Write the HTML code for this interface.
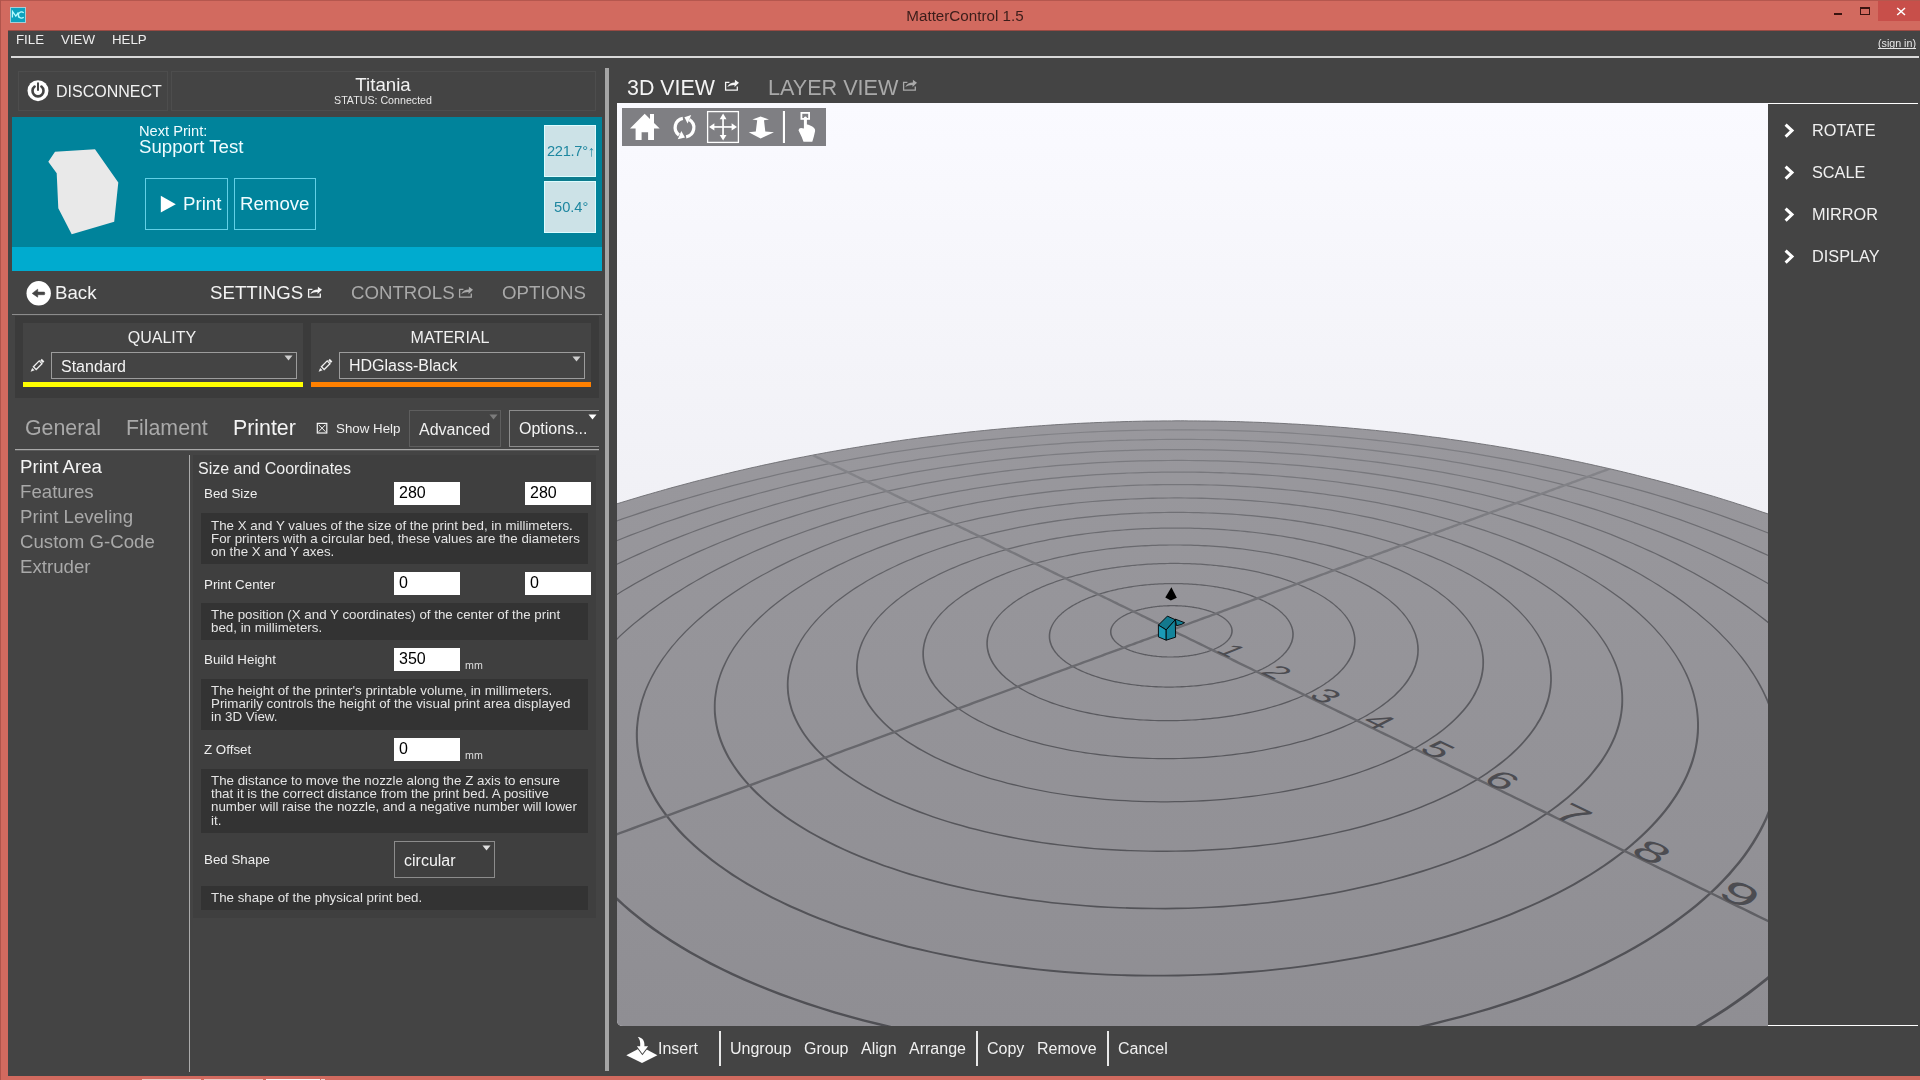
<!DOCTYPE html><html><head><meta charset="utf-8"><style>
html,body{margin:0;padding:0;width:1920px;height:1080px;overflow:hidden;background:#d26a5f;}
.t{position:absolute;white-space:pre;font-family:"Liberation Sans",sans-serif;will-change:transform;}
.r{position:absolute;}
svg{position:absolute;}
</style></head><body>
<div class="r" style="left:0px;top:0px;width:1920px;height:1px;background:#b5574e;"></div>
<div class="r" style="left:0px;top:0px;width:1px;height:1080px;background:#b0544b;"></div>
<div class="r" style="left:8px;top:31px;width:1912px;height:1045px;background:#444444;"></div>
<div class="r" style="left:8px;top:30px;width:1912px;height:1px;background:#9a4a43;"></div>
<svg style="left:10px;top:7px" width="16" height="16"><rect x="0.5" y="0.5" width="15" height="15" fill="#0ca2bf" stroke="#a9ccd6" stroke-width="1"/><path d="M2.4,10.6 L2.5,4.4 L5.8,9.1 L8.4,5.5 M8.6,10.5 L8.3,5.5" fill="none" stroke="#b4fbff" stroke-width="1.3"/><path d="M13.7,5.9 A3.1,3.1 0 1 0 13.7,10.2" fill="none" stroke="#b4fbff" stroke-width="1.3"/></svg>
<div class="t" style="left:664.8px;width:600px;text-align:center;top:7.9px;font-size:15.2px;line-height:15.2px;color:#3b1d1a;">MatterControl 1.5</div>
<div class="r" style="left:1878px;top:1px;width:42px;height:20px;background:#c84f4a;"></div>
<div class="r" style="left:1834px;top:13px;width:8px;height:2px;background:#3a1410;"></div>
<div class="r" style="left:1860px;top:7px;width:10px;height:8px;box-sizing:border-box;border:1px solid #3a1410;background:transparent;border-top-width:2px;"></div>
<svg style="left:1890px;top:4px" width="20" height="14"><path d="M7.2,4 L15,11 M15,4 L7.2,11" stroke="#fff" stroke-width="1.5"/></svg>
<div class="t" style="left:16.3px;top:33.0px;font-size:13.3px;line-height:13.3px;color:#eeeeee;">FILE</div>
<div class="t" style="left:61.0px;top:33.0px;font-size:13.3px;line-height:13.3px;color:#eeeeee;">VIEW</div>
<div class="t" style="left:112.2px;top:33.0px;font-size:13.3px;line-height:13.3px;color:#eeeeee;">HELP</div>
<div class="t" style="left:1316.0px;width:600px;text-align:right;top:37.8px;font-size:10.7px;line-height:10.7px;color:#e6e6e6;text-decoration:underline;text-decoration-skip-ink:none;">(sign in)</div>
<div class="r" style="left:11px;top:56px;width:1908px;height:2px;background:#d9d9d9;"></div>
<div class="r" style="left:18px;top:71px;width:150px;height:40px;box-sizing:border-box;border:1px solid #4d4d4d;background:transparent;"></div>
<div class="r" style="left:171px;top:71px;width:425px;height:40px;box-sizing:border-box;border:1px solid #4d4d4d;background:transparent;"></div>
<svg style="left:26px;top:79px" width="24" height="24"><circle cx="12" cy="11.7" r="10.5" fill="#fff"/><path d="M8.6,7.6 A5.5,5.5 0 1 0 15.4,7.6" fill="none" stroke="#444" stroke-width="2.6" stroke-linecap="round"/><path d="M12,4.2 L12,11" stroke="#444" stroke-width="2" stroke-linecap="round"/></svg>
<div class="t" style="left:56.0px;top:84.1px;font-size:16px;line-height:16px;color:#f2f2f2;">DISCONNECT</div>
<div class="t" style="left:83.0px;width:600px;text-align:center;top:76.0px;font-size:18.67px;line-height:18.67px;color:#f2f2f2;">Titania</div>
<div class="t" style="left:83.0px;width:600px;text-align:center;top:95.2px;font-size:10.67px;line-height:10.67px;color:#e8e8e8;">STATUS: Connected</div>
<div class="r" style="left:12px;top:117px;width:590px;height:130px;background:#00839b;"></div>
<div class="r" style="left:12px;top:247px;width:590px;height:24px;background:#00abcf;"></div>
<svg style="left:40px;top:140px" width="90" height="100"><polygon points="8.3,21.7 15,11.7 55,9.2 78.3,42.5 74.2,81.7 31.7,94.2 18.3,68.3 16.7,33.3" fill="#e9e9e9"/></svg>
<div class="t" style="left:139.0px;top:123.6px;font-size:14.67px;line-height:14.67px;color:#effcff;">Next Print:</div>
<div class="t" style="left:139.0px;top:137.7px;font-size:18.67px;line-height:18.67px;color:#effcff;">Support Test</div>
<div class="r" style="left:145px;top:178px;width:83px;height:52px;box-sizing:border-box;border:1px solid #62d0e6;background:transparent;"></div>
<div class="r" style="left:234px;top:178px;width:82px;height:52px;box-sizing:border-box;border:1px solid #62d0e6;background:transparent;"></div>
<svg style="left:155px;top:190px" width="30" height="30"><polygon points="5.8,5.8 20.8,14.2 5.8,22.5" fill="#fff"/></svg>
<div class="t" style="left:183.0px;top:195.2px;font-size:18.67px;line-height:18.67px;color:#effcff;">Print</div>
<div class="t" style="left:240.0px;top:195.2px;font-size:18.67px;line-height:18.67px;color:#effcff;">Remove</div>
<div class="r" style="left:544px;top:177px;width:52px;height:4px;background:#0c7c8e;"></div>
<div class="r" style="left:544px;top:125px;width:52px;height:52px;box-sizing:border-box;border:1px solid #dcfdff;background:#cce2e7;"></div>
<div class="r" style="left:544px;top:181px;width:52px;height:52px;box-sizing:border-box;border:1px solid #dcfdff;background:#cce2e7;"></div>
<div class="t" style="left:547.3px;top:144.1px;font-size:14.67px;line-height:14.67px;color:#1e87a0;letter-spacing:-0.3px;">221.7°↑</div>
<div class="t" style="left:553.6px;top:199.8px;font-size:14.67px;line-height:14.67px;color:#1e87a0;">50.4°</div>
<svg style="left:26px;top:281px" width="26" height="26"><circle cx="12.7" cy="12.3" r="12.2" fill="#fff"/><path d="M6.2,12.4 L11.7,8.2 L11.7,11.1 L18.4,11.1 Q19.2,12.4 18.4,13.7 L11.7,13.7 L11.7,16.2 Z" fill="#444" stroke="#444" stroke-width="0.6" stroke-linejoin="round"/></svg>
<div class="t" style="left:55.3px;top:283.9px;font-size:18.67px;line-height:18.67px;color:#f4f4f4;">Back</div>
<div class="t" style="left:210.0px;top:283.9px;font-size:18.67px;line-height:18.67px;color:#f4f4f4;">SETTINGS</div>
<div class="t" style="left:351.0px;top:283.9px;font-size:18.67px;line-height:18.67px;color:#a9a9a9;">CONTROLS</div>
<div class="t" style="left:502.2px;top:283.9px;font-size:18.67px;line-height:18.67px;color:#a9a9a9;">OPTIONS</div>
<svg style="left:307px;top:285px" width="17" height="14"><path d="M5.4,4.3 L1.6,4.3 L1.6,12.2 L13.3,12.2 L13.3,8.6" fill="none" stroke="#f4f4f4" stroke-width="1.3"/><path d="M3.2,9 C4.8,5.6 7.6,4.4 10.9,4.4 L10.9,1.7 L15,4.8 L10.5,9.1 L10.5,7 C7.6,7 5.4,7.7 3.2,9 Z" fill="#f4f4f4"/></svg>
<svg style="left:458px;top:285px" width="17" height="14"><path d="M5.4,4.3 L1.6,4.3 L1.6,12.2 L13.3,12.2 L13.3,8.6" fill="none" stroke="#a9a9a9" stroke-width="1.3"/><path d="M3.2,9 C4.8,5.6 7.6,4.4 10.9,4.4 L10.9,1.7 L15,4.8 L10.5,9.1 L10.5,7 C7.6,7 5.4,7.7 3.2,9 Z" fill="#a9a9a9"/></svg>
<div class="r" style="left:12px;top:314px;width:590px;height:1px;background:#8c8c8c;"></div>
<div class="r" style="left:15px;top:316px;width:584px;height:82px;background:#3b3b3b;"></div>
<div class="r" style="left:23px;top:323px;width:280px;height:64px;background:#444444;"></div>
<div class="r" style="left:311px;top:323px;width:280px;height:64px;background:#444444;"></div>
<div class="r" style="left:23px;top:382px;width:280px;height:5px;background:#ffff00;"></div>
<div class="r" style="left:311px;top:382px;width:280px;height:5px;background:#ff8000;"></div>
<div class="t" style="left:-138.3px;width:600px;text-align:center;top:329.5px;font-size:16px;line-height:16px;color:#f0f0f0;">QUALITY</div>
<div class="t" style="left:150.0px;width:600px;text-align:center;top:329.5px;font-size:16px;line-height:16px;color:#f0f0f0;">MATERIAL</div>
<div class="r" style="left:51px;top:352px;width:246px;height:27px;box-sizing:border-box;border:1px solid #9c9c9c;background:transparent;"></div>
<div class="r" style="left:339px;top:352px;width:246px;height:27px;box-sizing:border-box;border:1px solid #9c9c9c;background:transparent;"></div>
<div class="t" style="left:61.0px;top:358.8px;font-size:16px;line-height:16px;color:#f4f4f4;">Standard</div>
<div class="t" style="left:349.0px;top:358.3px;font-size:16px;line-height:16px;color:#f4f4f4;">HDGlass-Black</div>
<svg style="left:283.9px;top:355.2px" width="10" height="7"><polygon points="0.5,0.5 8.5,0.5 4.5,5.5" fill="#cfcfcf"/></svg>
<svg style="left:571.9px;top:355.7px" width="10" height="7"><polygon points="0.5,0.5 8.5,0.5 4.5,5.5" fill="#cfcfcf"/></svg>
<svg style="left:29px;top:357px" width="17" height="17"><polygon points="4.4,9.7 10.2,3.9 13,6.7 7.2,12.5" fill="none" stroke="#eeeeee" stroke-width="1.3"/><path d="M12,2.6 L14.6,5.2" stroke="#eeeeee" stroke-width="2.2"/><polygon points="1.6,14.8 3.2,10.9 5.6,13.3" fill="#eeeeee"/></svg>
<svg style="left:317px;top:357px" width="17" height="17"><polygon points="4.4,9.7 10.2,3.9 13,6.7 7.2,12.5" fill="none" stroke="#eeeeee" stroke-width="1.3"/><path d="M12,2.6 L14.6,5.2" stroke="#eeeeee" stroke-width="2.2"/><polygon points="1.6,14.8 3.2,10.9 5.6,13.3" fill="#eeeeee"/></svg>
<div class="t" style="left:25.0px;top:418.0px;font-size:21.33px;line-height:21.33px;color:#a9a9a9;">General</div>
<div class="t" style="left:126.3px;top:418.0px;font-size:21.33px;line-height:21.33px;color:#a9a9a9;">Filament</div>
<div class="t" style="left:233.0px;top:418.0px;font-size:21.33px;line-height:21.33px;color:#f4f4f4;">Printer</div>
<svg style="left:316px;top:422px" width="13" height="13"><rect x="1.3" y="1.4" width="9.5" height="9.6" fill="none" stroke="#f4f4f4" stroke-width="1.2"/><path d="M2.6,2.7 L9.5,9.7 M9.5,2.7 L2.6,9.7" stroke="#f4f4f4" stroke-width="1"/></svg>
<div class="t" style="left:336.0px;top:422.1px;font-size:13.33px;line-height:13.33px;color:#eeeeee;">Show Help</div>
<div class="r" style="left:409px;top:410px;width:92px;height:37px;box-sizing:border-box;border:1px solid #5e5e5e;background:transparent;"></div>
<div class="t" style="left:419.0px;top:422.2px;font-size:16px;line-height:16px;color:#f0f0f0;">Advanced</div>
<svg style="left:488.8px;top:413.8px" width="10" height="7"><polygon points="0.5,0.5 8.5,0.5 4.5,5.5" fill="#7c7c7c"/></svg>
<div class="r" style="left:509px;top:410px;width:90px;height:37px;box-sizing:border-box;border:1px solid #8c8c8c;border-right:none"></div>
<div class="t" style="left:519.0px;top:420.6px;font-size:16px;line-height:16px;color:#f4f4f4;">Options...</div>
<svg style="left:587.5px;top:414px" width="10" height="7"><polygon points="0.5,0.5 8.5,0.5 4.5,5.5" fill="#ffffff"/></svg>
<div class="r" style="left:15px;top:449px;width:584px;height:1px;background:#a8a8a8;"></div>
<div class="r" style="left:15px;top:450px;width:584px;height:1px;background:#5c5c5c;"></div>
<div class="t" style="left:20.0px;top:458.2px;font-size:18.67px;line-height:18.67px;color:#f4f4f4;">Print Area</div>
<div class="t" style="left:20.0px;top:483.2px;font-size:18.67px;line-height:18.67px;color:#a9a9a9;">Features</div>
<div class="t" style="left:20.0px;top:508.2px;font-size:18.67px;line-height:18.67px;color:#a9a9a9;">Print Leveling</div>
<div class="t" style="left:20.0px;top:533.2px;font-size:18.67px;line-height:18.67px;color:#a9a9a9;">Custom G-Code</div>
<div class="t" style="left:20.0px;top:558.2px;font-size:18.67px;line-height:18.67px;color:#a9a9a9;">Extruder</div>
<div class="r" style="left:189px;top:455px;width:1px;height:617px;background:#ababab;"></div>
<div class="r" style="left:193px;top:455px;width:403px;height:463px;background:#3f3f3f;"></div>
<div class="t" style="left:198.0px;top:460.5px;font-size:16px;line-height:16px;color:#f0f0f0;">Size and Coordinates</div>
<div class="t" style="left:204.0px;top:486.9px;font-size:13.33px;line-height:13.33px;color:#eeeeee;">Bed Size</div>
<div class="r" style="left:394px;top:482px;width:66px;height:23px;background:#ffffff;"></div>
<div class="t" style="left:399.0px;top:484.8px;font-size:16px;line-height:16px;color:#000000;">280</div>
<div class="r" style="left:525px;top:482px;width:66px;height:23px;background:#ffffff;"></div>
<div class="t" style="left:530.0px;top:484.8px;font-size:16px;line-height:16px;color:#000000;">280</div>
<div class="r" style="left:201px;top:513px;width:387px;height:51px;background:#333333;"></div>
<div class="t" style="left:211.0px;top:518.6px;font-size:13.33px;line-height:13.33px;color:#e4e4e4;">The X and Y values of the size of the print bed, in millimeters.</div>
<div class="t" style="left:211.0px;top:531.9px;font-size:13.33px;line-height:13.33px;color:#e4e4e4;">For printers with a circular bed, these values are the diameters</div>
<div class="t" style="left:211.0px;top:544.7px;font-size:13.33px;line-height:13.33px;color:#e4e4e4;">on the X and Y axes.</div>
<div class="t" style="left:204.0px;top:577.8px;font-size:13.33px;line-height:13.33px;color:#eeeeee;">Print Center</div>
<div class="r" style="left:394px;top:572px;width:66px;height:23px;background:#ffffff;"></div>
<div class="t" style="left:399.0px;top:574.8px;font-size:16px;line-height:16px;color:#000000;">0</div>
<div class="r" style="left:525px;top:572px;width:66px;height:23px;background:#ffffff;"></div>
<div class="t" style="left:530.0px;top:574.8px;font-size:16px;line-height:16px;color:#000000;">0</div>
<div class="r" style="left:201px;top:603px;width:387px;height:37px;background:#333333;"></div>
<div class="t" style="left:211.0px;top:608.4px;font-size:13.33px;line-height:13.33px;color:#e4e4e4;">The position (X and Y coordinates) of the center of the print</div>
<div class="t" style="left:211.0px;top:621.4px;font-size:13.33px;line-height:13.33px;color:#e4e4e4;">bed, in millimeters.</div>
<div class="t" style="left:204.0px;top:653.3px;font-size:13.33px;line-height:13.33px;color:#eeeeee;">Build Height</div>
<div class="r" style="left:394px;top:648px;width:66px;height:23px;background:#ffffff;"></div>
<div class="t" style="left:399.0px;top:650.8px;font-size:16px;line-height:16px;color:#000000;">350</div>
<div class="t" style="left:465.0px;top:660.0px;font-size:10.67px;line-height:10.67px;color:#dddddd;">mm</div>
<div class="r" style="left:201px;top:679px;width:387px;height:51px;background:#333333;"></div>
<div class="t" style="left:211.0px;top:683.9px;font-size:13.33px;line-height:13.33px;color:#e4e4e4;">The height of the printer's printable volume, in millimeters.</div>
<div class="t" style="left:211.0px;top:697.1px;font-size:13.33px;line-height:13.33px;color:#e4e4e4;">Primarily controls the height of the visual print area displayed</div>
<div class="t" style="left:211.0px;top:710.3px;font-size:13.33px;line-height:13.33px;color:#e4e4e4;">in 3D View.</div>
<div class="t" style="left:204.0px;top:742.7px;font-size:13.33px;line-height:13.33px;color:#eeeeee;">Z Offset</div>
<div class="r" style="left:394px;top:738px;width:66px;height:23px;background:#ffffff;"></div>
<div class="t" style="left:399.0px;top:740.8px;font-size:16px;line-height:16px;color:#000000;">0</div>
<div class="t" style="left:465.0px;top:750.0px;font-size:10.67px;line-height:10.67px;color:#dddddd;">mm</div>
<div class="r" style="left:201px;top:769px;width:387px;height:64px;background:#333333;"></div>
<div class="t" style="left:211.0px;top:773.5px;font-size:13.33px;line-height:13.33px;color:#e4e4e4;">The distance to move the nozzle along the Z axis to ensure</div>
<div class="t" style="left:211.0px;top:786.9px;font-size:13.33px;line-height:13.33px;color:#e4e4e4;">that it is the correct distance from the print bed. A positive</div>
<div class="t" style="left:211.0px;top:800.1px;font-size:13.33px;line-height:13.33px;color:#e4e4e4;">number will raise the nozzle, and a negative number will lower</div>
<div class="t" style="left:211.0px;top:813.5px;font-size:13.33px;line-height:13.33px;color:#e4e4e4;">it.</div>
<div class="t" style="left:204.0px;top:853.3px;font-size:13.33px;line-height:13.33px;color:#eeeeee;">Bed Shape</div>
<div class="r" style="left:394px;top:841px;width:101px;height:37px;box-sizing:border-box;border:1px solid #8c8c8c;background:transparent;"></div>
<div class="t" style="left:404.0px;top:853.0px;font-size:16px;line-height:16px;color:#f4f4f4;">circular</div>
<svg style="left:482px;top:844.5px" width="10" height="7"><polygon points="0.5,0.5 8.5,0.5 4.5,5.5" fill="#e0e0e0"/></svg>
<div class="r" style="left:201px;top:886px;width:387px;height:24px;background:#333333;"></div>
<div class="t" style="left:211.0px;top:891.2px;font-size:13.33px;line-height:13.33px;color:#e4e4e4;">The shape of the physical print bed.</div>
<div class="r" style="left:142px;top:1079px;width:59px;height:1px;background:#eec8c4;"></div>
<div class="r" style="left:204px;top:1079px;width:59px;height:1px;background:#eec8c4;"></div>
<div class="r" style="left:266px;top:1079px;width:54px;height:1px;background:#fbf4f4;"></div>
<div class="r" style="left:321px;top:1079px;width:4px;height:1px;background:#f0d8d6;"></div>
<div class="r" style="left:605px;top:68px;width:4px;height:1003px;background:#a5a5a5;"></div>
<div class="t" style="left:626.6px;top:77.6px;font-size:21.4px;line-height:21.4px;color:#f4f4f4;">3D VIEW</div>
<div class="t" style="left:768.0px;top:77.4px;font-size:21.6px;line-height:21.6px;color:#a9a9a9;">LAYER VIEW</div>
<svg style="left:723.5px;top:78.2px" width="17" height="14"><path d="M5.4,4.3 L1.6,4.3 L1.6,12.2 L13.3,12.2 L13.3,8.6" fill="none" stroke="#f4f4f4" stroke-width="1.3"/><path d="M3.2,9 C4.8,5.6 7.6,4.4 10.9,4.4 L10.9,1.7 L15,4.8 L10.5,9.1 L10.5,7 C7.6,7 5.4,7.7 3.2,9 Z" fill="#f4f4f4"/></svg>
<svg style="left:902px;top:78.2px" width="17" height="14"><path d="M5.4,4.3 L1.6,4.3 L1.6,12.2 L13.3,12.2 L13.3,8.6" fill="none" stroke="#a9a9a9" stroke-width="1.3"/><path d="M3.2,9 C4.8,5.6 7.6,4.4 10.9,4.4 L10.9,1.7 L15,4.8 L10.5,9.1 L10.5,7 C7.6,7 5.4,7.7 3.2,9 Z" fill="#a9a9a9"/></svg>
<svg style="left:617px;top:103px" width="1151" height="923" viewBox="617 103 1151 923"><defs><linearGradient id="sky" x1="0" y1="0" x2="0" y2="1"><stop offset="0" stop-color="#fafaff"/><stop offset="0.45" stop-color="#f0f0f5"/><stop offset="1" stop-color="#e8e8ee"/></linearGradient><linearGradient id="bedg" gradientUnits="userSpaceOnUse" x1="0" y1="420" x2="0" y2="1026"><stop offset="0" stop-color="#99989d"/><stop offset="1" stop-color="#8f8e93"/></linearGradient><linearGradient id="ringg" gradientUnits="userSpaceOnUse" x1="0" y1="420" x2="0" y2="1026"><stop offset="0" stop-color="#838388"/><stop offset="0.3" stop-color="#5e5e63"/><stop offset="1" stop-color="#4f4f54"/></linearGradient><linearGradient id="axg" gradientUnits="userSpaceOnUse" x1="0" y1="420" x2="0" y2="1026"><stop offset="0" stop-color="#8b8b90"/><stop offset="0.35" stop-color="#6c6c71"/><stop offset="1" stop-color="#5a5a5f"/></linearGradient><clipPath id="vc"><path d="M617,103 H1768 V1026 H623 Q617,1026 617,1020 Z"/></clipPath></defs><rect x="617" y="103" width="1151" height="923" fill="#444444"/><path d="M617,103 H1768 V1026 H623 Q617,1026 617,1020 Z" fill="url(#sky)"/><g clip-path="url(#vc)"><path d="M1798.0,1056.0L1798.0,524.6L1796.6,524.1L1791.6,522.3L1786.7,520.5L1781.8,518.7L1776.9,517.0L1772.0,515.3L1767.1,513.6L1762.2,512.0L1757.3,510.3L1752.4,508.7L1747.5,507.1L1742.7,505.5L1737.8,504.0L1733.0,502.4L1728.1,500.9L1723.3,499.4L1718.5,497.9L1713.7,496.4L1708.9,495.0L1704.1,493.6L1699.3,492.2L1694.5,490.8L1689.7,489.4L1684.9,488.1L1680.2,486.7L1675.4,485.4L1670.7,484.1L1665.9,482.8L1661.2,481.6L1656.5,480.3L1651.7,479.1L1647.0,477.9L1642.3,476.7L1637.6,475.5L1632.9,474.3L1628.3,473.2L1623.6,472.0L1618.9,470.9L1614.3,469.8L1609.6,468.7L1605.0,467.7L1600.3,466.6L1595.7,465.6L1591.0,464.5L1586.4,463.5L1581.8,462.5L1577.2,461.5L1572.6,460.6L1568.0,459.6L1563.4,458.7L1558.8,457.7L1554.3,456.8L1549.7,455.9L1545.1,455.0L1540.6,454.2L1536.0,453.3L1531.5,452.5L1526.9,451.6L1522.4,450.8L1517.9,450.0L1513.3,449.2L1508.8,448.4L1504.3,447.6L1499.8,446.9L1495.3,446.1L1490.8,445.4L1486.3,444.7L1481.8,444.0L1477.3,443.3L1472.9,442.6L1468.4,441.9L1463.9,441.3L1459.5,440.6L1455.0,440.0L1450.5,439.4L1446.1,438.7L1441.7,438.1L1437.2,437.5L1432.8,437.0L1428.3,436.4L1423.9,435.8L1419.5,435.3L1415.1,434.8L1410.7,434.2L1406.3,433.7L1401.8,433.2L1397.4,432.7L1393.0,432.2L1388.6,431.8L1384.3,431.3L1379.9,430.9L1375.5,430.4L1371.1,430.0L1366.7,429.6L1362.3,429.2L1358.0,428.8L1353.6,428.4L1349.2,428.0L1344.9,427.6L1340.5,427.3L1336.1,426.9L1331.8,426.6L1327.4,426.3L1323.1,425.9L1318.7,425.6L1314.4,425.3L1310.0,425.0L1305.7,424.8L1301.4,424.5L1297.0,424.2L1292.7,424.0L1288.3,423.8L1284.0,423.5L1279.7,423.3L1275.3,423.1L1271.0,422.9L1266.7,422.7L1262.4,422.5L1258.0,422.3L1253.7,422.2L1249.4,422.0L1245.1,421.9L1240.7,421.7L1236.4,421.6L1232.1,421.5L1227.8,421.4L1223.5,421.3L1219.1,421.2L1214.8,421.1L1210.5,421.1L1206.2,421.0L1201.9,421.0L1197.6,420.9L1193.2,420.9L1188.9,420.9L1184.6,420.8L1180.3,420.8L1176.0,420.8L1171.6,420.9L1167.3,420.9L1163.0,420.9L1158.7,421.0L1154.4,421.0L1150.0,421.1L1145.7,421.1L1141.4,421.2L1137.1,421.3L1132.7,421.4L1128.4,421.5L1124.1,421.6L1119.8,421.8L1115.4,421.9L1111.1,422.0L1106.7,422.2L1102.4,422.4L1098.1,422.5L1093.7,422.7L1089.4,422.9L1085.0,423.1L1080.7,423.3L1076.3,423.5L1072.0,423.8L1067.6,424.0L1063.3,424.3L1058.9,424.5L1054.6,424.8L1050.2,425.1L1045.8,425.4L1041.5,425.7L1037.1,426.0L1032.7,426.3L1028.3,426.6L1023.9,427.0L1019.6,427.3L1015.2,427.7L1010.8,428.0L1006.4,428.4L1002.0,428.8L997.6,429.2L993.2,429.6L988.8,430.0L984.3,430.5L979.9,430.9L975.5,431.4L971.1,431.8L966.6,432.3L962.2,432.8L957.8,433.3L953.3,433.8L948.9,434.3L944.4,434.8L939.9,435.4L935.5,435.9L931.0,436.5L926.5,437.0L922.0,437.6L917.6,438.2L913.1,438.8L908.6,439.4L904.1,440.0L899.6,440.7L895.1,441.3L890.5,442.0L886.0,442.7L881.5,443.4L876.9,444.1L872.4,444.8L867.9,445.5L863.3,446.2L858.7,447.0L854.2,447.7L849.6,448.5L845.0,449.3L840.4,450.1L835.8,450.9L831.2,451.7L826.6,452.5L822.0,453.4L817.4,454.2L812.8,455.1L808.1,456.0L803.5,456.9L798.8,457.8L794.2,458.7L789.5,459.7L784.9,460.6L780.2,461.6L775.5,462.6L770.8,463.6L766.1,464.6L761.4,465.6L756.7,466.7L752.0,467.7L747.2,468.8L742.5,469.9L737.7,471.0L733.0,472.1L728.2,473.3L723.4,474.4L718.7,475.6L713.9,476.8L709.1,478.0L704.3,479.2L699.4,480.4L694.6,481.6L689.8,482.9L685.0,484.2L680.1,485.5L675.2,486.8L670.4,488.1L665.5,489.5L660.6,490.9L655.7,492.3L650.8,493.7L645.9,495.1L641.0,496.5L636.1,498.0L631.1,499.5L626.2,501.0L621.2,502.5L616.2,504.0L611.3,505.6L606.3,507.2L601.3,508.8L596.3,510.4L591.3,512.0L587.0,513.4L587.0,1056.0Z" fill="url(#bedg)" stroke="#6c6c71" stroke-width="0.9"/><path d="M1213.1,650.4L1213.9,650.0L1214.7,649.7L1215.5,649.3L1216.2,649.0L1217.0,648.6L1217.7,648.3L1218.4,647.9L1219.1,647.5L1219.8,647.2L1220.5,646.8L1221.1,646.4L1221.8,646.0L1222.4,645.6L1223.0,645.2L1223.6,644.8L1224.1,644.4L1224.7,644.0L1225.2,643.6L1225.7,643.2L1226.2,642.7L1226.7,642.3L1227.1,641.9L1227.6,641.5L1228.0,641.0L1228.4,640.6L1228.8,640.2L1229.2,639.7L1229.6,639.3L1229.9,638.9L1230.2,638.4L1230.5,638.0L1230.8,637.5L1231.1,637.1L1231.3,636.6L1231.6,636.2L1231.8,635.7L1232.0,635.3L1232.1,634.8L1232.3,634.4L1232.4,633.9L1232.5,633.5L1232.6,633.0L1232.7,632.5L1232.8,632.1L1232.8,631.6L1232.8,631.2L1232.8,630.7L1232.8,630.3L1232.8,629.8L1232.7,629.4L1232.6,628.9L1232.5,628.5L1232.4,628.0L1232.3,627.6L1232.2,627.1L1232.0,626.7L1231.8,626.2L1231.6,625.8L1231.4,625.4L1231.2,624.9L1230.9,624.5L1230.6,624.1L1230.3,623.6L1230.0,623.2L1229.7,622.8L1229.4,622.4L1229.0,622.0L1228.7,621.5L1228.3,621.1L1227.9,620.7L1227.5,620.3L1227.1,619.9L1226.6,619.5L1226.2,619.1L1225.7,618.7L1225.2,618.3L1224.7,617.9L1224.2,617.6L1223.7,617.2L1223.1,616.8L1222.5,616.4L1222.0,616.1L1221.4,615.7L1220.8,615.4L1220.1,615.0L1219.5,614.7L1218.9,614.3L1218.2,614.0L1217.5,613.7L1216.8,613.3L1216.1,613.0L1215.4,612.7L1214.7,612.4L1214.0,612.1L1213.2,611.8L1212.4,611.5L1211.7,611.2L1210.9,610.9L1210.1,610.6L1209.3,610.4L1208.5,610.1L1207.6,609.9L1206.8,609.6L1206.0,609.4L1205.1,609.1L1204.2,608.9L1203.3,608.7L1202.5,608.4L1201.6,608.2L1200.7,608.0L1199.7,607.8L1198.8,607.6L1197.9,607.4L1197.0,607.3L1196.0,607.1L1195.1,606.9L1194.1,606.8L1193.2,606.6L1192.2,606.5L1191.2,606.3L1190.2,606.2L1189.3,606.1L1188.3,605.9L1187.3,605.8L1186.3,605.7L1185.3,605.6L1184.3,605.6L1183.2,605.5L1182.2,605.4L1181.2,605.3L1180.2,605.3L1179.2,605.2L1178.2,605.2L1177.1,605.1L1176.1,605.1L1175.1,605.1L1174.0,605.1L1173.0,605.1L1172.0,605.1L1170.9,605.1L1169.9,605.1L1168.9,605.1L1167.9,605.1L1166.8,605.2L1165.8,605.2L1164.8,605.3L1163.7,605.3L1162.7,605.4L1161.7,605.5L1160.7,605.5L1159.7,605.6L1158.7,605.7L1157.6,605.8L1156.6,605.9L1155.6,606.1L1154.6,606.2L1153.7,606.3L1152.7,606.5L1151.7,606.6L1150.7,606.8L1149.7,606.9L1148.8,607.1L1147.8,607.2L1146.9,607.4L1145.9,607.6L1145.0,607.8L1144.1,608.0L1143.1,608.2L1142.2,608.4L1141.3,608.6L1140.4,608.9L1139.5,609.1L1138.7,609.3L1137.8,609.6L1136.9,609.8L1136.1,610.1L1135.2,610.4L1134.4,610.6L1133.6,610.9L1132.8,611.2L1132.0,611.5L1131.2,611.8L1130.4,612.1L1129.6,612.4L1128.9,612.7L1128.2,613.0L1127.4,613.3L1126.7,613.6L1126.0,614.0L1125.3,614.3L1124.6,614.7L1124.0,615.0L1123.3,615.3L1122.7,615.7L1122.1,616.1L1121.5,616.4L1120.9,616.8L1120.3,617.2L1119.7,617.5L1119.2,617.9L1118.6,618.3L1118.1,618.7L1117.6,619.1L1117.1,619.5L1116.6,619.9L1116.2,620.3L1115.7,620.7L1115.3,621.1L1114.9,621.5L1114.5,621.9L1114.1,622.4L1113.8,622.8L1113.4,623.2L1113.1,623.6L1112.8,624.1L1112.4,624.5L1112.2,624.9L1111.9,625.4L1111.6,625.8L1111.4,626.2L1111.2,626.7L1111.0,627.1L1110.8,627.6L1110.6,628.0L1110.5,628.5L1110.3,628.9L1110.2,629.4L1110.1,629.8L1110.1,630.3L1110.0,630.7L1110.0,631.2L1110.0,631.6L1110.0,632.1L1110.0,632.5L1110.0,633.0L1110.1,633.5L1110.1,633.9L1110.2,634.4L1110.3,634.8L1110.5,635.3L1110.6,635.7L1110.8,636.2L1111.0,636.6L1111.2,637.1L1111.4,637.5L1111.7,638.0L1111.9,638.4L1112.2,638.9L1112.5,639.3L1112.9,639.7L1113.2,640.2L1113.6,640.6L1113.9,641.0L1114.3,641.5L1114.7,641.9L1115.2,642.3L1115.6,642.7L1116.1,643.2L1116.6,643.6L1117.1,644.0L1117.6,644.4L1118.1,644.8L1118.6,645.2L1119.2,645.6L1119.8,646.0L1120.4,646.4L1121.0,646.8L1121.6,647.1L1122.3,647.5L1123.0,647.9L1123.7,648.3L1124.4,648.6L1125.1,649.0L1125.8,649.3L1126.6,649.7L1127.3,650.0L1128.1,650.3L1128.9,650.7L1129.7,651.0L1130.5,651.3L1131.4,651.6L1132.2,651.9L1133.1,652.2L1134.0,652.5L1134.9,652.8L1135.8,653.1L1136.7,653.3L1137.6,653.6L1138.6,653.8L1139.5,654.1L1140.5,654.3L1141.5,654.6L1142.5,654.8L1143.5,655.0L1144.5,655.2L1145.5,655.4L1146.6,655.6L1147.6,655.8L1148.6,655.9L1149.7,656.1L1150.8,656.3L1151.8,656.4L1152.9,656.6L1154.0,656.7L1155.1,656.8L1156.2,656.9L1157.3,657.0L1158.4,657.1L1159.5,657.2L1160.6,657.3L1161.8,657.4L1162.9,657.5L1164.0,657.5L1165.2,657.6L1166.3,657.6L1167.4,657.6L1168.6,657.6L1169.7,657.6L1170.8,657.6L1172.0,657.6L1173.1,657.6L1174.3,657.6L1175.4,657.6L1176.5,657.5L1177.7,657.5L1178.8,657.4L1179.9,657.3L1181.1,657.2L1182.2,657.2L1183.3,657.1L1184.4,656.9L1185.5,656.8L1186.6,656.7L1187.7,656.6L1188.8,656.4L1189.9,656.3L1191.0,656.1L1192.0,656.0L1193.1,655.8L1194.2,655.6L1195.2,655.4L1196.3,655.2L1197.3,655.0L1198.3,654.8L1199.3,654.6L1200.3,654.3L1201.3,654.1L1202.3,653.8L1203.3,653.6L1204.2,653.3L1205.2,653.1L1206.1,652.8L1207.0,652.5L1207.9,652.2L1208.8,651.9L1209.7,651.6L1210.6,651.3L1211.4,651.0L1212.2,650.7ZM1210.7,649.9L1209.9,650.2L1209.1,650.5L1208.2,650.8L1207.4,651.1L1206.5,651.4L1205.6,651.6L1204.7,651.9L1203.8,652.1L1202.9,652.4L1202.0,652.6L1201.0,652.9L1200.1,653.1L1199.1,653.3L1198.2,653.5L1197.2,653.7L1196.2,653.9L1195.2,654.1L1194.2,654.3L1193.2,654.5L1192.2,654.7L1191.2,654.8L1190.1,655.0L1189.1,655.1L1188.0,655.3L1187.0,655.4L1185.9,655.5L1184.9,655.6L1183.8,655.7L1182.8,655.8L1181.7,655.9L1180.6,656.0L1179.5,656.1L1178.5,656.2L1177.4,656.2L1176.3,656.3L1175.2,656.3L1174.1,656.3L1173.0,656.4L1172.0,656.4L1170.9,656.4L1169.8,656.4L1168.7,656.4L1167.6,656.4L1166.5,656.3L1165.4,656.3L1164.4,656.3L1163.3,656.2L1162.2,656.2L1161.1,656.1L1160.1,656.0L1159.0,655.9L1157.9,655.9L1156.9,655.8L1155.8,655.6L1154.8,655.5L1153.7,655.4L1152.7,655.3L1151.7,655.1L1150.6,655.0L1149.6,654.8L1148.6,654.7L1147.6,654.5L1146.6,654.3L1145.6,654.1L1144.7,654.0L1143.7,653.8L1142.7,653.5L1141.8,653.3L1140.8,653.1L1139.9,652.9L1139.0,652.6L1138.1,652.4L1137.2,652.2L1136.3,651.9L1135.4,651.6L1134.6,651.4L1133.7,651.1L1132.9,650.8L1132.0,650.5L1131.2,650.2L1130.4,649.9L1129.6,649.6L1128.9,649.3L1128.1,649.0L1127.4,648.7L1126.6,648.3L1125.9,648.0L1125.2,647.7L1124.5,647.3L1123.9,647.0L1123.2,646.6L1122.6,646.2L1122.0,645.9L1121.4,645.5L1120.8,645.1L1120.2,644.8L1119.6,644.4L1119.1,644.0L1118.6,643.6L1118.1,643.2L1117.6,642.8L1117.1,642.4L1116.7,642.0L1116.2,641.6L1115.8,641.2L1115.4,640.7L1115.1,640.3L1114.7,639.9L1114.4,639.5L1114.1,639.1L1113.8,638.6L1113.5,638.2L1113.2,637.8L1113.0,637.3L1112.8,636.9L1112.6,636.5L1112.4,636.0L1112.2,635.6L1112.1,635.1L1111.9,634.7L1111.8,634.2L1111.7,633.8L1111.7,633.4L1111.6,632.9L1111.6,632.5L1111.5,632.0L1111.5,631.6L1111.6,631.1L1111.6,630.7L1111.6,630.3L1111.7,629.8L1111.8,629.4L1111.9,628.9L1112.0,628.5L1112.2,628.1L1112.3,627.6L1112.5,627.2L1112.7,626.8L1112.9,626.3L1113.2,625.9L1113.4,625.5L1113.7,625.1L1113.9,624.6L1114.2,624.2L1114.6,623.8L1114.9,623.4L1115.3,623.0L1115.6,622.6L1116.0,622.2L1116.4,621.8L1116.9,621.4L1117.3,621.0L1117.8,620.6L1118.2,620.2L1118.7,619.8L1119.2,619.4L1119.7,619.1L1120.3,618.7L1120.8,618.3L1121.4,617.9L1121.9,617.6L1122.5,617.2L1123.1,616.9L1123.7,616.5L1124.4,616.2L1125.0,615.9L1125.7,615.5L1126.3,615.2L1127.0,614.9L1127.7,614.6L1128.4,614.3L1129.1,614.0L1129.8,613.7L1130.5,613.4L1131.3,613.1L1132.0,612.8L1132.8,612.5L1133.6,612.2L1134.4,612.0L1135.2,611.7L1136.0,611.4L1136.8,611.2L1137.6,611.0L1138.4,610.7L1139.3,610.5L1140.1,610.3L1140.9,610.0L1141.8,609.8L1142.7,609.6L1143.5,609.4L1144.4,609.2L1145.3,609.0L1146.2,608.8L1147.1,608.7L1148.0,608.5L1148.9,608.3L1149.9,608.2L1150.8,608.0L1151.7,607.9L1152.6,607.7L1153.6,607.6L1154.5,607.5L1155.5,607.3L1156.4,607.2L1157.4,607.1L1158.3,607.0L1159.3,606.9L1160.2,606.8L1161.2,606.8L1162.2,606.7L1163.2,606.6L1164.1,606.6L1165.1,606.5L1166.1,606.5L1167.1,606.4L1168.0,606.4L1169.0,606.4L1170.0,606.3L1171.0,606.3L1172.0,606.3L1172.9,606.3L1173.9,606.3L1174.9,606.3L1175.9,606.4L1176.8,606.4L1177.8,606.4L1178.8,606.5L1179.8,606.5L1180.7,606.6L1181.7,606.6L1182.7,606.7L1183.6,606.8L1184.6,606.8L1185.5,606.9L1186.5,607.0L1187.4,607.1L1188.4,607.2L1189.3,607.3L1190.3,607.5L1191.2,607.6L1192.1,607.7L1193.1,607.9L1194.0,608.0L1194.9,608.2L1195.8,608.3L1196.7,608.5L1197.6,608.6L1198.5,608.8L1199.3,609.0L1200.2,609.2L1201.1,609.4L1201.9,609.6L1202.8,609.8L1203.6,610.0L1204.5,610.2L1205.3,610.5L1206.1,610.7L1206.9,610.9L1207.7,611.2L1208.5,611.4L1209.3,611.7L1210.1,612.0L1210.8,612.2L1211.6,612.5L1212.3,612.8L1213.0,613.1L1213.8,613.4L1214.5,613.6L1215.2,613.9L1215.9,614.3L1216.5,614.6L1217.2,614.9L1217.8,615.2L1218.5,615.5L1219.1,615.9L1219.7,616.2L1220.3,616.5L1220.9,616.9L1221.5,617.2L1222.0,617.6L1222.6,617.9L1223.1,618.3L1223.6,618.7L1224.1,619.0L1224.6,619.4L1225.1,619.8L1225.5,620.2L1226.0,620.6L1226.4,621.0L1226.8,621.4L1227.2,621.8L1227.6,622.2L1227.9,622.6L1228.2,623.0L1228.6,623.4L1228.8,623.8L1229.1,624.2L1229.4,624.6L1229.6,625.1L1229.9,625.5L1230.1,625.9L1230.3,626.3L1230.4,626.8L1230.6,627.2L1230.7,627.6L1230.9,628.1L1231.0,628.5L1231.1,628.9L1231.1,629.4L1231.2,629.8L1231.2,630.3L1231.2,630.7L1231.2,631.2L1231.2,631.6L1231.2,632.0L1231.1,632.5L1231.0,632.9L1230.9,633.4L1230.8,633.8L1230.7,634.3L1230.6,634.7L1230.4,635.1L1230.2,635.6L1230.0,636.0L1229.8,636.5L1229.5,636.9L1229.3,637.3L1229.0,637.8L1228.7,638.2L1228.4,638.6L1228.0,639.1L1227.7,639.5L1227.3,639.9L1226.9,640.3L1226.5,640.8L1226.1,641.2L1225.6,641.6L1225.2,642.0L1224.7,642.4L1224.2,642.8L1223.7,643.2L1223.1,643.6L1222.6,644.0L1222.0,644.4L1221.4,644.7L1220.8,645.1L1220.2,645.5L1219.5,645.9L1218.9,646.2L1218.2,646.6L1217.5,647.0L1216.8,647.3L1216.1,647.7L1215.4,648.0L1214.7,648.3L1213.9,648.7L1213.1,649.0L1212.3,649.3L1211.6,649.6ZM1257.3,671.9L1258.9,671.2L1260.5,670.5L1262.1,669.8L1263.6,669.0L1265.1,668.3L1266.5,667.5L1267.9,666.7L1269.3,665.9L1270.7,665.1L1272.0,664.3L1273.2,663.5L1274.5,662.7L1275.7,661.9L1276.8,661.1L1277.9,660.2L1279.0,659.4L1280.1,658.5L1281.1,657.6L1282.1,656.8L1283.0,655.9L1283.9,655.0L1284.8,654.1L1285.6,653.3L1286.4,652.4L1287.1,651.5L1287.8,650.6L1288.5,649.7L1289.1,648.8L1289.7,647.9L1290.2,647.0L1290.7,646.0L1291.2,645.1L1291.6,644.2L1292.0,643.3L1292.4,642.4L1292.7,641.5L1292.9,640.5L1293.2,639.6L1293.4,638.7L1293.5,637.8L1293.7,636.9L1293.7,636.0L1293.8,635.0L1293.8,634.1L1293.8,633.2L1293.7,632.3L1293.6,631.4L1293.4,630.5L1293.3,629.6L1293.0,628.7L1292.8,627.8L1292.5,626.9L1292.2,626.0L1291.8,625.2L1291.4,624.3L1291.0,623.4L1290.5,622.5L1290.0,621.7L1289.5,620.8L1288.9,620.0L1288.3,619.1L1287.7,618.3L1287.1,617.5L1286.4,616.6L1285.7,615.8L1284.9,615.0L1284.1,614.2L1283.3,613.4L1282.5,612.6L1281.6,611.8L1280.7,611.1L1279.8,610.3L1278.9,609.5L1277.9,608.8L1276.9,608.0L1275.8,607.3L1274.8,606.6L1273.7,605.8L1272.6,605.1L1271.4,604.4L1270.2,603.7L1269.1,603.1L1267.8,602.4L1266.6,601.7L1265.3,601.1L1264.0,600.4L1262.7,599.8L1261.4,599.2L1260.0,598.6L1258.6,598.0L1257.2,597.4L1255.8,596.8L1254.3,596.2L1252.9,595.6L1251.4,595.1L1249.9,594.6L1248.3,594.0L1246.8,593.5L1245.2,593.0L1243.6,592.5L1242.0,592.0L1240.4,591.6L1238.8,591.1L1237.1,590.7L1235.5,590.2L1233.8,589.8L1232.1,589.4L1230.4,589.0L1228.6,588.6L1226.9,588.2L1225.1,587.9L1223.4,587.5L1221.6,587.2L1219.8,586.9L1218.0,586.6L1216.2,586.3L1214.4,586.0L1212.5,585.7L1210.7,585.4L1208.8,585.2L1207.0,585.0L1205.1,584.7L1203.2,584.5L1201.3,584.3L1199.4,584.2L1197.5,584.0L1195.6,583.8L1193.7,583.7L1191.8,583.6L1189.9,583.4L1188.0,583.3L1186.0,583.2L1184.1,583.2L1182.2,583.1L1180.2,583.0L1178.3,583.0L1176.3,583.0L1174.4,583.0L1172.5,583.0L1170.5,583.0L1168.6,583.0L1166.6,583.0L1164.7,583.1L1162.7,583.2L1160.8,583.2L1158.9,583.3L1156.9,583.4L1155.0,583.5L1153.1,583.7L1151.1,583.8L1149.2,584.0L1147.3,584.2L1145.4,584.3L1143.5,584.5L1141.6,584.7L1139.7,585.0L1137.8,585.2L1136.0,585.4L1134.1,585.7L1132.2,586.0L1130.4,586.3L1128.6,586.6L1126.7,586.9L1124.9,587.2L1123.1,587.5L1121.3,587.9L1119.5,588.2L1117.7,588.6L1116.0,589.0L1114.2,589.4L1112.5,589.8L1110.8,590.2L1109.1,590.7L1107.4,591.1L1105.7,591.6L1104.1,592.0L1102.4,592.5L1100.8,593.0L1099.2,593.5L1097.6,594.0L1096.0,594.5L1094.4,595.1L1092.9,595.6L1091.4,596.2L1089.9,596.8L1088.4,597.3L1087.0,597.9L1085.5,598.5L1084.1,599.2L1082.7,599.8L1081.3,600.4L1080.0,601.1L1078.7,601.7L1077.4,602.4L1076.1,603.0L1074.8,603.7L1073.6,604.4L1072.4,605.1L1071.2,605.8L1070.1,606.5L1068.9,607.3L1067.8,608.0L1066.8,608.8L1065.7,609.5L1064.7,610.3L1063.7,611.0L1062.8,611.8L1061.8,612.6L1060.9,613.4L1060.1,614.2L1059.2,615.0L1058.4,615.8L1057.6,616.6L1056.9,617.5L1056.2,618.3L1055.5,619.1L1054.8,620.0L1054.2,620.8L1053.6,621.7L1053.0,622.5L1052.5,623.4L1052.0,624.3L1051.5,625.2L1051.1,626.0L1050.7,626.9L1050.3,627.8L1050.0,628.7L1049.7,629.6L1049.4,630.5L1049.2,631.4L1049.0,632.3L1048.9,633.2L1048.8,634.1L1048.7,635.0L1048.7,635.9L1048.7,636.9L1048.7,637.8L1048.8,638.7L1048.9,639.6L1049.1,640.5L1049.3,641.4L1049.5,642.4L1049.8,643.3L1050.1,644.2L1050.4,645.1L1050.8,646.0L1051.2,646.9L1051.7,647.9L1052.2,648.8L1052.8,649.7L1053.4,650.6L1054.0,651.5L1054.7,652.4L1055.4,653.3L1056.1,654.1L1056.9,655.0L1057.7,655.9L1058.6,656.8L1059.5,657.6L1060.4,658.5L1061.4,659.3L1062.4,660.2L1063.5,661.0L1064.6,661.9L1065.7,662.7L1066.8,663.5L1068.0,664.3L1069.3,665.1L1070.6,665.9L1071.9,666.7L1073.2,667.5L1074.6,668.2L1076.0,669.0L1077.5,669.7L1079.0,670.5L1080.5,671.2L1082.1,671.9L1083.7,672.6L1085.3,673.3L1086.9,674.0L1088.6,674.6L1090.4,675.3L1092.1,675.9L1093.9,676.5L1095.7,677.1L1097.6,677.7L1099.4,678.3L1101.3,678.9L1103.3,679.4L1105.2,679.9L1107.2,680.5L1109.2,681.0L1111.3,681.4L1113.3,681.9L1115.4,682.4L1117.5,682.8L1119.7,683.2L1121.8,683.6L1124.0,684.0L1126.2,684.3L1128.4,684.7L1130.6,685.0L1132.8,685.3L1135.1,685.6L1137.4,685.9L1139.6,686.1L1141.9,686.4L1144.3,686.6L1146.6,686.8L1148.9,687.0L1151.2,687.1L1153.6,687.3L1156.0,687.4L1158.3,687.5L1160.7,687.6L1163.1,687.6L1165.4,687.7L1167.8,687.7L1170.2,687.7L1172.6,687.7L1174.9,687.6L1177.3,687.6L1179.7,687.5L1182.1,687.4L1184.4,687.3L1186.8,687.1L1189.2,687.0L1191.5,686.8L1193.8,686.6L1196.2,686.4L1198.5,686.2L1200.8,685.9L1203.1,685.6L1205.4,685.3L1207.6,685.0L1209.9,684.7L1212.1,684.4L1214.3,684.0L1216.6,683.6L1218.7,683.2L1220.9,682.8L1223.0,682.4L1225.2,681.9L1227.3,681.5L1229.3,681.0L1231.4,680.5L1233.4,680.0L1235.4,679.4L1237.4,678.9L1239.4,678.3L1241.3,677.7L1243.2,677.2L1245.1,676.5L1246.9,675.9L1248.7,675.3L1250.5,674.6L1252.3,674.0L1254.0,673.3L1255.7,672.6ZM1254.2,671.9L1252.5,672.5L1250.8,673.2L1249.1,673.8L1247.3,674.5L1245.5,675.1L1243.7,675.7L1241.8,676.3L1240.0,676.8L1238.1,677.4L1236.1,677.9L1234.2,678.5L1232.2,679.0L1230.2,679.5L1228.2,680.0L1226.1,680.4L1224.1,680.9L1222.0,681.3L1219.9,681.7L1217.8,682.1L1215.6,682.5L1213.5,682.9L1211.3,683.2L1209.1,683.6L1206.9,683.9L1204.7,684.2L1202.4,684.5L1200.2,684.7L1197.9,685.0L1195.6,685.2L1193.4,685.4L1191.1,685.6L1188.8,685.7L1186.5,685.9L1184.2,686.0L1181.8,686.1L1179.5,686.2L1177.2,686.3L1174.9,686.4L1172.5,686.4L1170.2,686.4L1167.9,686.4L1165.6,686.4L1163.2,686.4L1160.9,686.3L1158.6,686.2L1156.3,686.1L1154.0,686.0L1151.7,685.9L1149.4,685.7L1147.1,685.6L1144.8,685.4L1142.6,685.2L1140.3,685.0L1138.1,684.7L1135.9,684.5L1133.6,684.2L1131.4,683.9L1129.3,683.6L1127.1,683.2L1124.9,682.9L1122.8,682.5L1120.7,682.1L1118.6,681.7L1116.5,681.3L1114.5,680.9L1112.5,680.4L1110.5,680.0L1108.5,679.5L1106.5,679.0L1104.6,678.5L1102.7,677.9L1100.8,677.4L1098.9,676.8L1097.1,676.3L1095.3,675.7L1093.5,675.1L1091.8,674.5L1090.1,673.8L1088.4,673.2L1086.8,672.5L1085.1,671.9L1083.6,671.2L1082.0,670.5L1080.5,669.8L1079.0,669.1L1077.5,668.4L1076.1,667.6L1074.7,666.9L1073.4,666.1L1072.1,665.4L1070.8,664.6L1069.6,663.8L1068.4,663.0L1067.2,662.2L1066.1,661.4L1065.0,660.6L1063.9,659.8L1062.9,658.9L1061.9,658.1L1061.0,657.3L1060.1,656.4L1059.3,655.5L1058.4,654.7L1057.7,653.8L1056.9,652.9L1056.2,652.1L1055.6,651.2L1054.9,650.3L1054.4,649.4L1053.8,648.5L1053.3,647.6L1052.9,646.7L1052.4,645.8L1052.0,644.9L1051.7,644.0L1051.4,643.1L1051.1,642.2L1050.9,641.3L1050.7,640.4L1050.5,639.5L1050.4,638.6L1050.3,637.7L1050.3,636.8L1050.3,635.9L1050.3,635.0L1050.4,634.1L1050.5,633.2L1050.6,632.3L1050.8,631.4L1051.0,630.5L1051.3,629.6L1051.5,628.7L1051.9,627.8L1052.2,627.0L1052.6,626.1L1053.0,625.2L1053.5,624.3L1054.0,623.5L1054.5,622.6L1055.1,621.8L1055.7,620.9L1056.3,620.1L1057.0,619.3L1057.7,618.4L1058.4,617.6L1059.2,616.8L1060.0,616.0L1060.8,615.2L1061.7,614.4L1062.5,613.6L1063.5,612.9L1064.4,612.1L1065.4,611.3L1066.4,610.6L1067.4,609.8L1068.5,609.1L1069.5,608.4L1070.7,607.7L1071.8,606.9L1073.0,606.2L1074.1,605.6L1075.3,604.9L1076.6,604.2L1077.8,603.5L1079.1,602.9L1080.4,602.2L1081.7,601.6L1083.1,601.0L1084.4,600.4L1085.8,599.8L1087.2,599.2L1088.7,598.6L1090.1,598.0L1091.6,597.5L1093.1,596.9L1094.6,596.4L1096.1,595.8L1097.6,595.3L1099.2,594.8L1100.8,594.3L1102.4,593.8L1104.0,593.4L1105.6,592.9L1107.2,592.4L1108.9,592.0L1110.5,591.6L1112.2,591.2L1113.9,590.8L1115.6,590.4L1117.3,590.0L1119.0,589.6L1120.8,589.3L1122.5,588.9L1124.3,588.6L1126.1,588.3L1127.8,587.9L1129.6,587.7L1131.4,587.4L1133.2,587.1L1135.0,586.8L1136.9,586.6L1138.7,586.3L1140.5,586.1L1142.4,585.9L1144.2,585.7L1146.1,585.5L1147.9,585.3L1149.8,585.2L1151.7,585.0L1153.6,584.9L1155.4,584.8L1157.3,584.7L1159.2,584.6L1161.1,584.5L1163.0,584.4L1164.9,584.3L1166.8,584.3L1168.6,584.2L1170.5,584.2L1172.4,584.2L1174.3,584.2L1176.2,584.2L1178.1,584.2L1180.0,584.3L1181.9,584.3L1183.8,584.4L1185.6,584.5L1187.5,584.6L1189.4,584.7L1191.3,584.8L1193.1,584.9L1195.0,585.0L1196.9,585.2L1198.7,585.3L1200.6,585.5L1202.4,585.7L1204.2,585.9L1206.1,586.1L1207.9,586.3L1209.7,586.6L1211.5,586.8L1213.3,587.1L1215.1,587.4L1216.8,587.6L1218.6,587.9L1220.4,588.2L1222.1,588.6L1223.8,588.9L1225.6,589.2L1227.3,589.6L1229.0,590.0L1230.7,590.4L1232.3,590.7L1234.0,591.2L1235.6,591.6L1237.2,592.0L1238.9,592.4L1240.5,592.9L1242.0,593.3L1243.6,593.8L1245.2,594.3L1246.7,594.8L1248.2,595.3L1249.7,595.8L1251.2,596.4L1252.6,596.9L1254.1,597.4L1255.5,598.0L1256.9,598.6L1258.3,599.2L1259.6,599.8L1261.0,600.4L1262.3,601.0L1263.6,601.6L1264.9,602.2L1266.1,602.9L1267.3,603.5L1268.5,604.2L1269.7,604.9L1270.9,605.5L1272.0,606.2L1273.1,606.9L1274.2,607.7L1275.2,608.4L1276.2,609.1L1277.2,609.8L1278.2,610.6L1279.1,611.3L1280.0,612.1L1280.9,612.9L1281.8,613.6L1282.6,614.4L1283.4,615.2L1284.1,616.0L1284.9,616.8L1285.6,617.6L1286.2,618.4L1286.9,619.3L1287.4,620.1L1288.0,620.9L1288.5,621.8L1289.0,622.6L1289.5,623.5L1289.9,624.4L1290.3,625.2L1290.6,626.1L1290.9,627.0L1291.2,627.8L1291.5,628.7L1291.7,629.6L1291.9,630.5L1292.0,631.4L1292.1,632.3L1292.2,633.2L1292.2,634.1L1292.2,635.0L1292.1,635.9L1292.1,636.8L1291.9,637.7L1291.8,638.6L1291.6,639.5L1291.3,640.4L1291.1,641.3L1290.8,642.2L1290.4,643.1L1290.0,644.0L1289.6,644.9L1289.1,645.8L1288.6,646.7L1288.1,647.6L1287.5,648.5L1286.9,649.4L1286.2,650.3L1285.5,651.2L1284.8,652.1L1284.0,652.9L1283.2,653.8L1282.4,654.7L1281.5,655.6L1280.6,656.4L1279.6,657.3L1278.6,658.1L1277.5,659.0L1276.4,659.8L1275.3,660.6L1274.1,661.4L1272.9,662.2L1271.7,663.0L1270.4,663.8L1269.1,664.6L1267.8,665.4L1266.4,666.1L1265.0,666.9L1263.6,667.6L1262.1,668.4L1260.6,669.1L1259.0,669.8L1257.4,670.5L1255.8,671.2ZM1305.4,695.4L1307.8,694.2L1310.2,693.0L1312.5,691.9L1314.8,690.7L1317.0,689.4L1319.1,688.2L1321.2,687.0L1323.2,685.7L1325.2,684.4L1327.1,683.1L1328.9,681.9L1330.7,680.5L1332.5,679.2L1334.1,677.9L1335.7,676.6L1337.3,675.2L1338.7,673.9L1340.2,672.5L1341.5,671.1L1342.8,669.8L1344.0,668.4L1345.2,667.0L1346.3,665.6L1347.3,664.2L1348.3,662.8L1349.2,661.4L1350.1,660.0L1350.9,658.6L1351.6,657.2L1352.3,655.8L1352.9,654.4L1353.4,653.0L1353.9,651.6L1354.3,650.1L1354.7,648.7L1355.0,647.3L1355.2,645.9L1355.4,644.5L1355.5,643.1L1355.6,641.7L1355.6,640.3L1355.6,638.9L1355.5,637.6L1355.3,636.2L1355.1,634.8L1354.8,633.4L1354.5,632.1L1354.1,630.7L1353.7,629.4L1353.2,628.0L1352.7,626.7L1352.1,625.4L1351.4,624.1L1350.8,622.8L1350.0,621.5L1349.2,620.2L1348.4,618.9L1347.5,617.6L1346.6,616.4L1345.6,615.1L1344.6,613.9L1343.5,612.7L1342.4,611.4L1341.3,610.2L1340.1,609.0L1338.8,607.9L1337.6,606.7L1336.2,605.5L1334.9,604.4L1333.5,603.3L1332.0,602.1L1330.6,601.0L1329.0,599.9L1327.5,598.9L1325.9,597.8L1324.2,596.7L1322.6,595.7L1320.9,594.7L1319.1,593.7L1317.4,592.7L1315.5,591.7L1313.7,590.7L1311.8,589.8L1309.9,588.8L1308.0,587.9L1306.0,587.0L1304.0,586.1L1302.0,585.2L1299.9,584.4L1297.8,583.5L1295.7,582.7L1293.6,581.9L1291.4,581.1L1289.2,580.3L1287.0,579.5L1284.7,578.8L1282.5,578.0L1280.2,577.3L1277.9,576.6L1275.5,575.9L1273.2,575.3L1270.8,574.6L1268.4,574.0L1266.0,573.4L1263.5,572.8L1261.1,572.2L1258.6,571.6L1256.1,571.1L1253.6,570.6L1251.0,570.0L1248.5,569.5L1245.9,569.1L1243.4,568.6L1240.8,568.2L1238.2,567.7L1235.5,567.3L1232.9,566.9L1230.3,566.6L1227.6,566.2L1225.0,565.9L1222.3,565.5L1219.6,565.2L1216.9,565.0L1214.2,564.7L1211.5,564.4L1208.8,564.2L1206.0,564.0L1203.3,563.8L1200.5,563.6L1197.8,563.5L1195.0,563.3L1192.3,563.2L1189.5,563.1L1186.8,563.0L1184.0,562.9L1181.2,562.9L1178.4,562.8L1175.7,562.8L1172.9,562.8L1170.1,562.8L1167.3,562.9L1164.6,562.9L1161.8,563.0L1159.0,563.1L1156.2,563.2L1153.5,563.3L1150.7,563.4L1147.9,563.6L1145.2,563.8L1142.4,564.0L1139.7,564.2L1136.9,564.4L1134.2,564.7L1131.5,564.9L1128.8,565.2L1126.1,565.5L1123.3,565.9L1120.7,566.2L1118.0,566.6L1115.3,566.9L1112.6,567.3L1110.0,567.7L1107.3,568.2L1104.7,568.6L1102.1,569.1L1099.5,569.5L1096.9,570.0L1094.3,570.5L1091.8,571.1L1089.2,571.6L1086.7,572.2L1084.2,572.8L1081.7,573.4L1079.2,574.0L1076.8,574.6L1074.3,575.3L1071.9,575.9L1069.5,576.6L1067.1,577.3L1064.8,578.0L1062.5,578.8L1060.2,579.5L1057.9,580.3L1055.6,581.1L1053.4,581.9L1051.2,582.7L1049.0,583.5L1046.8,584.3L1044.7,585.2L1042.6,586.1L1040.5,587.0L1038.5,587.9L1036.4,588.8L1034.5,589.7L1032.5,590.7L1030.6,591.7L1028.7,592.6L1026.8,593.6L1025.0,594.7L1023.2,595.7L1021.4,596.7L1019.7,597.8L1018.0,598.8L1016.4,599.9L1014.8,601.0L1013.2,602.1L1011.7,603.2L1010.2,604.4L1008.7,605.5L1007.3,606.7L1005.9,607.9L1004.6,609.0L1003.3,610.2L1002.0,611.4L1000.8,612.7L999.7,613.9L998.6,615.1L997.5,616.4L996.5,617.6L995.5,618.9L994.5,620.2L993.6,621.5L992.8,622.8L992.0,624.1L991.2,625.4L990.5,626.7L989.9,628.0L989.3,629.4L988.7,630.7L988.3,632.1L987.8,633.4L987.4,634.8L987.1,636.2L986.8,637.5L986.6,638.9L986.4,640.3L986.3,641.7L986.3,643.1L986.3,644.5L986.4,645.9L986.5,647.3L986.7,648.7L986.9,650.1L987.2,651.5L987.6,652.9L988.0,654.4L988.5,655.8L989.0,657.2L989.6,658.6L990.3,660.0L991.1,661.4L991.8,662.8L992.7,664.2L993.6,665.6L994.6,667.0L995.7,668.4L996.8,669.7L997.9,671.1L999.2,672.5L1000.5,673.9L1001.8,675.2L1003.3,676.5L1004.8,677.9L1006.3,679.2L1007.9,680.5L1009.6,681.8L1011.3,683.1L1013.1,684.4L1015.0,685.7L1016.9,686.9L1018.9,688.2L1020.9,689.4L1023.0,690.6L1025.2,691.8L1027.4,693.0L1029.7,694.2L1032.0,695.3L1034.4,696.5L1036.9,697.6L1039.4,698.7L1042.0,699.8L1044.6,700.8L1047.2,701.8L1050.0,702.9L1052.7,703.9L1055.6,704.8L1058.5,705.8L1061.4,706.7L1064.4,707.6L1067.4,708.5L1070.5,709.3L1073.6,710.1L1076.7,710.9L1079.9,711.7L1083.2,712.5L1086.5,713.2L1089.8,713.9L1093.1,714.5L1096.5,715.2L1100.0,715.8L1103.4,716.3L1106.9,716.9L1110.4,717.4L1114.0,717.9L1117.6,718.3L1121.2,718.8L1124.8,719.2L1128.4,719.5L1132.1,719.8L1135.8,720.1L1139.5,720.4L1143.2,720.6L1146.9,720.8L1150.7,721.0L1154.4,721.1L1158.2,721.2L1161.9,721.3L1165.7,721.3L1169.5,721.3L1173.2,721.3L1177.0,721.2L1180.8,721.1L1184.5,721.0L1188.3,720.8L1192.0,720.6L1195.8,720.4L1199.5,720.1L1203.2,719.9L1206.9,719.5L1210.6,719.2L1214.2,718.8L1217.9,718.4L1221.5,717.9L1225.1,717.4L1228.6,716.9L1232.2,716.4L1235.7,715.8L1239.2,715.2L1242.6,714.6L1246.0,713.9L1249.4,713.2L1252.7,712.5L1256.1,711.7L1259.3,711.0L1262.5,710.2L1265.7,709.4L1268.9,708.5L1272.0,707.6L1275.0,706.7L1278.0,705.8L1281.0,704.9L1283.9,703.9L1286.8,702.9L1289.6,701.9L1292.4,700.8L1295.1,699.8L1297.7,698.7L1300.3,697.6L1302.9,696.5ZM1301.4,695.8L1298.9,696.9L1296.3,697.9L1293.7,699.0L1291.0,700.0L1288.2,701.1L1285.4,702.0L1282.6,703.0L1279.7,704.0L1276.8,704.9L1273.8,705.8L1270.8,706.7L1267.7,707.5L1264.6,708.4L1261.4,709.2L1258.2,710.0L1255.0,710.7L1251.7,711.4L1248.4,712.1L1245.1,712.8L1241.7,713.5L1238.3,714.1L1234.8,714.7L1231.4,715.2L1227.9,715.8L1224.3,716.3L1220.8,716.7L1217.2,717.2L1213.6,717.6L1210.0,718.0L1206.4,718.3L1202.8,718.6L1199.1,718.9L1195.4,719.2L1191.7,719.4L1188.0,719.6L1184.3,719.8L1180.6,719.9L1176.9,720.0L1173.2,720.0L1169.5,720.1L1165.8,720.1L1162.1,720.0L1158.3,720.0L1154.6,719.9L1150.9,719.8L1147.3,719.6L1143.6,719.4L1139.9,719.2L1136.3,718.9L1132.6,718.6L1129.0,718.3L1125.4,718.0L1121.8,717.6L1118.3,717.2L1114.7,716.7L1111.2,716.3L1107.8,715.8L1104.3,715.2L1100.9,714.7L1097.5,714.1L1094.1,713.5L1090.8,712.8L1087.5,712.1L1084.3,711.4L1081.1,710.7L1077.9,709.9L1074.8,709.2L1071.7,708.4L1068.6,707.5L1065.6,706.7L1062.7,705.8L1059.8,704.9L1056.9,704.0L1054.1,703.0L1051.4,702.0L1048.6,701.0L1046.0,700.0L1043.4,699.0L1040.8,697.9L1038.3,696.9L1035.9,695.8L1033.5,694.6L1031.2,693.5L1028.9,692.4L1026.7,691.2L1024.5,690.0L1022.4,688.8L1020.4,687.6L1018.4,686.4L1016.5,685.1L1014.7,683.9L1012.9,682.6L1011.1,681.3L1009.5,680.0L1007.9,678.7L1006.3,677.4L1004.8,676.1L1003.4,674.8L1002.1,673.4L1000.8,672.1L999.6,670.7L998.4,669.4L997.3,668.0L996.2,666.6L995.3,665.3L994.4,663.9L993.5,662.5L992.7,661.1L992.0,659.7L991.3,658.3L990.7,656.9L990.2,655.5L989.7,654.1L989.2,652.7L988.9,651.3L988.6,649.9L988.3,648.5L988.1,647.2L988.0,645.8L987.9,644.4L987.9,643.0L988.0,641.6L988.1,640.2L988.2,638.8L988.4,637.5L988.7,636.1L989.0,634.8L989.4,633.4L989.8,632.0L990.3,630.7L990.9,629.4L991.4,628.0L992.1,626.7L992.8,625.4L993.5,624.1L994.3,622.8L995.1,621.5L996.0,620.3L997.0,619.0L998.0,617.7L999.0,616.5L1000.1,615.3L1001.2,614.0L1002.4,612.8L1003.7,611.6L1004.9,610.4L1006.2,609.2L1007.6,608.1L1009.0,606.9L1010.4,605.8L1011.9,604.7L1013.4,603.5L1014.9,602.4L1016.5,601.3L1018.1,600.3L1019.8,599.2L1021.5,598.2L1023.2,597.1L1025.0,596.1L1026.8,595.1L1028.6,594.1L1030.5,593.1L1032.4,592.2L1034.3,591.2L1036.3,590.3L1038.2,589.4L1040.3,588.5L1042.3,587.6L1044.4,586.7L1046.5,585.8L1048.6,585.0L1050.7,584.2L1052.9,583.4L1055.1,582.6L1057.3,581.8L1059.6,581.0L1061.8,580.3L1064.1,579.5L1066.4,578.8L1068.8,578.1L1071.1,577.5L1073.5,576.8L1075.9,576.1L1078.3,575.5L1080.7,574.9L1083.2,574.3L1085.6,573.7L1088.1,573.2L1090.6,572.6L1093.1,572.1L1095.6,571.6L1098.2,571.1L1100.7,570.6L1103.3,570.1L1105.9,569.7L1108.5,569.2L1111.1,568.8L1113.7,568.4L1116.3,568.0L1118.9,567.7L1121.6,567.3L1124.2,567.0L1126.9,566.7L1129.5,566.4L1132.2,566.1L1134.9,565.9L1137.6,565.6L1140.3,565.4L1143.0,565.2L1145.7,565.0L1148.4,564.8L1151.1,564.7L1153.8,564.5L1156.5,564.4L1159.2,564.3L1162.0,564.2L1164.7,564.2L1167.4,564.1L1170.1,564.1L1172.9,564.1L1175.6,564.1L1178.3,564.1L1181.0,564.1L1183.8,564.2L1186.5,564.2L1189.2,564.3L1191.9,564.4L1194.6,564.5L1197.3,564.7L1200.0,564.8L1202.7,565.0L1205.4,565.2L1208.1,565.4L1210.7,565.6L1213.4,565.9L1216.1,566.1L1218.7,566.4L1221.4,566.7L1224.0,567.0L1226.6,567.3L1229.2,567.7L1231.8,568.0L1234.4,568.4L1237.0,568.8L1239.6,569.2L1242.1,569.7L1244.7,570.1L1247.2,570.6L1249.7,571.0L1252.2,571.5L1254.7,572.1L1257.2,572.6L1259.6,573.1L1262.0,573.7L1264.4,574.3L1266.8,574.9L1269.2,575.5L1271.6,576.1L1273.9,576.8L1276.2,577.4L1278.5,578.1L1280.8,578.8L1283.1,579.5L1285.3,580.3L1287.5,581.0L1289.7,581.8L1291.8,582.6L1294.0,583.4L1296.1,584.2L1298.2,585.0L1300.2,585.8L1302.2,586.7L1304.2,587.6L1306.2,588.4L1308.1,589.3L1310.0,590.3L1311.9,591.2L1313.8,592.2L1315.6,593.1L1317.4,594.1L1319.1,595.1L1320.8,596.1L1322.5,597.1L1324.1,598.1L1325.8,599.2L1327.3,600.3L1328.9,601.3L1330.4,602.4L1331.8,603.5L1333.2,604.6L1334.6,605.8L1335.9,606.9L1337.2,608.1L1338.5,609.2L1339.7,610.4L1340.9,611.6L1342.0,612.8L1343.1,614.0L1344.1,615.3L1345.1,616.5L1346.0,617.7L1346.9,619.0L1347.7,620.3L1348.5,621.5L1349.2,622.8L1349.9,624.1L1350.5,625.4L1351.1,626.7L1351.6,628.1L1352.1,629.4L1352.5,630.7L1352.9,632.1L1353.2,633.4L1353.5,634.8L1353.7,636.1L1353.9,637.5L1354.0,638.9L1354.0,640.2L1354.0,641.6L1353.9,643.0L1353.8,644.4L1353.6,645.8L1353.3,647.2L1353.0,648.6L1352.7,650.0L1352.3,651.4L1351.8,652.8L1351.2,654.2L1350.6,655.6L1350.0,656.9L1349.2,658.3L1348.4,659.7L1347.6,661.1L1346.7,662.5L1345.7,663.9L1344.7,665.3L1343.6,666.7L1342.4,668.0L1341.2,669.4L1339.9,670.8L1338.6,672.1L1337.2,673.5L1335.7,674.8L1334.2,676.1L1332.6,677.5L1330.9,678.8L1329.2,680.1L1327.4,681.4L1325.6,682.6L1323.7,683.9L1321.7,685.2L1319.7,686.4L1317.6,687.6L1315.5,688.8L1313.3,690.0L1311.0,691.2L1308.7,692.4L1306.3,693.5L1303.9,694.7ZM1357.8,720.9L1361.0,719.3L1364.2,717.6L1367.2,715.9L1370.2,714.1L1373.1,712.4L1375.9,710.6L1378.7,708.8L1381.3,707.0L1383.8,705.2L1386.3,703.3L1388.7,701.5L1390.9,699.6L1393.1,697.8L1395.2,695.9L1397.2,694.0L1399.1,692.1L1400.9,690.2L1402.6,688.2L1404.3,686.3L1405.8,684.4L1407.3,682.4L1408.7,680.5L1409.9,678.6L1411.1,676.6L1412.2,674.7L1413.2,672.7L1414.2,670.8L1415.0,668.8L1415.8,666.9L1416.4,664.9L1417.0,663.0L1417.5,661.0L1418.0,659.1L1418.3,657.2L1418.6,655.2L1418.7,653.3L1418.8,651.4L1418.9,649.5L1418.8,647.6L1418.7,645.7L1418.4,643.8L1418.2,642.0L1417.8,640.1L1417.4,638.2L1416.8,636.4L1416.3,634.6L1415.6,632.8L1414.9,631.0L1414.1,629.2L1413.2,627.4L1412.3,625.6L1411.3,623.9L1410.3,622.1L1409.1,620.4L1408.0,618.7L1406.7,617.0L1405.4,615.3L1404.1,613.6L1402.7,612.0L1401.2,610.4L1399.7,608.7L1398.1,607.1L1396.5,605.6L1394.8,604.0L1393.0,602.5L1391.2,600.9L1389.4,599.4L1387.5,597.9L1385.5,596.4L1383.5,595.0L1381.5,593.5L1379.4,592.1L1377.3,590.7L1375.1,589.3L1372.9,588.0L1370.6,586.6L1368.3,585.3L1365.9,584.0L1363.5,582.7L1361.1,581.5L1358.6,580.2L1356.1,579.0L1353.5,577.8L1351.0,576.6L1348.3,575.4L1345.7,574.3L1343.0,573.2L1340.3,572.1L1337.5,571.0L1334.7,569.9L1331.9,568.9L1329.0,567.9L1326.2,566.9L1323.3,565.9L1320.3,565.0L1317.4,564.0L1314.4,563.1L1311.4,562.2L1308.3,561.3L1305.2,560.5L1302.2,559.7L1299.0,558.9L1295.9,558.1L1292.7,557.3L1289.6,556.6L1286.4,555.9L1283.1,555.2L1279.9,554.5L1276.6,553.8L1273.4,553.2L1270.1,552.6L1266.8,552.0L1263.4,551.4L1260.1,550.9L1256.7,550.4L1253.4,549.9L1250.0,549.4L1246.6,548.9L1243.2,548.5L1239.8,548.1L1236.3,547.7L1232.9,547.3L1229.4,547.0L1226.0,546.6L1222.5,546.3L1219.0,546.1L1215.5,545.8L1212.1,545.6L1208.5,545.3L1205.0,545.1L1201.5,545.0L1198.0,544.8L1194.5,544.7L1191.0,544.6L1187.4,544.5L1183.9,544.4L1180.4,544.4L1176.8,544.4L1173.3,544.4L1169.8,544.4L1166.2,544.4L1162.7,544.5L1159.1,544.6L1155.6,544.7L1152.1,544.8L1148.5,545.0L1145.0,545.1L1141.5,545.3L1138.0,545.6L1134.5,545.8L1130.9,546.1L1127.4,546.3L1123.9,546.6L1120.5,547.0L1117.0,547.3L1113.5,547.7L1110.0,548.1L1106.6,548.5L1103.1,548.9L1099.7,549.4L1096.3,549.9L1092.9,550.4L1089.5,550.9L1086.1,551.4L1082.7,552.0L1079.3,552.6L1076.0,553.2L1072.7,553.8L1069.4,554.5L1066.1,555.2L1062.8,555.9L1059.5,556.6L1056.3,557.3L1053.1,558.1L1049.9,558.9L1046.7,559.7L1043.5,560.5L1040.4,561.3L1037.3,562.2L1034.2,563.1L1031.1,564.0L1028.1,564.9L1025.1,565.9L1022.1,566.9L1019.1,567.9L1016.2,568.9L1013.3,569.9L1010.4,571.0L1007.5,572.1L1004.7,573.2L1001.9,574.3L999.2,575.4L996.5,576.6L993.8,577.8L991.1,579.0L988.5,580.2L985.9,581.4L983.4,582.7L980.9,584.0L978.4,585.3L976.0,586.6L973.6,588.0L971.3,589.3L969.0,590.7L966.7,592.1L964.5,593.5L962.3,595.0L960.2,596.4L958.2,597.9L956.1,599.4L954.2,600.9L952.2,602.4L950.4,604.0L948.5,605.6L946.8,607.1L945.1,608.7L943.4,610.4L941.8,612.0L940.2,613.6L938.8,615.3L937.3,617.0L936.0,618.7L934.6,620.4L933.4,622.1L932.2,623.8L931.0,625.6L930.0,627.4L929.0,629.1L928.0,630.9L927.1,632.7L926.3,634.6L925.6,636.4L924.9,638.2L924.3,640.1L923.8,641.9L923.4,643.8L923.0,645.7L922.7,647.6L922.5,649.5L922.3,651.4L922.3,653.3L922.3,655.2L922.4,657.1L922.6,659.1L922.8,661.0L923.2,662.9L923.6,664.9L924.1,666.8L924.7,668.8L925.4,670.7L926.1,672.7L927.0,674.6L927.9,676.6L928.9,678.5L930.0,680.5L931.2,682.4L932.5,684.3L933.9,686.3L935.4,688.2L937.0,690.1L938.6,692.0L940.4,693.9L942.2,695.8L944.1,697.7L946.2,699.6L948.3,701.5L950.5,703.3L952.8,705.1L955.1,707.0L957.6,708.8L960.2,710.6L962.9,712.3L965.6,714.1L968.4,715.8L971.4,717.5L974.4,719.2L977.5,720.9L980.7,722.5L984.0,724.1L987.3,725.7L990.8,727.3L994.3,728.9L997.9,730.4L1001.6,731.9L1005.4,733.3L1009.2,734.7L1013.2,736.1L1017.2,737.5L1021.3,738.8L1025.4,740.1L1029.6,741.4L1033.9,742.6L1038.3,743.8L1042.7,744.9L1047.2,746.0L1051.8,747.1L1056.4,748.1L1061.1,749.1L1065.8,750.1L1070.6,751.0L1075.5,751.8L1080.4,752.6L1085.3,753.4L1090.3,754.1L1095.3,754.8L1100.4,755.4L1105.5,756.0L1110.6,756.6L1115.8,757.0L1121.0,757.5L1126.2,757.9L1131.5,758.2L1136.7,758.5L1142.0,758.8L1147.3,759.0L1152.6,759.1L1158.0,759.2L1163.3,759.3L1168.6,759.3L1174.0,759.2L1179.3,759.1L1184.6,759.0L1190.0,758.8L1195.3,758.5L1200.6,758.2L1205.8,757.9L1211.1,757.5L1216.3,757.1L1221.6,756.6L1226.7,756.0L1231.9,755.5L1237.0,754.8L1242.1,754.1L1247.2,753.4L1252.2,752.7L1257.1,751.8L1262.0,751.0L1266.9,750.1L1271.7,749.1L1276.5,748.2L1281.2,747.1L1285.9,746.1L1290.5,745.0L1295.0,743.8L1299.5,742.6L1303.9,741.4L1308.2,740.2L1312.5,738.9L1316.7,737.5L1320.8,736.2L1324.8,734.8L1328.8,733.4L1332.7,731.9L1336.5,730.4L1340.3,728.9L1343.9,727.4L1347.5,725.8L1351.0,724.2L1354.4,722.6ZM1353.0,721.9L1349.6,723.5L1346.1,725.0L1342.6,726.6L1338.9,728.1L1335.2,729.6L1331.4,731.1L1327.5,732.5L1323.6,733.9L1319.5,735.3L1315.4,736.6L1311.3,737.9L1307.0,739.2L1302.7,740.4L1298.3,741.6L1293.9,742.8L1289.4,743.9L1284.8,745.0L1280.2,746.1L1275.5,747.1L1270.8,748.1L1266.0,749.0L1261.2,749.9L1256.3,750.7L1251.4,751.5L1246.4,752.3L1241.4,753.0L1236.4,753.6L1231.3,754.3L1226.2,754.8L1221.1,755.4L1215.9,755.8L1210.7,756.3L1205.5,756.7L1200.3,757.0L1195.0,757.3L1189.8,757.5L1184.5,757.7L1179.2,757.9L1174.0,758.0L1168.7,758.0L1163.4,758.0L1158.1,758.0L1152.8,757.9L1147.6,757.7L1142.3,757.5L1137.1,757.3L1131.9,757.0L1126.7,756.7L1121.5,756.3L1116.3,755.8L1111.2,755.4L1106.1,754.8L1101.1,754.2L1096.0,753.6L1091.0,753.0L1086.1,752.2L1081.2,751.5L1076.4,750.7L1071.5,749.9L1066.8,749.0L1062.1,748.0L1057.4,747.1L1052.9,746.1L1048.3,745.0L1043.9,743.9L1039.5,742.8L1035.1,741.6L1030.8,740.4L1026.6,739.2L1022.5,737.9L1018.5,736.6L1014.5,735.3L1010.6,733.9L1006.7,732.5L1003.0,731.0L999.3,729.6L995.7,728.1L992.2,726.6L988.7,725.0L985.4,723.4L982.1,721.8L979.0,720.2L975.9,718.5L972.9,716.9L970.0,715.2L967.2,713.4L964.4,711.7L961.8,709.9L959.2,708.2L956.8,706.4L954.4,704.6L952.1,702.8L949.9,700.9L947.8,699.1L945.8,697.2L943.9,695.4L942.0,693.5L940.3,691.6L938.7,689.7L937.1,687.8L935.6,685.9L934.3,684.0L933.0,682.0L931.8,680.1L930.7,678.2L929.6,676.2L928.7,674.3L927.8,672.4L927.1,670.4L926.4,668.5L925.8,666.6L925.3,664.6L924.9,662.7L924.5,660.8L924.3,658.9L924.1,657.0L924.0,655.0L924.0,653.1L924.0,651.2L924.2,649.3L924.4,647.5L924.7,645.6L925.0,643.7L925.5,641.9L926.0,640.0L926.6,638.2L927.2,636.3L927.9,634.5L928.7,632.7L929.6,630.9L930.5,629.1L931.5,627.4L932.6,625.6L933.7,623.9L934.9,622.2L936.2,620.4L937.5,618.7L938.9,617.1L940.3,615.4L941.8,613.7L943.4,612.1L945.0,610.5L946.7,608.9L948.4,607.3L950.2,605.7L952.1,604.2L954.0,602.7L955.9,601.1L957.9,599.7L959.9,598.2L962.0,596.7L964.1,595.3L966.3,593.9L968.5,592.5L970.8,591.1L973.1,589.7L975.5,588.4L977.8,587.0L980.3,585.7L982.7,584.4L985.2,583.2L987.8,581.9L990.4,580.7L993.0,579.5L995.6,578.3L998.3,577.2L1001.0,576.0L1003.8,574.9L1006.5,573.8L1009.3,572.7L1012.2,571.6L1015.1,570.6L1017.9,569.6L1020.9,568.6L1023.8,567.6L1026.8,566.7L1029.8,565.7L1032.8,564.8L1035.9,563.9L1038.9,563.0L1042.0,562.2L1045.1,561.4L1048.3,560.6L1051.4,559.8L1054.6,559.0L1057.8,558.3L1061.0,557.5L1064.2,556.8L1067.5,556.2L1070.7,555.5L1074.0,554.9L1077.3,554.2L1080.6,553.6L1083.9,553.1L1087.2,552.5L1090.6,552.0L1094.0,551.5L1097.3,551.0L1100.7,550.5L1104.1,550.1L1107.5,549.6L1110.9,549.2L1114.3,548.9L1117.7,548.5L1121.2,548.2L1124.6,547.8L1128.1,547.5L1131.5,547.3L1135.0,547.0L1138.5,546.8L1141.9,546.6L1145.4,546.4L1148.9,546.2L1152.4,546.1L1155.8,545.9L1159.3,545.8L1162.8,545.7L1166.3,545.7L1169.8,545.6L1173.3,545.6L1176.8,545.6L1180.2,545.6L1183.7,545.7L1187.2,545.7L1190.7,545.8L1194.2,545.9L1197.6,546.1L1201.1,546.2L1204.6,546.4L1208.0,546.6L1211.5,546.8L1214.9,547.0L1218.4,547.3L1221.8,547.5L1225.2,547.8L1228.6,548.2L1232.0,548.5L1235.4,548.9L1238.8,549.2L1242.2,549.6L1245.6,550.1L1248.9,550.5L1252.3,551.0L1255.6,551.5L1258.9,552.0L1262.2,552.5L1265.5,553.1L1268.8,553.6L1272.0,554.2L1275.3,554.8L1278.5,555.5L1281.7,556.1L1284.9,556.8L1288.1,557.5L1291.2,558.2L1294.3,559.0L1297.4,559.8L1300.5,560.5L1303.6,561.4L1306.6,562.2L1309.7,563.0L1312.7,563.9L1315.6,564.8L1318.6,565.7L1321.5,566.6L1324.4,567.6L1327.3,568.6L1330.1,569.6L1332.9,570.6L1335.7,571.6L1338.4,572.7L1341.2,573.8L1343.9,574.9L1346.5,576.0L1349.1,577.1L1351.7,578.3L1354.3,579.5L1356.8,580.7L1359.2,581.9L1361.7,583.2L1364.1,584.4L1366.4,585.7L1368.8,587.0L1371.0,588.4L1373.3,589.7L1375.5,591.1L1377.6,592.4L1379.7,593.8L1381.8,595.3L1383.8,596.7L1385.8,598.2L1387.7,599.6L1389.5,601.1L1391.3,602.7L1393.1,604.2L1394.8,605.7L1396.5,607.3L1398.1,608.9L1399.6,610.5L1401.1,612.1L1402.5,613.8L1403.9,615.4L1405.2,617.1L1406.5,618.8L1407.6,620.5L1408.7,622.2L1409.8,623.9L1410.8,625.6L1411.7,627.4L1412.5,629.2L1413.3,630.9L1414.0,632.7L1414.7,634.5L1415.2,636.4L1415.7,638.2L1416.2,640.0L1416.5,641.9L1416.8,643.7L1417.0,645.6L1417.1,647.5L1417.2,649.4L1417.2,651.3L1417.1,653.2L1416.9,655.1L1416.6,657.0L1416.3,658.9L1415.8,660.8L1415.3,662.8L1414.8,664.7L1414.1,666.6L1413.3,668.5L1412.5,670.5L1411.5,672.4L1410.5,674.4L1409.4,676.3L1408.2,678.2L1407.0,680.1L1405.6,682.1L1404.1,684.0L1402.6,685.9L1401.0,687.8L1399.3,689.7L1397.4,691.6L1395.5,693.5L1393.6,695.4L1391.5,697.3L1389.3,699.1L1387.0,701.0L1384.7,702.8L1382.3,704.6L1379.7,706.4L1377.1,708.2L1374.4,710.0L1371.6,711.7L1368.7,713.5L1365.8,715.2L1362.7,716.9L1359.6,718.6L1356.3,720.2ZM1415.2,748.9L1419.2,746.6L1423.1,744.3L1426.9,742.0L1430.6,739.6L1434.1,737.3L1437.5,734.9L1440.8,732.4L1444.0,730.0L1447.0,727.5L1450.0,725.1L1452.8,722.6L1455.4,720.1L1458.0,717.6L1460.4,715.1L1462.7,712.5L1464.9,710.0L1466.9,707.5L1468.9,704.9L1470.7,702.4L1472.4,699.8L1473.9,697.3L1475.4,694.7L1476.7,692.1L1477.9,689.6L1479.1,687.0L1480.0,684.5L1480.9,682.0L1481.7,679.4L1482.4,676.9L1482.9,674.4L1483.3,671.9L1483.7,669.4L1483.9,666.9L1484.0,664.4L1484.1,661.9L1484.0,659.5L1483.8,657.0L1483.5,654.6L1483.2,652.2L1482.7,649.8L1482.1,647.4L1481.5,645.0L1480.7,642.7L1479.9,640.3L1479.0,638.0L1478.0,635.7L1476.9,633.4L1475.7,631.2L1474.4,628.9L1473.1,626.7L1471.7,624.5L1470.2,622.3L1468.6,620.2L1467.0,618.0L1465.3,615.9L1463.5,613.8L1461.7,611.8L1459.8,609.7L1457.8,607.7L1455.7,605.7L1453.6,603.7L1451.4,601.8L1449.2,599.8L1446.9,597.9L1444.5,596.0L1442.1,594.2L1439.6,592.3L1437.1,590.5L1434.5,588.7L1431.9,587.0L1429.2,585.3L1426.4,583.5L1423.6,581.9L1420.8,580.2L1417.9,578.6L1415.0,577.0L1412.0,575.4L1409.0,573.8L1405.9,572.3L1402.8,570.8L1399.6,569.3L1396.4,567.8L1393.2,566.4L1389.9,565.0L1386.6,563.6L1383.2,562.3L1379.8,561.0L1376.4,559.7L1373.0,558.4L1369.5,557.1L1366.0,555.9L1362.4,554.7L1358.8,553.5L1355.2,552.4L1351.6,551.3L1347.9,550.2L1344.2,549.1L1340.5,548.1L1336.7,547.1L1333.0,546.1L1329.2,545.1L1325.4,544.2L1321.5,543.3L1317.7,542.4L1313.8,541.5L1309.9,540.7L1305.9,539.9L1302.0,539.1L1298.0,538.3L1294.1,537.6L1290.1,536.9L1286.1,536.2L1282.0,535.6L1278.0,534.9L1273.9,534.3L1269.9,533.8L1265.8,533.2L1261.7,532.7L1257.6,532.2L1253.4,531.7L1249.3,531.2L1245.2,530.8L1241.0,530.4L1236.8,530.0L1232.7,529.7L1228.5,529.4L1224.3,529.1L1220.1,528.8L1215.9,528.5L1211.7,528.3L1207.5,528.1L1203.3,527.9L1199.1,527.8L1194.8,527.7L1190.6,527.6L1186.4,527.5L1182.1,527.4L1177.9,527.4L1173.7,527.4L1169.4,527.4L1165.2,527.5L1160.9,527.6L1156.7,527.7L1152.5,527.8L1148.2,527.9L1144.0,528.1L1139.8,528.3L1135.5,528.5L1131.3,528.8L1127.1,529.1L1122.9,529.4L1118.7,529.7L1114.5,530.0L1110.3,530.4L1106.1,530.8L1101.9,531.2L1097.8,531.7L1093.6,532.2L1089.4,532.7L1085.3,533.2L1081.2,533.8L1077.1,534.3L1072.9,534.9L1068.8,535.6L1064.8,536.2L1060.7,536.9L1056.6,537.6L1052.6,538.3L1048.6,539.1L1044.6,539.9L1040.6,540.7L1036.6,541.5L1032.6,542.4L1028.7,543.3L1024.8,544.2L1020.9,545.1L1017.0,546.1L1013.2,547.1L1009.3,548.1L1005.5,549.1L1001.7,550.2L998.0,551.3L994.3,552.4L990.5,553.5L986.9,554.7L983.2,555.9L979.6,557.1L976.0,558.4L972.4,559.7L968.9,561.0L965.4,562.3L962.0,563.6L958.5,565.0L955.1,566.4L951.8,567.8L948.5,569.3L945.2,570.8L941.9,572.3L938.7,573.8L935.6,575.4L932.5,577.0L929.4,578.6L926.4,580.2L923.4,581.9L920.4,583.5L917.6,585.2L914.7,587.0L911.9,588.7L909.2,590.5L906.5,592.3L903.9,594.2L901.3,596.0L898.8,597.9L896.3,599.8L893.9,601.7L891.6,603.7L889.3,605.7L887.1,607.7L884.9,609.7L882.9,611.8L880.8,613.8L878.9,615.9L877.0,618.0L875.2,620.2L873.5,622.3L871.8,624.5L870.2,626.7L868.7,628.9L867.2,631.2L865.9,633.4L864.6,635.7L863.4,638.0L862.3,640.3L861.2,642.6L860.3,645.0L859.4,647.4L858.7,649.7L858.0,652.1L857.4,654.6L857.0,657.0L856.6,659.4L856.3,661.9L856.1,664.4L856.0,666.8L856.0,669.3L856.2,671.8L856.4,674.3L856.7,676.9L857.2,679.4L857.7,681.9L858.4,684.5L859.2,687.0L860.0,689.5L861.1,692.1L862.2,694.6L863.4,697.2L864.8,699.8L866.2,702.3L867.8,704.9L869.6,707.4L871.4,709.9L873.4,712.5L875.4,715.0L877.6,717.5L880.0,720.0L882.4,722.5L885.0,725.0L887.7,727.5L890.5,729.9L893.5,732.4L896.6,734.8L899.8,737.2L903.1,739.6L906.6,741.9L910.2,744.3L913.9,746.6L917.7,748.9L921.7,751.1L925.8,753.3L930.0,755.5L934.3,757.7L938.8,759.8L943.4,761.9L948.0,764.0L952.8,766.0L957.8,768.0L962.8,769.9L967.9,771.8L973.2,773.6L978.6,775.4L984.0,777.2L989.6,778.9L995.3,780.5L1001.0,782.1L1006.9,783.7L1012.9,785.2L1018.9,786.6L1025.0,788.0L1031.3,789.3L1037.6,790.6L1043.9,791.8L1050.4,793.0L1056.9,794.1L1063.5,795.1L1070.1,796.0L1076.9,796.9L1083.6,797.8L1090.4,798.5L1097.3,799.2L1104.2,799.9L1111.2,800.4L1118.2,800.9L1125.2,801.3L1132.2,801.7L1139.3,802.0L1146.4,802.2L1153.5,802.3L1160.6,802.4L1167.7,802.4L1174.8,802.3L1181.9,802.2L1189.0,802.0L1196.1,801.7L1203.2,801.4L1210.3,800.9L1217.3,800.5L1224.3,799.9L1231.3,799.3L1238.2,798.6L1245.1,797.8L1251.9,797.0L1258.7,796.1L1265.4,795.1L1272.1,794.1L1278.7,793.0L1285.3,791.9L1291.8,790.7L1298.2,789.4L1304.5,788.1L1310.8,786.7L1316.9,785.2L1323.0,783.8L1329.0,782.2L1334.9,780.6L1340.7,778.9L1346.5,777.2L1352.1,775.5L1357.6,773.7L1363.0,771.8L1368.3,770.0L1373.5,768.0L1378.6,766.0L1383.6,764.0L1388.4,762.0L1393.2,759.9L1397.8,757.8L1402.3,755.6L1406.7,753.4L1411.0,751.2ZM1409.5,750.4L1405.2,752.6L1400.9,754.8L1396.4,756.9L1391.8,759.0L1387.0,761.1L1382.2,763.2L1377.2,765.2L1372.2,767.1L1367.0,769.0L1361.7,770.9L1356.4,772.7L1350.9,774.5L1345.3,776.3L1339.6,777.9L1333.8,779.6L1328.0,781.2L1322.0,782.7L1315.9,784.2L1309.8,785.6L1303.6,787.0L1297.3,788.3L1290.9,789.6L1284.5,790.7L1278.0,791.9L1271.4,793.0L1264.8,794.0L1258.1,794.9L1251.3,795.8L1244.6,796.6L1237.7,797.4L1230.8,798.1L1223.9,798.7L1217.0,799.2L1210.0,799.7L1203.0,800.1L1196.0,800.5L1188.9,800.7L1181.9,801.0L1174.8,801.1L1167.7,801.2L1160.7,801.2L1153.6,801.1L1146.6,800.9L1139.5,800.7L1132.5,800.5L1125.5,800.1L1118.5,799.7L1111.6,799.2L1104.7,798.7L1097.8,798.0L1091.0,797.3L1084.2,796.6L1077.5,795.8L1070.9,794.9L1064.2,793.9L1057.7,792.9L1051.2,791.9L1044.8,790.7L1038.5,789.5L1032.2,788.3L1026.0,786.9L1019.9,785.6L1013.9,784.1L1008.0,782.7L1002.2,781.1L996.4,779.5L990.8,777.9L985.3,776.2L979.8,774.5L974.5,772.7L969.3,770.8L964.2,769.0L959.2,767.1L954.3,765.1L949.5,763.1L944.8,761.1L940.3,759.0L935.9,756.9L931.6,754.7L927.4,752.5L923.3,750.3L919.4,748.1L915.6,745.8L911.9,743.5L908.3,741.2L904.8,738.9L901.5,736.5L898.3,734.1L895.2,731.7L892.3,729.3L889.5,726.9L886.8,724.4L884.2,722.0L881.8,719.5L879.4,717.0L877.2,714.5L875.1,712.0L873.2,709.5L871.4,706.9L869.6,704.4L868.1,701.9L866.6,699.3L865.2,696.8L864.0,694.3L862.9,691.7L861.9,689.2L861.0,686.7L860.2,684.1L859.5,681.6L859.0,679.1L858.5,676.6L858.2,674.1L857.9,671.6L857.8,669.1L857.8,666.6L857.8,664.2L858.0,661.7L858.3,659.3L858.7,656.8L859.1,654.4L859.7,652.0L860.4,649.6L861.1,647.3L862.0,644.9L862.9,642.6L863.9,640.3L865.0,638.0L866.2,635.7L867.5,633.4L868.8,631.2L870.2,628.9L871.8,626.7L873.3,624.5L875.0,622.4L876.8,620.2L878.6,618.1L880.5,616.0L882.5,613.9L884.5,611.9L886.6,609.8L888.8,607.8L891.0,605.8L893.3,603.9L895.7,601.9L898.1,600.0L900.6,598.1L903.1,596.3L905.7,594.4L908.3,592.6L911.0,590.8L913.8,589.0L916.6,587.3L919.4,585.6L922.3,583.9L925.3,582.2L928.3,580.6L931.3,579.0L934.4,577.4L937.5,575.8L940.7,574.3L943.9,572.8L947.1,571.3L950.4,569.8L953.7,568.4L957.0,567.0L960.4,565.6L963.8,564.2L967.3,562.9L970.8,561.6L974.3,560.3L977.9,559.1L981.4,557.8L985.0,556.6L988.7,555.5L992.3,554.3L996.0,553.2L999.7,552.1L1003.5,551.0L1007.2,550.0L1011.0,548.9L1014.8,547.9L1018.6,547.0L1022.5,546.0L1026.4,545.1L1030.2,544.2L1034.1,543.3L1038.1,542.5L1042.0,541.7L1046.0,540.9L1049.9,540.1L1053.9,539.4L1057.9,538.7L1061.9,538.0L1066.0,537.3L1070.0,536.7L1074.1,536.0L1078.1,535.4L1082.2,534.9L1086.3,534.3L1090.4,533.8L1094.5,533.3L1098.6,532.9L1102.8,532.4L1106.9,532.0L1111.0,531.6L1115.2,531.2L1119.3,530.9L1123.5,530.6L1127.6,530.3L1131.8,530.0L1136.0,529.8L1140.2,529.5L1144.3,529.3L1148.5,529.2L1152.7,529.0L1156.9,528.9L1161.1,528.8L1165.3,528.7L1169.4,528.7L1173.6,528.7L1177.8,528.7L1182.0,528.7L1186.2,528.7L1190.4,528.8L1194.5,528.9L1198.7,529.0L1202.9,529.2L1207.1,529.3L1211.2,529.5L1215.4,529.8L1219.5,530.0L1223.7,530.3L1227.8,530.6L1231.9,530.9L1236.1,531.2L1240.2,531.6L1244.3,532.0L1248.4,532.4L1252.5,532.8L1256.6,533.3L1260.6,533.8L1264.7,534.3L1268.7,534.9L1272.8,535.4L1276.8,536.0L1280.8,536.6L1284.8,537.3L1288.7,537.9L1292.7,538.6L1296.6,539.4L1300.6,540.1L1304.5,540.9L1308.4,541.7L1312.3,542.5L1316.1,543.3L1319.9,544.2L1323.8,545.1L1327.5,546.0L1331.3,546.9L1335.1,547.9L1338.8,548.9L1342.5,549.9L1346.2,551.0L1349.8,552.1L1353.4,553.2L1357.0,554.3L1360.6,555.4L1364.1,556.6L1367.6,557.8L1371.1,559.0L1374.6,560.3L1378.0,561.6L1381.3,562.9L1384.7,564.2L1388.0,565.6L1391.3,567.0L1394.5,568.4L1397.7,569.8L1400.9,571.3L1404.0,572.7L1407.1,574.3L1410.1,575.8L1413.1,577.4L1416.0,579.0L1418.9,580.6L1421.8,582.2L1424.6,583.9L1427.3,585.6L1430.1,587.3L1432.7,589.0L1435.3,590.8L1437.9,592.6L1440.3,594.4L1442.8,596.3L1445.2,598.1L1447.5,600.0L1449.7,601.9L1451.9,603.9L1454.1,605.8L1456.1,607.8L1458.1,609.8L1460.1,611.9L1461.9,613.9L1463.7,616.0L1465.4,618.1L1467.1,620.2L1468.7,622.4L1470.1,624.5L1471.5,626.7L1472.9,628.9L1474.1,631.2L1475.3,633.4L1476.4,635.7L1477.4,638.0L1478.3,640.3L1479.1,642.6L1479.8,644.9L1480.5,647.3L1481.0,649.7L1481.5,652.1L1481.8,654.5L1482.1,656.9L1482.3,659.3L1482.3,661.7L1482.3,664.2L1482.2,666.7L1481.9,669.1L1481.6,671.6L1481.1,674.1L1480.6,676.6L1479.9,679.1L1479.2,681.7L1478.3,684.2L1477.3,686.7L1476.2,689.2L1474.9,691.8L1473.6,694.3L1472.2,696.9L1470.6,699.4L1468.9,701.9L1467.1,704.5L1465.2,707.0L1463.1,709.5L1460.9,712.0L1458.6,714.5L1456.2,717.0L1453.7,719.5L1451.0,722.0L1448.2,724.5L1445.3,726.9L1442.3,729.4L1439.2,731.8L1435.9,734.2L1432.5,736.6L1428.9,738.9L1425.3,741.3L1421.5,743.6L1417.6,745.9L1413.6,748.2ZM1478.3,779.7L1483.1,776.7L1487.7,773.7L1492.1,770.6L1496.4,767.5L1500.5,764.4L1504.5,761.2L1508.3,758.1L1511.9,754.9L1515.3,751.7L1518.6,748.5L1521.8,745.3L1524.7,742.1L1527.5,738.8L1530.2,735.6L1532.6,732.3L1535.0,729.1L1537.1,725.8L1539.1,722.6L1541.0,719.4L1542.7,716.1L1544.2,712.9L1545.6,709.6L1546.9,706.4L1548.0,703.2L1549.0,700.0L1549.8,696.8L1550.5,693.6L1551.0,690.5L1551.5,687.3L1551.7,684.2L1551.9,681.1L1551.9,678.0L1551.8,674.9L1551.6,671.8L1551.2,668.8L1550.8,665.8L1550.2,662.8L1549.5,659.8L1548.7,656.8L1547.7,653.9L1546.7,651.0L1545.6,648.1L1544.3,645.3L1543.0,642.4L1541.5,639.6L1540.0,636.9L1538.3,634.1L1536.6,631.4L1534.7,628.7L1532.8,626.1L1530.8,623.4L1528.7,620.8L1526.6,618.3L1524.3,615.7L1522.0,613.2L1519.6,610.7L1517.1,608.3L1514.6,605.9L1511.9,603.5L1509.2,601.1L1506.4,598.8L1503.6,596.5L1500.7,594.2L1497.7,592.0L1494.7,589.8L1491.6,587.6L1488.4,585.5L1485.2,583.4L1481.9,581.3L1478.6,579.3L1475.2,577.3L1471.8,575.3L1468.3,573.3L1464.8,571.4L1461.2,569.5L1457.5,567.7L1453.8,565.9L1450.1,564.1L1446.3,562.3L1442.5,560.6L1438.7,558.9L1434.8,557.2L1430.8,555.6L1426.9,554.0L1422.9,552.4L1418.8,550.9L1414.7,549.4L1410.6,547.9L1406.5,546.5L1402.3,545.1L1398.1,543.7L1393.8,542.3L1389.6,541.0L1385.3,539.7L1380.9,538.4L1376.6,537.2L1372.2,536.0L1367.8,534.8L1363.4,533.7L1358.9,532.6L1354.5,531.5L1350.0,530.5L1345.4,529.4L1340.9,528.5L1336.4,527.5L1331.8,526.6L1327.2,525.7L1322.6,524.8L1317.9,523.9L1313.3,523.1L1308.6,522.3L1304.0,521.6L1299.3,520.8L1294.6,520.1L1289.8,519.5L1285.1,518.8L1280.4,518.2L1275.6,517.6L1270.9,517.1L1266.1,516.5L1261.3,516.0L1256.5,515.6L1251.7,515.1L1246.9,514.7L1242.1,514.3L1237.2,513.9L1232.4,513.6L1227.6,513.3L1222.7,513.0L1217.9,512.8L1213.0,512.6L1208.1,512.4L1203.3,512.2L1198.4,512.1L1193.5,511.9L1188.6,511.9L1183.8,511.8L1178.9,511.8L1174.0,511.8L1169.1,511.8L1164.2,511.9L1159.3,511.9L1154.5,512.1L1149.6,512.2L1144.7,512.4L1139.8,512.6L1134.9,512.8L1130.1,513.0L1125.2,513.3L1120.3,513.6L1115.5,513.9L1110.6,514.3L1105.8,514.7L1100.9,515.1L1096.1,515.6L1091.2,516.0L1086.4,516.5L1081.6,517.1L1076.8,517.6L1072.0,518.2L1067.2,518.8L1062.4,519.5L1057.6,520.1L1052.9,520.8L1048.1,521.6L1043.4,522.3L1038.6,523.1L1033.9,523.9L1029.2,524.8L1024.5,525.7L1019.9,526.6L1015.2,527.5L1010.6,528.5L1006.0,529.5L1001.4,530.5L996.8,531.5L992.2,532.6L987.7,533.7L983.2,534.9L978.7,536.0L974.2,537.2L969.7,538.5L965.3,539.7L960.9,541.0L956.5,542.3L952.2,543.7L947.8,545.1L943.5,546.5L939.3,547.9L935.0,549.4L930.8,550.9L926.7,552.4L922.5,554.0L918.4,555.6L914.3,557.2L910.3,558.9L906.3,560.6L902.3,562.3L898.4,564.1L894.6,565.9L890.7,567.7L886.9,569.5L883.2,571.4L879.5,573.3L875.8,575.3L872.2,577.3L868.7,579.3L865.2,581.3L861.7,583.4L858.3,585.5L855.0,587.6L851.7,589.8L848.5,592.0L845.3,594.2L842.3,596.5L839.2,598.8L836.3,601.1L833.4,603.5L830.5,605.8L827.8,608.3L825.1,610.7L822.5,613.2L819.9,615.7L817.5,618.2L815.1,620.8L812.8,623.4L810.6,626.0L808.5,628.7L806.4,631.4L804.4,634.1L802.6,636.8L800.8,639.6L799.1,642.4L797.5,645.2L796.0,648.1L794.6,651.0L793.3,653.9L792.2,656.8L791.1,659.7L790.2,662.7L789.3,665.7L788.6,668.7L788.0,671.8L787.5,674.8L787.1,677.9L786.9,681.0L786.8,684.1L786.8,687.3L787.0,690.4L787.2,693.6L787.7,696.7L788.2,699.9L788.9,703.1L789.8,706.3L790.7,709.6L791.9,712.8L793.1,716.0L794.6,719.3L796.2,722.5L797.9,725.8L799.8,729.0L801.8,732.3L804.0,735.5L806.4,738.7L808.9,742.0L811.6,745.2L814.4,748.4L817.4,751.6L820.6,754.8L824.0,758.0L827.5,761.1L831.2,764.3L835.0,767.4L839.0,770.5L843.2,773.6L847.6,776.6L852.1,779.6L856.8,782.6L861.6,785.5L866.7,788.5L871.9,791.3L877.2,794.2L882.8,797.0L888.4,799.7L894.3,802.4L900.3,805.0L906.5,807.6L912.8,810.2L919.3,812.7L925.9,815.1L932.7,817.5L939.6,819.8L946.7,822.0L953.9,824.2L961.3,826.3L968.7,828.4L976.4,830.3L984.1,832.2L991.9,834.0L999.9,835.8L1008.0,837.4L1016.2,839.0L1024.5,840.5L1032.9,841.9L1041.4,843.2L1049.9,844.4L1058.6,845.6L1067.3,846.6L1076.1,847.6L1085.0,848.4L1093.9,849.2L1102.9,849.9L1111.9,850.5L1121.0,851.0L1130.1,851.3L1139.2,851.6L1148.3,851.8L1157.5,851.9L1166.6,851.9L1175.8,851.8L1185.0,851.7L1194.1,851.4L1203.2,851.0L1212.3,850.5L1221.4,849.9L1230.4,849.2L1239.4,848.5L1248.4,847.6L1257.2,846.7L1266.1,845.6L1274.8,844.5L1283.5,843.2L1292.1,841.9L1300.6,840.5L1309.0,839.0L1317.4,837.5L1325.6,835.8L1333.7,834.1L1341.7,832.3L1349.6,830.4L1357.4,828.4L1365.1,826.4L1372.6,824.3L1380.0,822.1L1387.3,819.9L1394.4,817.6L1401.4,815.2L1408.2,812.8L1414.9,810.3L1421.5,807.7L1427.9,805.1L1434.1,802.5L1440.2,799.8L1446.1,797.0L1451.9,794.3L1457.5,791.4L1462.9,788.6L1468.2,785.6L1473.3,782.7ZM1471.6,781.8L1466.5,784.8L1461.3,787.7L1455.9,790.5L1450.3,793.3L1444.6,796.1L1438.7,798.8L1432.6,801.5L1426.4,804.1L1420.0,806.7L1413.5,809.2L1406.8,811.7L1400.0,814.1L1393.1,816.5L1386.0,818.7L1378.8,821.0L1371.4,823.1L1363.9,825.2L1356.3,827.2L1348.6,829.2L1340.7,831.1L1332.7,832.9L1324.7,834.6L1316.5,836.2L1308.2,837.8L1299.8,839.2L1291.4,840.6L1282.8,841.9L1274.2,843.2L1265.5,844.3L1256.7,845.3L1247.9,846.3L1239.0,847.1L1230.1,847.9L1221.1,848.5L1212.1,849.1L1203.0,849.6L1194.0,850.0L1184.9,850.3L1175.8,850.5L1166.7,850.6L1157.6,850.6L1148.5,850.5L1139.4,850.3L1130.3,850.0L1121.3,849.6L1112.3,849.1L1103.3,848.5L1094.4,847.9L1085.5,847.1L1076.7,846.2L1068.0,845.3L1059.3,844.2L1050.7,843.1L1042.2,841.9L1033.7,840.6L1025.4,839.2L1017.2,837.7L1009.0,836.1L1001.0,834.5L993.0,832.8L985.2,831.0L977.5,829.1L970.0,827.2L962.5,825.1L955.2,823.0L948.0,820.9L941.0,818.7L934.1,816.4L927.4,814.0L920.8,811.6L914.3,809.1L908.0,806.6L901.9,804.0L895.9,801.4L890.1,798.7L884.4,796.0L878.9,793.2L873.6,790.4L868.4,787.6L863.4,784.7L858.6,781.7L853.9,778.8L849.4,775.8L845.0,772.8L840.9,769.7L836.9,766.6L833.0,763.5L829.4,760.4L825.9,757.3L822.5,754.1L819.3,751.0L816.3,747.8L813.5,744.6L810.8,741.4L808.3,738.2L805.9,734.9L803.7,731.7L801.7,728.5L799.8,725.3L798.1,722.0L796.5,718.8L795.1,715.6L793.8,712.4L792.6,709.2L791.7,706.0L790.8,702.8L790.1,699.6L789.5,696.4L789.1,693.3L788.8,690.1L788.7,687.0L788.6,683.9L788.7,680.8L789.0,677.7L789.3,674.6L789.8,671.6L790.4,668.5L791.1,665.5L791.9,662.6L792.9,659.6L793.9,656.7L795.1,653.7L796.3,650.9L797.7,648.0L799.2,645.2L800.7,642.3L802.4,639.6L804.2,636.8L806.0,634.1L808.0,631.4L810.0,628.7L812.2,626.1L814.4,623.4L816.7,620.9L819.1,618.3L821.6,615.8L824.2,613.3L826.8,610.8L829.5,608.4L832.3,606.0L835.1,603.6L838.1,601.3L841.1,598.9L844.1,596.7L847.2,594.4L850.4,592.2L853.6,590.0L856.9,587.9L860.3,585.8L863.7,583.7L867.1,581.6L870.6,579.6L874.2,577.6L877.8,575.6L881.5,573.7L885.2,571.8L888.9,569.9L892.7,568.1L896.5,566.3L900.4,564.5L904.3,562.8L908.3,561.1L912.3,559.4L916.3,557.8L920.4,556.2L924.5,554.6L928.6,553.1L932.7,551.5L936.9,550.0L941.2,548.6L945.4,547.2L949.7,545.8L954.0,544.4L958.3,543.1L962.7,541.8L967.1,540.5L971.5,539.3L975.9,538.0L980.4,536.9L984.9,535.7L989.4,534.6L993.9,533.5L998.4,532.4L1003.0,531.4L1007.5,530.4L1012.1,529.4L1016.7,528.5L1021.3,527.6L1026.0,526.7L1030.6,525.8L1035.3,525.0L1039.9,524.2L1044.6,523.4L1049.3,522.7L1054.0,521.9L1058.8,521.2L1063.5,520.6L1068.2,520.0L1073.0,519.3L1077.7,518.8L1082.5,518.2L1087.3,517.7L1092.1,517.2L1096.8,516.7L1101.6,516.3L1106.4,515.9L1111.2,515.5L1116.0,515.2L1120.9,514.8L1125.7,514.5L1130.5,514.3L1135.3,514.0L1140.2,513.8L1145.0,513.6L1149.8,513.4L1154.6,513.3L1159.5,513.2L1164.3,513.1L1169.1,513.1L1174.0,513.0L1178.8,513.0L1183.6,513.1L1188.5,513.1L1193.3,513.2L1198.1,513.3L1202.9,513.4L1207.7,513.6L1212.6,513.8L1217.4,514.0L1222.2,514.3L1227.0,514.5L1231.8,514.8L1236.5,515.1L1241.3,515.5L1246.1,515.9L1250.9,516.3L1255.6,516.7L1260.4,517.2L1265.1,517.7L1269.8,518.2L1274.6,518.8L1279.3,519.3L1284.0,519.9L1288.7,520.6L1293.3,521.2L1298.0,521.9L1302.7,522.6L1307.3,523.4L1311.9,524.2L1316.5,525.0L1321.1,525.8L1325.7,526.6L1330.3,527.5L1334.8,528.4L1339.3,529.4L1343.8,530.4L1348.3,531.4L1352.8,532.4L1357.2,533.5L1361.7,534.6L1366.1,535.7L1370.5,536.8L1374.8,538.0L1379.1,539.2L1383.5,540.5L1387.7,541.7L1392.0,543.1L1396.2,544.4L1400.4,545.7L1404.6,547.1L1408.7,548.6L1412.8,550.0L1416.9,551.5L1420.9,553.0L1424.9,554.6L1428.9,556.2L1432.8,557.8L1436.7,559.4L1440.6,561.1L1444.4,562.8L1448.2,564.5L1451.9,566.3L1455.6,568.1L1459.2,569.9L1462.8,571.8L1466.4,573.7L1469.9,575.6L1473.3,577.6L1476.7,579.6L1480.0,581.6L1483.3,583.7L1486.6,585.7L1489.7,587.9L1492.8,590.0L1495.9,592.2L1498.9,594.4L1501.8,596.7L1504.7,598.9L1507.5,601.3L1510.2,603.6L1512.8,606.0L1515.4,608.4L1517.9,610.8L1520.3,613.3L1522.7,615.8L1525.0,618.3L1527.2,620.9L1529.3,623.5L1531.3,626.1L1533.2,628.7L1535.0,631.4L1536.7,634.1L1538.3,636.8L1539.9,639.6L1541.3,642.4L1542.7,645.2L1543.9,648.0L1545.0,650.9L1546.0,653.8L1547.0,656.7L1547.8,659.6L1548.4,662.6L1549.0,665.6L1549.5,668.6L1549.8,671.6L1550.0,674.7L1550.1,677.7L1550.1,680.8L1549.9,683.9L1549.6,687.0L1549.2,690.2L1548.6,693.3L1548.0,696.5L1547.1,699.7L1546.1,702.8L1545.0,706.0L1543.8,709.2L1542.4,712.5L1540.8,715.7L1539.1,718.9L1537.2,722.1L1535.2,725.4L1533.1,728.6L1530.8,731.8L1528.3,735.0L1525.6,738.3L1522.9,741.5L1519.9,744.7L1516.8,747.9L1513.5,751.0L1510.1,754.2L1506.5,757.4L1502.7,760.5L1498.7,763.6L1494.6,766.7L1490.4,769.8L1485.9,772.9L1481.3,775.9L1476.6,778.9ZM1548.0,813.7L1553.5,809.8L1558.7,805.9L1563.7,802.0L1568.6,798.0L1573.1,794.0L1577.5,790.0L1581.7,786.0L1585.6,781.9L1589.4,777.9L1592.9,773.8L1596.2,769.8L1599.4,765.7L1602.3,761.7L1605.0,757.6L1607.5,753.5L1609.8,749.5L1611.9,745.4L1613.8,741.4L1615.6,737.4L1617.1,733.4L1618.5,729.4L1619.7,725.4L1620.7,721.4L1621.6,717.5L1622.2,713.6L1622.7,709.7L1623.1,705.8L1623.2,702.0L1623.2,698.1L1623.1,694.3L1622.8,690.6L1622.4,686.8L1621.8,683.1L1621.1,679.4L1620.2,675.8L1619.2,672.2L1618.0,668.6L1616.8,665.1L1615.4,661.6L1613.8,658.1L1612.2,654.7L1610.4,651.3L1608.6,647.9L1606.6,644.6L1604.5,641.3L1602.2,638.0L1599.9,634.8L1597.5,631.6L1595.0,628.5L1592.4,625.4L1589.7,622.3L1587.0,619.3L1584.1,616.4L1581.1,613.4L1578.1,610.5L1575.0,607.7L1571.8,604.8L1568.5,602.1L1565.1,599.3L1561.7,596.6L1558.2,594.0L1554.6,591.3L1551.0,588.8L1547.3,586.2L1543.5,583.7L1539.7,581.2L1535.8,578.8L1531.9,576.4L1527.9,574.1L1523.8,571.8L1519.7,569.5L1515.5,567.3L1511.3,565.1L1507.0,563.0L1502.7,560.8L1498.4,558.8L1494.0,556.7L1489.5,554.7L1485.0,552.8L1480.5,550.9L1476.0,549.0L1471.4,547.1L1466.7,545.3L1462.0,543.5L1457.3,541.8L1452.6,540.1L1447.8,538.4L1443.0,536.8L1438.2,535.2L1433.3,533.6L1428.4,532.1L1423.5,530.6L1418.6,529.2L1413.6,527.7L1408.6,526.4L1403.6,525.0L1398.5,523.7L1393.5,522.4L1388.4,521.2L1383.3,519.9L1378.1,518.8L1373.0,517.6L1367.8,516.5L1362.6,515.4L1357.4,514.4L1352.2,513.4L1347.0,512.4L1341.8,511.4L1336.5,510.5L1331.2,509.6L1325.9,508.8L1320.6,507.9L1315.3,507.1L1310.0,506.4L1304.7,505.6L1299.3,504.9L1293.9,504.3L1288.6,503.6L1283.2,503.0L1277.8,502.5L1272.4,501.9L1267.0,501.4L1261.6,500.9L1256.2,500.5L1250.8,500.1L1245.3,499.7L1239.9,499.3L1234.4,499.0L1229.0,498.7L1223.5,498.4L1218.1,498.2L1212.6,498.0L1207.2,497.8L1201.7,497.6L1196.2,497.5L1190.7,497.4L1185.3,497.4L1179.8,497.3L1174.3,497.3L1168.8,497.4L1163.3,497.4L1157.9,497.5L1152.4,497.6L1146.9,497.8L1141.4,498.0L1135.9,498.2L1130.5,498.4L1125.0,498.7L1119.5,499.0L1114.0,499.3L1108.6,499.7L1103.1,500.1L1097.7,500.5L1092.2,500.9L1086.8,501.4L1081.3,501.9L1075.9,502.5L1070.4,503.0L1065.0,503.7L1059.6,504.3L1054.2,505.0L1048.8,505.7L1043.4,506.4L1038.0,507.1L1032.6,507.9L1027.2,508.8L1021.9,509.6L1016.5,510.5L1011.2,511.4L1005.9,512.4L1000.5,513.4L995.2,514.4L990.0,515.4L984.7,516.5L979.4,517.6L974.2,518.8L969.0,520.0L963.8,521.2L958.6,522.4L953.4,523.7L948.3,525.0L943.1,526.4L938.0,527.8L932.9,529.2L927.9,530.6L922.8,532.1L917.8,533.6L912.8,535.2L907.8,536.8L902.9,538.4L898.0,540.1L893.1,541.8L888.3,543.5L883.4,545.3L878.7,547.1L873.9,549.0L869.2,550.9L864.5,552.8L859.8,554.7L855.2,556.7L850.7,558.8L846.1,560.9L841.7,563.0L837.2,565.1L832.8,567.3L828.5,569.5L824.2,571.8L819.9,574.1L815.7,576.4L811.6,578.8L807.5,581.2L803.5,583.7L799.5,586.2L795.6,588.7L791.7,591.3L787.9,593.9L784.2,596.6L780.6,599.3L777.0,602.0L773.5,604.8L770.0,607.6L766.7,610.5L763.4,613.4L760.2,616.3L757.1,619.3L754.0,622.3L751.1,625.4L748.3,628.5L745.5,631.6L742.8,634.8L740.3,638.0L737.8,641.2L735.4,644.5L733.1,647.8L731.0,651.2L728.9,654.6L727.0,658.0L725.2,661.5L723.5,665.0L721.9,668.6L720.5,672.1L719.2,675.7L718.0,679.4L716.9,683.1L716.0,686.8L715.3,690.5L714.7,694.3L714.2,698.0L713.9,701.9L713.8,705.7L713.8,709.6L713.9,713.5L714.3,717.4L714.8,721.3L715.5,725.3L716.3,729.3L717.3,733.3L718.5,737.3L719.9,741.3L721.5,745.3L723.3,749.4L725.3,753.4L727.4,757.5L729.8,761.5L732.4,765.6L735.1,769.6L738.1,773.7L741.3,777.8L744.7,781.8L748.3,785.8L752.1,789.9L756.1,793.9L760.4,797.8L764.9,801.8L769.6,805.8L774.5,809.7L779.6,813.6L785.0,817.4L790.5,821.2L796.3,825.0L802.4,828.7L808.6,832.4L815.1,836.1L821.8,839.7L828.7,843.2L835.8,846.7L843.1,850.1L850.7,853.5L858.4,856.7L866.4,860.0L874.6,863.1L883.0,866.2L891.6,869.1L900.3,872.0L909.3,874.9L918.4,877.6L927.8,880.2L937.3,882.7L947.0,885.2L956.8,887.5L966.8,889.7L976.9,891.8L987.2,893.8L997.7,895.7L1008.2,897.5L1018.9,899.2L1029.7,900.7L1040.6,902.1L1051.7,903.4L1062.8,904.6L1074.0,905.6L1085.2,906.6L1096.5,907.4L1107.9,908.0L1119.4,908.5L1130.8,908.9L1142.3,909.2L1153.9,909.3L1165.4,909.4L1176.9,909.2L1188.4,909.0L1200.0,908.6L1211.4,908.0L1222.9,907.4L1234.3,906.6L1245.6,905.7L1256.9,904.6L1268.1,903.5L1279.2,902.2L1290.3,900.8L1301.2,899.2L1312.1,897.6L1322.8,895.8L1333.4,893.9L1343.8,891.9L1354.2,889.8L1364.4,887.6L1374.4,885.3L1384.3,882.8L1394.0,880.3L1403.6,877.7L1413.0,875.0L1422.2,872.2L1431.2,869.3L1440.1,866.3L1448.7,863.2L1457.2,860.1L1465.4,856.9L1473.5,853.6L1481.3,850.2L1488.9,846.8L1496.4,843.4L1503.6,839.8L1510.6,836.2L1517.4,832.6L1523.9,828.9L1530.3,825.2L1536.4,821.4L1542.3,817.6ZM1540.4,816.6L1534.5,820.4L1528.4,824.1L1522.1,827.9L1515.6,831.5L1508.8,835.1L1501.8,838.7L1494.6,842.2L1487.3,845.7L1479.6,849.1L1471.8,852.4L1463.8,855.7L1455.6,858.9L1447.2,862.0L1438.6,865.0L1429.8,868.0L1420.8,870.8L1411.7,873.6L1402.3,876.3L1392.8,878.9L1383.1,881.4L1373.3,883.8L1363.3,886.1L1353.2,888.3L1342.9,890.4L1332.5,892.4L1321.9,894.3L1311.3,896.1L1300.5,897.7L1289.6,899.2L1278.6,900.6L1267.6,901.9L1256.4,903.1L1245.2,904.1L1233.9,905.0L1222.6,905.8L1211.2,906.4L1199.8,907.0L1188.4,907.4L1176.9,907.6L1165.4,907.7L1154.0,907.7L1142.5,907.6L1131.1,907.3L1119.7,906.9L1108.3,906.4L1097.0,905.8L1085.7,905.0L1074.5,904.1L1063.4,903.0L1052.3,901.9L1041.4,900.6L1030.5,899.2L1019.8,897.6L1009.2,896.0L998.7,894.2L988.3,892.3L978.0,890.4L967.9,888.3L958.0,886.0L948.2,883.7L938.6,881.3L929.1,878.8L919.8,876.2L910.7,873.5L901.8,870.7L893.1,867.8L884.5,864.9L876.2,861.8L868.1,858.7L860.1,855.5L852.4,852.3L844.9,848.9L837.6,845.5L830.5,842.1L823.6,838.6L816.9,835.0L810.5,831.4L804.3,827.7L798.3,824.0L792.5,820.3L786.9,816.5L781.6,812.6L776.5,808.8L771.6,804.9L766.9,801.0L762.4,797.0L758.2,793.1L754.2,789.1L750.3,785.1L746.7,781.1L743.3,777.1L740.2,773.0L737.2,769.0L734.4,765.0L731.9,760.9L729.5,756.9L727.3,752.8L725.4,748.8L723.6,744.8L722.0,740.8L720.6,736.8L719.4,732.8L718.3,728.8L717.5,724.9L716.8,720.9L716.3,717.0L715.9,713.1L715.7,709.2L715.7,705.4L715.8,701.6L716.1,697.8L716.6,694.0L717.2,690.2L717.9,686.5L718.8,682.8L719.8,679.2L721.0,675.6L722.3,672.0L723.7,668.4L725.3,664.9L726.9,661.4L728.7,657.9L730.6,654.5L732.7,651.1L734.8,647.8L737.1,644.5L739.4,641.2L741.9,638.0L744.5,634.8L747.2,631.6L749.9,628.5L752.8,625.4L755.8,622.4L758.8,619.4L762.0,616.4L765.2,613.5L768.5,610.6L771.9,607.7L775.3,604.9L778.8,602.2L782.4,599.5L786.1,596.8L789.9,594.1L793.7,591.5L797.5,589.0L801.4,586.4L805.4,584.0L809.5,581.5L813.6,579.1L817.7,576.7L821.9,574.4L826.2,572.1L830.5,569.9L834.9,567.7L839.3,565.5L843.7,563.4L848.2,561.3L852.7,559.2L857.3,557.2L861.9,555.2L866.5,553.3L871.2,551.4L875.9,549.5L880.7,547.7L885.4,545.9L890.3,544.2L895.1,542.4L900.0,540.7L904.9,539.1L909.8,537.5L914.7,535.9L919.7,534.4L924.7,532.9L929.7,531.4L934.8,530.0L939.8,528.6L944.9,527.2L950.0,525.9L955.2,524.6L960.3,523.3L965.5,522.1L970.6,520.9L975.8,519.7L981.0,518.6L986.3,517.5L991.5,516.4L996.7,515.4L1002.0,514.4L1007.3,513.4L1012.6,512.5L1017.9,511.5L1023.2,510.7L1028.5,509.8L1033.8,509.0L1039.2,508.2L1044.5,507.5L1049.9,506.8L1055.2,506.1L1060.6,505.4L1066.0,504.8L1071.4,504.2L1076.7,503.6L1082.1,503.1L1087.5,502.6L1092.9,502.1L1098.3,501.7L1103.8,501.3L1109.2,500.9L1114.6,500.5L1120.0,500.2L1125.4,499.9L1130.9,499.6L1136.3,499.4L1141.7,499.2L1147.1,499.0L1152.6,498.9L1158.0,498.8L1163.4,498.7L1168.9,498.6L1174.3,498.6L1179.7,498.6L1185.1,498.6L1190.6,498.7L1196.0,498.8L1201.4,498.9L1206.8,499.0L1212.2,499.2L1217.6,499.4L1223.1,499.6L1228.5,499.9L1233.9,500.2L1239.3,500.5L1244.6,500.9L1250.0,501.3L1255.4,501.7L1260.8,502.1L1266.1,502.6L1271.5,503.1L1276.8,503.6L1282.2,504.2L1287.5,504.8L1292.8,505.4L1298.2,506.1L1303.5,506.7L1308.8,507.5L1314.1,508.2L1319.3,509.0L1324.6,509.8L1329.8,510.6L1335.1,511.5L1340.3,512.4L1345.5,513.4L1350.7,514.3L1355.9,515.3L1361.1,516.4L1366.2,517.4L1371.3,518.5L1376.5,519.7L1381.6,520.8L1386.6,522.0L1391.7,523.3L1396.7,524.5L1401.8,525.8L1406.8,527.2L1411.7,528.5L1416.7,529.9L1421.6,531.4L1426.5,532.8L1431.4,534.3L1436.2,535.9L1441.1,537.5L1445.9,539.1L1450.6,540.7L1455.4,542.4L1460.1,544.1L1464.7,545.9L1469.3,547.7L1473.9,549.5L1478.5,551.4L1483.0,553.3L1487.5,555.2L1492.0,557.2L1496.4,559.2L1500.7,561.3L1505.0,563.4L1509.3,565.5L1513.5,567.7L1517.7,569.9L1521.8,572.1L1525.9,574.4L1529.9,576.7L1533.9,579.1L1537.8,581.5L1541.6,583.9L1545.4,586.4L1549.1,589.0L1552.8,591.5L1556.3,594.1L1559.9,596.8L1563.3,599.5L1566.7,602.2L1570.0,604.9L1573.2,607.8L1576.3,610.6L1579.4,613.5L1582.4,616.4L1585.3,619.4L1588.1,622.4L1590.8,625.4L1593.4,628.5L1595.9,631.6L1598.3,634.8L1600.6,638.0L1602.8,641.2L1604.9,644.5L1606.9,647.8L1608.7,651.2L1610.5,654.6L1612.1,658.0L1613.6,661.4L1615.0,664.9L1616.3,668.5L1617.4,672.0L1618.4,675.6L1619.2,679.2L1619.9,682.9L1620.5,686.6L1620.9,690.3L1621.2,694.1L1621.3,697.8L1621.3,701.7L1621.1,705.5L1620.8,709.3L1620.3,713.2L1619.6,717.1L1618.7,721.0L1617.7,725.0L1616.5,728.9L1615.2,732.9L1613.6,736.9L1611.8,740.9L1609.9,744.9L1607.8,748.9L1605.5,753.0L1603.0,757.0L1600.3,761.0L1597.3,765.1L1594.2,769.1L1590.9,773.2L1587.4,777.2L1583.6,781.2L1579.7,785.2L1575.5,789.2L1571.2,793.2L1566.6,797.2L1561.8,801.1L1556.8,805.0L1551.5,808.9L1546.1,812.8ZM1625.4,851.4L1631.4,846.5L1637.2,841.5L1642.7,836.6L1647.9,831.5L1652.8,826.5L1657.5,821.5L1661.9,816.5L1666.0,811.4L1669.9,806.4L1673.5,801.3L1676.9,796.3L1680.0,791.3L1682.8,786.3L1685.4,781.3L1687.8,776.3L1689.9,771.3L1691.8,766.4L1693.5,761.4L1694.9,756.5L1696.1,751.7L1697.1,746.8L1697.9,742.0L1698.5,737.3L1698.9,732.5L1699.0,727.8L1699.0,723.1L1698.8,718.5L1698.4,713.9L1697.9,709.4L1697.1,704.9L1696.2,700.4L1695.1,696.0L1693.9,691.6L1692.5,687.3L1690.9,683.0L1689.2,678.8L1687.4,674.6L1685.4,670.5L1683.3,666.4L1681.0,662.3L1678.6,658.4L1676.1,654.4L1673.4,650.5L1670.7,646.7L1667.8,642.9L1664.8,639.2L1661.7,635.5L1658.6,631.9L1655.3,628.3L1651.9,624.7L1648.4,621.3L1644.8,617.8L1641.2,614.5L1637.4,611.1L1633.6,607.8L1629.7,604.6L1625.7,601.4L1621.6,598.3L1617.4,595.2L1613.2,592.2L1608.9,589.2L1604.6,586.3L1600.1,583.4L1595.6,580.6L1591.1,577.8L1586.5,575.0L1581.8,572.4L1577.1,569.7L1572.3,567.1L1567.5,564.6L1562.6,562.1L1557.7,559.6L1552.8,557.2L1547.8,554.8L1542.7,552.5L1537.6,550.2L1532.5,548.0L1527.3,545.8L1522.1,543.6L1516.8,541.5L1511.6,539.5L1506.2,537.5L1500.9,535.5L1495.5,533.6L1490.1,531.7L1484.7,529.8L1479.2,528.0L1473.7,526.2L1468.2,524.5L1462.7,522.8L1457.1,521.2L1451.5,519.6L1445.9,518.0L1440.3,516.5L1434.7,515.0L1429.0,513.5L1423.3,512.1L1417.6,510.7L1411.9,509.4L1406.1,508.1L1400.4,506.8L1394.6,505.6L1388.8,504.4L1383.0,503.2L1377.2,502.1L1371.4,501.0L1365.5,499.9L1359.7,498.9L1353.8,497.9L1348.0,497.0L1342.1,496.1L1336.2,495.2L1330.3,494.4L1324.4,493.5L1318.4,492.8L1312.5,492.0L1306.6,491.3L1300.6,490.6L1294.7,490.0L1288.7,489.4L1282.8,488.8L1276.8,488.3L1270.8,487.7L1264.8,487.3L1258.8,486.8L1252.8,486.4L1246.8,486.0L1240.8,485.7L1234.8,485.3L1228.8,485.1L1222.8,484.8L1216.8,484.6L1210.8,484.4L1204.7,484.2L1198.7,484.1L1192.7,484.0L1186.7,484.0L1180.6,483.9L1174.6,483.9L1168.6,484.0L1162.5,484.0L1156.5,484.1L1150.5,484.2L1144.4,484.4L1138.4,484.6L1132.4,484.8L1126.3,485.1L1120.3,485.4L1114.2,485.7L1108.2,486.0L1102.2,486.4L1096.2,486.8L1090.1,487.3L1084.1,487.8L1078.1,488.3L1072.1,488.8L1066.1,489.4L1060.1,490.0L1054.0,490.6L1048.0,491.3L1042.1,492.0L1036.1,492.8L1030.1,493.6L1024.1,494.4L1018.1,495.2L1012.2,496.1L1006.2,497.0L1000.3,498.0L994.3,498.9L988.4,500.0L982.5,501.0L976.5,502.1L970.6,503.2L964.7,504.4L958.9,505.6L953.0,506.8L947.1,508.1L941.3,509.4L935.5,510.7L929.6,512.1L923.8,513.5L918.0,515.0L912.3,516.5L906.5,518.0L900.8,519.6L895.1,521.2L889.4,522.8L883.7,524.5L878.0,526.3L872.4,528.0L866.8,529.8L861.2,531.7L855.6,533.6L850.1,535.5L844.6,537.5L839.1,539.5L833.7,541.6L828.3,543.7L822.9,545.8L817.5,548.0L812.2,550.2L806.9,552.5L801.7,554.8L796.5,557.2L791.3,559.6L786.2,562.1L781.1,564.6L776.1,567.1L771.1,569.7L766.2,572.4L761.3,575.0L756.4,577.8L751.7,580.6L746.9,583.4L742.3,586.3L737.7,589.2L733.1,592.2L728.7,595.2L724.3,598.3L719.9,601.4L715.7,604.6L711.5,607.8L707.4,611.1L703.4,614.4L699.4,617.8L695.5,621.2L691.8,624.7L688.1,628.2L684.5,631.8L681.0,635.5L677.7,639.1L674.4,642.9L671.2,646.6L668.1,650.5L665.2,654.4L662.3,658.3L659.6,662.3L657.0,666.3L654.5,670.4L652.2,674.5L650.0,678.7L647.9,682.9L646.0,687.2L644.2,691.5L642.6,695.9L641.2,700.3L639.9,704.8L638.8,709.3L637.8,713.8L637.0,718.4L636.5,723.0L636.0,727.7L635.8,732.4L635.8,737.1L636.0,741.9L636.4,746.7L637.0,751.5L637.8,756.4L638.8,761.3L640.0,766.2L641.5,771.1L643.2,776.1L645.1,781.1L647.3,786.1L649.7,791.1L652.4,796.1L655.3,801.2L658.5,806.2L661.9,811.2L665.6,816.3L669.6,821.3L673.8,826.3L678.3,831.4L683.1,836.4L688.2,841.3L693.5,846.3L699.2,851.2L705.1,856.1L711.3,861.0L717.8,865.8L724.6,870.6L731.6,875.4L739.0,880.1L746.6,884.7L754.6,889.3L762.8,893.8L771.3,898.2L780.2,902.6L789.2,906.9L798.6,911.1L808.3,915.2L818.2,919.2L828.4,923.1L838.8,926.9L849.6,930.6L860.5,934.2L871.8,937.7L883.2,941.0L894.9,944.3L906.9,947.4L919.0,950.3L931.4,953.1L944.0,955.8L956.7,958.3L969.7,960.7L982.8,963.0L996.1,965.0L1009.5,966.9L1023.1,968.7L1036.8,970.2L1050.6,971.7L1064.5,972.9L1078.6,974.0L1092.7,974.8L1106.8,975.6L1121.1,976.1L1135.3,976.5L1149.6,976.6L1163.9,976.6L1178.2,976.5L1192.5,976.1L1206.8,975.6L1221.1,974.9L1235.2,974.0L1249.4,972.9L1263.4,971.7L1277.3,970.3L1291.2,968.8L1304.9,967.0L1318.5,965.1L1332.0,963.1L1345.3,960.8L1358.5,958.5L1371.4,956.0L1384.2,953.3L1396.9,950.5L1409.3,947.5L1421.5,944.4L1433.5,941.2L1445.2,937.9L1456.8,934.4L1468.0,930.8L1479.1,927.1L1489.9,923.3L1500.4,919.4L1510.7,915.4L1520.7,911.3L1530.4,907.1L1539.9,902.8L1549.1,898.4L1558.0,894.0L1566.6,889.5L1575.0,884.9L1583.0,880.3L1590.8,875.6L1598.3,870.8L1605.5,866.0L1612.4,861.2L1619.0,856.3ZM1616.9,855.3L1610.3,860.1L1603.4,864.9L1596.2,869.7L1588.8,874.4L1581.0,879.1L1573.0,883.7L1564.7,888.2L1556.1,892.7L1547.2,897.1L1538.1,901.4L1528.6,905.7L1518.9,909.8L1509.0,913.9L1498.7,917.9L1488.3,921.8L1477.5,925.6L1466.5,929.2L1455.3,932.8L1443.8,936.3L1432.1,939.6L1420.2,942.8L1408.0,945.8L1395.7,948.8L1383.1,951.6L1370.4,954.2L1357.5,956.7L1344.4,959.1L1331.1,961.3L1317.7,963.3L1304.2,965.2L1290.5,966.9L1276.8,968.5L1262.9,969.9L1248.9,971.1L1234.9,972.1L1220.8,973.0L1206.6,973.7L1192.4,974.2L1178.2,974.6L1164.0,974.8L1149.7,974.7L1135.5,974.6L1121.3,974.2L1107.2,973.7L1093.1,973.0L1079.1,972.1L1065.1,971.0L1051.3,969.8L1037.5,968.4L1023.9,966.8L1010.4,965.1L997.0,963.2L983.8,961.2L970.7,959.0L957.9,956.6L945.2,954.1L932.7,951.4L920.4,948.6L908.3,945.7L896.4,942.6L884.7,939.4L873.3,936.1L862.2,932.6L851.2,929.1L840.6,925.4L830.1,921.6L820.0,917.7L810.1,913.7L800.5,909.6L791.2,905.5L782.1,901.2L773.3,896.9L764.8,892.5L756.6,888.0L748.7,883.5L741.1,878.9L733.8,874.2L726.7,869.5L719.9,864.7L713.5,859.9L707.3,855.1L701.4,850.2L695.7,845.3L690.4,840.4L685.3,835.4L680.6,830.4L676.1,825.4L671.8,820.5L667.9,815.4L664.2,810.4L660.7,805.4L657.5,800.4L654.6,795.4L651.9,790.4L649.5,785.4L647.3,780.5L645.4,775.5L643.7,770.6L642.2,765.6L641.0,760.8L639.9,755.9L639.1,751.0L638.5,746.2L638.1,741.4L637.9,736.7L637.9,732.0L638.1,727.3L638.5,722.7L639.1,718.1L639.8,713.5L640.8,709.0L641.9,704.5L643.1,700.1L644.6,695.7L646.1,691.3L647.9,687.0L649.8,682.7L651.8,678.5L654.0,674.4L656.3,670.3L658.8,666.2L661.3,662.2L664.0,658.2L666.9,654.3L669.8,650.4L672.9,646.6L676.1,642.8L679.4,639.1L682.8,635.4L686.3,631.8L689.9,628.3L693.6,624.7L697.4,621.3L701.3,617.9L705.2,614.5L709.3,611.2L713.4,607.9L717.6,604.7L721.9,601.6L726.2,598.4L730.7,595.4L735.1,592.4L739.7,589.4L744.3,586.5L749.0,583.6L753.7,580.8L758.5,578.0L763.3,575.3L768.2,572.7L773.2,570.0L778.2,567.5L783.2,564.9L788.3,562.4L793.4,560.0L798.6,557.6L803.8,555.3L809.0,553.0L814.3,550.7L819.6,548.5L825.0,546.3L830.3,544.2L835.8,542.1L841.2,540.1L846.7,538.1L852.2,536.1L857.7,534.2L863.2,532.3L868.8,530.5L874.4,528.7L880.0,527.0L885.7,525.2L891.3,523.6L897.0,521.9L902.7,520.4L908.4,518.8L914.1,517.3L919.9,515.8L925.6,514.4L931.4,513.0L937.2,511.6L943.0,510.3L948.8,509.0L954.6,507.7L960.5,506.5L966.3,505.3L972.2,504.2L978.0,503.1L983.9,502.0L989.8,501.0L995.7,500.0L1001.6,499.0L1007.5,498.1L1013.4,497.2L1019.4,496.3L1025.3,495.5L1031.2,494.7L1037.2,493.9L1043.1,493.2L1049.1,492.5L1055.0,491.8L1061.0,491.2L1066.9,490.6L1072.9,490.0L1078.9,489.5L1084.8,488.9L1090.8,488.5L1096.8,488.0L1102.8,487.6L1108.8,487.2L1114.7,486.9L1120.7,486.6L1126.7,486.3L1132.7,486.1L1138.7,485.8L1144.7,485.6L1150.6,485.5L1156.6,485.4L1162.6,485.3L1168.6,485.2L1174.6,485.2L1180.6,485.2L1186.5,485.2L1192.5,485.3L1198.5,485.4L1204.5,485.5L1210.4,485.6L1216.4,485.8L1222.4,486.0L1228.3,486.3L1234.3,486.6L1240.3,486.9L1246.2,487.2L1252.2,487.6L1258.1,488.0L1264.0,488.5L1270.0,488.9L1275.9,489.4L1281.8,490.0L1287.8,490.5L1293.7,491.1L1299.6,491.8L1305.5,492.4L1311.4,493.1L1317.3,493.9L1323.1,494.6L1329.0,495.4L1334.9,496.3L1340.7,497.1L1346.6,498.0L1352.4,499.0L1358.2,499.9L1364.0,500.9L1369.8,502.0L1375.6,503.1L1381.4,504.2L1387.2,505.3L1392.9,506.5L1398.7,507.7L1404.4,509.0L1410.1,510.2L1415.8,511.6L1421.5,512.9L1427.2,514.3L1432.8,515.8L1438.4,517.2L1444.0,518.8L1449.6,520.3L1455.2,521.9L1460.7,523.5L1466.3,525.2L1471.8,526.9L1477.2,528.7L1482.7,530.5L1488.1,532.3L1493.5,534.2L1498.9,536.1L1504.2,538.0L1509.5,540.0L1514.8,542.1L1520.0,544.2L1525.2,546.3L1530.4,548.5L1535.5,550.7L1540.6,552.9L1545.7,555.2L1550.7,557.6L1555.7,560.0L1560.6,562.4L1565.5,564.9L1570.3,567.4L1575.1,570.0L1579.8,572.6L1584.5,575.3L1589.1,578.0L1593.7,580.8L1598.2,583.6L1602.6,586.5L1607.0,589.4L1611.3,592.4L1615.5,595.4L1619.7,598.4L1623.8,601.6L1627.8,604.7L1631.7,607.9L1635.6,611.2L1639.4,614.5L1643.1,617.9L1646.6,621.3L1650.2,624.8L1653.6,628.3L1656.9,631.9L1660.1,635.5L1663.2,639.1L1666.2,642.9L1669.0,646.6L1671.7,650.5L1674.4,654.3L1676.9,658.3L1679.2,662.2L1681.5,666.3L1683.6,670.3L1685.6,674.4L1687.4,678.6L1689.1,682.8L1690.6,687.1L1692.0,691.4L1693.2,695.8L1694.3,700.2L1695.2,704.6L1695.9,709.1L1696.4,713.6L1696.8,718.2L1697.0,722.8L1697.0,727.4L1696.8,732.1L1696.4,736.8L1695.8,741.6L1695.0,746.4L1694.0,751.2L1692.8,756.0L1691.3,760.9L1689.6,765.8L1687.7,770.7L1685.6,775.7L1683.3,780.6L1680.6,785.6L1677.8,790.6L1674.7,795.6L1671.3,800.6L1667.7,805.6L1663.9,810.6L1659.7,815.6L1655.3,820.6L1650.7,825.6L1645.7,830.6L1640.5,835.6L1635.0,840.6L1629.3,845.5L1623.2,850.4ZM1711.7,893.6L1718.2,887.4L1724.4,881.1L1730.2,874.9L1735.6,868.6L1740.7,862.4L1745.5,856.2L1749.9,849.9L1754.0,843.7L1757.8,837.5L1761.3,831.3L1764.5,825.1L1767.3,819.0L1769.9,812.9L1772.1,806.8L1774.1,800.7L1775.8,794.7L1777.3,788.8L1778.4,782.8L1779.3,777.0L1780.0,771.1L1780.4,765.3L1780.6,759.6L1780.5,753.9L1780.2,748.3L1779.7,742.7L1778.9,737.2L1778.0,731.8L1776.8,726.4L1775.5,721.1L1774.0,715.8L1772.2,710.6L1770.3,705.5L1768.3,700.4L1766.0,695.4L1763.6,690.4L1761.0,685.5L1758.3,680.7L1755.4,676.0L1752.4,671.3L1749.3,666.7L1746.0,662.1L1742.6,657.6L1739.0,653.2L1735.3,648.9L1731.6,644.6L1727.7,640.3L1723.7,636.2L1719.7,632.1L1715.5,628.1L1711.2,624.1L1706.8,620.2L1702.4,616.4L1697.8,612.6L1693.2,608.9L1688.5,605.2L1683.7,601.6L1678.8,598.1L1673.9,594.6L1668.8,591.2L1663.8,587.9L1658.6,584.6L1653.4,581.4L1648.2,578.2L1642.8,575.1L1637.5,572.0L1632.0,569.0L1626.6,566.1L1621.0,563.2L1615.5,560.3L1609.8,557.6L1604.2,554.8L1598.5,552.2L1592.8,549.5L1587.0,547.0L1581.2,544.5L1575.3,542.0L1569.4,539.6L1563.5,537.2L1557.6,534.9L1551.6,532.6L1545.6,530.4L1539.6,528.3L1533.5,526.1L1527.5,524.1L1521.4,522.0L1515.2,520.0L1509.1,518.1L1502.9,516.2L1496.7,514.4L1490.5,512.6L1484.3,510.8L1478.1,509.1L1471.8,507.4L1465.6,505.8L1459.3,504.2L1453.0,502.7L1446.7,501.1L1440.3,499.7L1434.0,498.3L1427.7,496.9L1421.3,495.5L1414.9,494.2L1408.5,493.0L1402.2,491.7L1395.8,490.5L1389.3,489.4L1382.9,488.3L1376.5,487.2L1370.1,486.2L1363.6,485.2L1357.2,484.2L1350.7,483.3L1344.3,482.4L1337.8,481.5L1331.3,480.7L1324.9,479.9L1318.4,479.2L1311.9,478.5L1305.4,477.8L1298.9,477.2L1292.4,476.6L1285.9,476.0L1279.4,475.5L1272.9,475.0L1266.4,474.5L1259.8,474.0L1253.3,473.6L1246.8,473.3L1240.3,472.9L1233.7,472.6L1227.2,472.4L1220.7,472.1L1214.1,471.9L1207.6,471.8L1201.1,471.6L1194.5,471.5L1188.0,471.5L1181.4,471.5L1174.9,471.5L1168.3,471.5L1161.8,471.6L1155.2,471.7L1148.7,471.8L1142.1,472.0L1135.6,472.2L1129.0,472.4L1122.5,472.7L1115.9,473.0L1109.3,473.3L1102.8,473.7L1096.2,474.1L1089.7,474.5L1083.1,475.0L1076.6,475.5L1070.0,476.0L1063.5,476.6L1056.9,477.2L1050.4,477.8L1043.8,478.5L1037.3,479.2L1030.7,480.0L1024.2,480.7L1017.7,481.6L1011.1,482.4L1004.6,483.3L998.1,484.2L991.5,485.2L985.0,486.2L978.5,487.2L972.0,488.3L965.5,489.4L959.0,490.6L952.5,491.8L946.0,493.0L939.5,494.3L933.0,495.6L926.6,496.9L920.1,498.3L913.7,499.7L907.2,501.2L900.8,502.7L894.4,504.2L887.9,505.8L881.5,507.4L875.2,509.1L868.8,510.8L862.4,512.6L856.1,514.4L849.7,516.2L843.4,518.1L837.1,520.1L830.8,522.1L824.6,524.1L818.3,526.2L812.1,528.3L805.9,530.4L799.7,532.7L793.6,534.9L787.4,537.2L781.3,539.6L775.2,542.0L769.2,544.5L763.2,547.0L757.2,549.6L751.2,552.2L745.3,554.9L739.4,557.6L733.6,560.4L727.8,563.2L722.0,566.1L716.3,569.0L710.6,572.0L705.0,575.1L699.4,578.2L693.9,581.4L688.4,584.6L683.0,587.9L677.7,591.2L672.4,594.6L667.2,598.1L662.0,601.6L656.9,605.2L651.9,608.8L647.0,612.6L642.1,616.3L637.3,620.2L632.6,624.1L628.0,628.0L623.5,632.0L619.1,636.1L614.8,640.3L610.5,644.5L606.4,648.8L602.4,653.1L598.5,657.6L594.7,662.0L591.1,666.6L587.5,671.2L587.0,672.0L587.0,867.5L587.6,868.4L592.5,874.6L597.8,880.9L603.4,887.1L609.4,893.3L615.7,899.5L622.4,905.6L629.4,911.8L636.9,917.8L644.7,923.9L652.9,929.9L661.4,935.8L670.3,941.7L679.6,947.5L689.3,953.2L699.4,958.8L709.8,964.4L720.6,969.8L731.8,975.2L743.4,980.4L755.3,985.5L767.6,990.5L780.2,995.4L793.2,1000.1L806.5,1004.7L820.1,1009.1L834.1,1013.4L848.4,1017.5L863.0,1021.4L877.9,1025.2L893.0,1028.7L908.5,1032.1L924.2,1035.3L940.1,1038.2L956.3,1041.0L972.7,1043.6L989.2,1045.9L1006.0,1048.0L1022.9,1049.9L1040.0,1051.6L1057.2,1053.0L1074.5,1054.2L1092.0,1055.2L1109.5,1055.9L1113.9,1056.0L1194.1,1056.0L1197.4,1055.9L1215.0,1055.2L1232.5,1054.2L1249.9,1053.1L1267.2,1051.6L1284.5,1050.0L1301.6,1048.1L1318.5,1046.0L1335.3,1043.7L1351.9,1041.1L1368.3,1038.4L1384.5,1035.4L1400.5,1032.3L1416.2,1028.9L1431.7,1025.4L1446.9,1021.6L1461.9,1017.7L1476.5,1013.6L1490.9,1009.4L1504.9,1004.9L1518.6,1000.4L1532.0,995.7L1545.1,990.8L1557.8,985.8L1570.1,980.7L1582.1,975.5L1593.8,970.1L1605.1,964.7L1616.0,959.1L1626.6,953.5L1636.8,947.8L1646.6,942.0L1656.0,936.1L1665.1,930.2L1673.8,924.2L1682.1,918.1L1690.1,912.0L1697.6,905.9L1704.9,899.8ZM1702.5,898.6L1695.3,904.7L1687.7,910.8L1679.8,916.8L1671.5,922.8L1662.8,928.8L1653.8,934.7L1644.4,940.5L1634.6,946.3L1624.4,952.0L1613.9,957.6L1603.0,963.1L1591.8,968.5L1580.2,973.8L1568.2,979.0L1555.9,984.1L1543.2,989.0L1530.2,993.8L1516.9,998.5L1503.2,1003.1L1489.2,1007.4L1475.0,1011.7L1460.4,1015.7L1445.5,1019.6L1430.4,1023.3L1415.0,1026.9L1399.3,1030.2L1383.4,1033.3L1367.3,1036.3L1351.0,1039.0L1334.4,1041.5L1317.7,1043.8L1300.9,1045.9L1283.9,1047.8L1266.7,1049.4L1249.5,1050.8L1232.1,1052.0L1214.7,1052.9L1197.3,1053.6L1179.8,1054.1L1162.3,1054.3L1144.7,1054.3L1127.2,1054.1L1109.8,1053.6L1092.4,1052.9L1075.1,1051.9L1057.8,1050.7L1040.7,1049.3L1023.7,1047.7L1006.9,1045.8L990.2,1043.7L973.7,1041.4L957.4,1038.9L941.3,1036.1L925.5,1033.2L909.8,1030.0L894.5,1026.7L879.4,1023.1L864.6,1019.4L850.0,1015.5L835.8,1011.4L821.9,1007.2L808.3,1002.8L795.1,998.3L782.1,993.6L769.6,988.8L757.3,983.8L745.5,978.7L734.0,973.5L722.8,968.2L712.0,962.8L701.6,957.3L691.6,951.7L682.0,946.0L672.7,940.2L663.8,934.4L655.2,928.5L647.1,922.5L639.3,916.5L631.9,910.5L624.8,904.4L618.2,898.3L611.8,892.1L605.9,886.0L600.3,879.8L595.0,873.6L590.1,867.4L587.0,863.1L587.0,674.3L589.4,671.1L592.9,666.5L596.5,661.9L600.3,657.5L604.2,653.1L608.2,648.7L612.3,644.5L616.6,640.3L620.9,636.1L625.4,632.0L629.9,628.0L634.5,624.1L639.3,620.2L644.1,616.4L648.9,612.6L653.9,608.9L658.9,605.3L664.0,601.7L669.2,598.2L674.5,594.8L679.8,591.4L685.1,588.0L690.6,584.8L696.0,581.6L701.6,578.4L707.1,575.3L712.8,572.3L718.5,569.3L724.2,566.4L730.0,563.5L735.8,560.7L741.6,557.9L747.5,555.2L753.4,552.6L759.4,550.0L765.3,547.4L771.4,544.9L777.4,542.5L783.5,540.1L789.6,537.8L795.7,535.5L801.8,533.2L808.0,531.0L814.2,528.9L820.4,526.8L826.6,524.7L832.9,522.7L839.2,520.7L845.4,518.8L851.7,517.0L858.1,515.1L864.4,513.3L870.7,511.6L877.1,509.9L883.4,508.3L889.8,506.6L896.2,505.1L902.6,503.5L909.0,502.0L915.4,500.6L921.8,499.2L928.3,497.8L934.7,496.5L941.1,495.2L947.6,494.0L954.0,492.7L960.5,491.6L967.0,490.4L973.4,489.3L979.9,488.3L986.4,487.3L992.9,486.3L999.3,485.3L1005.8,484.4L1012.3,483.5L1018.8,482.7L1025.3,481.9L1031.8,481.1L1038.3,480.4L1044.8,479.7L1051.3,479.0L1057.8,478.4L1064.3,477.8L1070.8,477.2L1077.3,476.7L1083.8,476.2L1090.3,475.7L1096.8,475.3L1103.3,474.9L1109.8,474.5L1116.3,474.2L1122.8,473.9L1129.3,473.6L1135.8,473.4L1142.3,473.2L1148.8,473.0L1155.3,472.9L1161.8,472.8L1168.3,472.7L1174.8,472.7L1181.3,472.7L1187.8,472.7L1194.3,472.8L1200.8,472.9L1207.3,473.0L1213.8,473.2L1220.3,473.4L1226.8,473.6L1233.3,473.9L1239.7,474.2L1246.2,474.5L1252.7,474.9L1259.2,475.3L1265.6,475.7L1272.1,476.1L1278.6,476.6L1285.0,477.2L1291.5,477.7L1297.9,478.3L1304.4,479.0L1310.8,479.6L1317.3,480.3L1323.7,481.1L1330.1,481.8L1336.6,482.6L1343.0,483.5L1349.4,484.4L1355.8,485.3L1362.2,486.2L1368.6,487.2L1375.0,488.2L1381.4,489.3L1387.8,490.4L1394.2,491.5L1400.5,492.7L1406.9,493.9L1413.2,495.2L1419.6,496.5L1425.9,497.8L1432.2,499.1L1438.5,500.6L1444.8,502.0L1451.1,503.5L1457.4,505.0L1463.7,506.6L1469.9,508.2L1476.1,509.9L1482.3,511.6L1488.5,513.3L1494.7,515.1L1500.9,516.9L1507.0,518.8L1513.2,520.7L1519.3,522.7L1525.4,524.7L1531.4,526.7L1537.5,528.8L1543.5,531.0L1549.5,533.2L1555.5,535.4L1561.4,537.7L1567.3,540.1L1573.2,542.5L1579.0,544.9L1584.8,547.4L1590.6,550.0L1596.4,552.6L1602.1,555.2L1607.7,557.9L1613.3,560.7L1618.9,563.5L1624.4,566.4L1629.9,569.3L1635.4,572.3L1640.8,575.3L1646.1,578.4L1651.4,581.6L1656.6,584.8L1661.7,588.0L1666.8,591.4L1671.9,594.8L1676.8,598.2L1681.7,601.7L1686.5,605.3L1691.2,608.9L1695.9,612.6L1700.5,616.4L1705.0,620.2L1709.4,624.1L1713.7,628.1L1717.9,632.1L1722.0,636.2L1726.0,640.3L1729.9,644.5L1733.7,648.8L1737.3,653.1L1740.8,657.5L1744.2,662.0L1747.5,666.6L1750.6,671.2L1753.6,675.8L1756.4,680.6L1759.1,685.4L1761.7,690.2L1764.1,695.2L1766.3,700.2L1768.3,705.2L1770.2,710.3L1771.9,715.5L1773.4,720.8L1774.8,726.1L1775.9,731.4L1776.8,736.9L1777.5,742.4L1778.0,747.9L1778.3,753.5L1778.4,759.1L1778.2,764.8L1777.7,770.6L1777.1,776.4L1776.2,782.3L1775.0,788.2L1773.5,794.1L1771.8,800.1L1769.8,806.1L1767.5,812.1L1765.0,818.2L1762.1,824.3L1758.9,830.5L1755.4,836.6L1751.6,842.8L1747.5,849.0L1743.1,855.2L1738.3,861.4L1733.2,867.6L1727.8,873.8L1722.0,880.0L1715.8,886.2L1709.4,892.4ZM1798.0,648.4L1795.8,646.2L1790.9,641.5L1785.9,636.9L1780.8,632.3L1775.7,627.8L1770.4,623.4L1765.0,619.1L1759.6,614.9L1754.0,610.7L1748.4,606.6L1742.7,602.6L1737.0,598.7L1731.2,594.8L1725.3,591.0L1719.4,587.3L1713.4,583.6L1707.3,580.0L1701.2,576.5L1695.1,573.1L1688.9,569.7L1682.7,566.4L1676.4,563.1L1670.1,560.0L1663.7,556.8L1657.3,553.8L1650.9,550.8L1644.4,547.9L1637.9,545.0L1631.4,542.2L1624.8,539.4L1618.2,536.7L1611.6,534.1L1605.0,531.5L1598.3,529.0L1591.6,526.5L1584.9,524.1L1578.2,521.7L1571.5,519.4L1564.7,517.2L1557.9,515.0L1551.1,512.8L1544.3,510.7L1537.5,508.7L1530.7,506.7L1523.8,504.7L1517.0,502.8L1510.1,501.0L1503.2,499.2L1496.4,497.4L1489.5,495.7L1482.6,494.0L1475.7,492.4L1468.7,490.8L1461.8,489.3L1454.9,487.8L1448.0,486.3L1441.0,484.9L1434.1,483.5L1427.1,482.2L1420.2,480.9L1413.2,479.7L1406.2,478.5L1399.3,477.3L1392.3,476.2L1385.3,475.1L1378.3,474.1L1371.4,473.1L1364.4,472.1L1357.4,471.2L1350.4,470.3L1343.4,469.5L1336.4,468.6L1329.4,467.9L1322.4,467.1L1315.4,466.4L1308.4,465.8L1301.4,465.1L1294.4,464.5L1287.4,464.0L1280.4,463.5L1273.4,463.0L1266.4,462.5L1259.4,462.1L1252.4,461.7L1245.3,461.4L1238.3,461.1L1231.3,460.8L1224.3,460.5L1217.3,460.3L1210.2,460.2L1203.2,460.0L1196.2,459.9L1189.2,459.9L1182.1,459.8L1175.1,459.8L1168.1,459.9L1161.1,459.9L1154.0,460.0L1147.0,460.2L1140.0,460.3L1132.9,460.6L1125.9,460.8L1118.8,461.1L1111.8,461.4L1104.8,461.7L1097.7,462.1L1090.7,462.5L1083.6,463.0L1076.6,463.5L1069.5,464.0L1062.5,464.6L1055.4,465.1L1048.4,465.8L1041.3,466.4L1034.3,467.1L1027.2,467.9L1020.1,468.7L1013.1,469.5L1006.0,470.3L999.0,471.2L991.9,472.2L984.8,473.1L977.8,474.1L970.7,475.2L963.7,476.2L956.6,477.4L949.5,478.5L942.5,479.7L935.4,481.0L928.4,482.3L921.3,483.6L914.2,485.0L907.2,486.4L900.1,487.8L893.1,489.3L886.0,490.8L879.0,492.4L871.9,494.1L864.9,495.7L857.9,497.4L850.8,499.2L843.8,501.0L836.8,502.9L829.8,504.8L822.8,506.7L815.8,508.7L808.8,510.8L801.9,512.9L794.9,515.0L787.9,517.2L781.0,519.5L774.1,521.8L767.2,524.1L760.3,526.6L753.4,529.0L746.5,531.5L739.7,534.1L732.9,536.8L726.0,539.4L719.3,542.2L712.5,545.0L705.8,547.9L699.1,550.8L692.4,553.8L685.7,556.9L679.1,560.0L672.5,563.2L666.0,566.4L659.5,569.7L653.0,573.1L646.6,576.5L640.2,580.0L633.9,583.6L627.6,587.3L621.3,591.0L615.1,594.8L609.0,598.6L602.9,602.6L596.9,606.6L591.0,610.7L587.0,613.5L587.0,1011.3L594.7,1016.6L606.0,1023.9L617.8,1031.1L630.0,1038.1L642.8,1045.1L656.0,1051.9L664.4,1056.0L1643.6,1056.0L1651.6,1052.3L1665.4,1045.5L1678.8,1038.5L1691.7,1031.5L1704.1,1024.3L1716.0,1017.0L1727.4,1009.7L1738.3,1002.2L1748.8,994.7L1758.8,987.1L1768.3,979.5L1777.3,971.8L1785.9,964.1L1794.0,956.4L1798.0,952.3ZM1798.0,948.3L1791.3,955.0L1783.2,962.7L1774.7,970.4L1765.7,978.0L1756.2,985.5L1746.2,993.1L1735.8,1000.5L1724.9,1007.9L1713.5,1015.2L1701.6,1022.5L1689.2,1029.6L1676.4,1036.6L1663.1,1043.5L1649.3,1050.3L1637.0,1056.0L671.0,1056.0L658.5,1049.9L645.3,1043.1L632.6,1036.2L620.3,1029.2L608.6,1022.1L597.4,1014.8L587.0,1007.8L587.0,615.0L587.2,614.9L593.1,610.8L599.0,606.7L605.1,602.7L611.1,598.8L617.3,594.9L623.5,591.1L629.7,587.4L636.0,583.8L642.4,580.2L648.8,576.8L655.2,573.3L661.7,570.0L668.2,566.7L674.8,563.5L681.4,560.3L688.0,557.2L694.6,554.2L701.3,551.2L708.0,548.3L714.7,545.4L721.5,542.6L728.3,539.9L735.1,537.2L741.9,534.6L748.7,532.1L755.6,529.6L762.5,527.1L769.3,524.7L776.2,522.4L783.2,520.1L790.1,517.9L797.0,515.7L804.0,513.5L810.9,511.5L817.9,509.4L824.9,507.4L831.8,505.5L838.8,503.6L845.8,501.8L852.8,500.0L859.8,498.3L866.8,496.6L873.8,494.9L880.8,493.3L887.8,491.7L894.9,490.2L901.9,488.7L908.9,487.3L915.9,485.9L922.9,484.5L930.0,483.2L937.0,482.0L944.0,480.7L951.0,479.6L958.0,478.4L965.1,477.3L972.1,476.2L979.1,475.2L986.1,474.2L993.2,473.2L1000.2,472.3L1007.2,471.5L1014.2,470.6L1021.2,469.8L1028.2,469.0L1035.2,468.3L1042.2,467.6L1049.3,467.0L1056.3,466.3L1063.3,465.7L1070.3,465.2L1077.3,464.7L1084.3,464.2L1091.3,463.7L1098.3,463.3L1105.2,463.0L1112.2,462.6L1119.2,462.3L1126.2,462.0L1133.2,461.8L1140.2,461.6L1147.2,461.4L1154.2,461.3L1161.1,461.2L1168.1,461.1L1175.1,461.1L1182.1,461.1L1189.0,461.1L1196.0,461.2L1203.0,461.3L1210.0,461.4L1216.9,461.6L1223.9,461.8L1230.9,462.0L1237.8,462.3L1244.8,462.6L1251.8,462.9L1258.7,463.3L1265.7,463.7L1272.7,464.2L1279.6,464.6L1286.6,465.2L1293.5,465.7L1300.5,466.3L1307.4,466.9L1314.4,467.6L1321.4,468.3L1328.3,469.0L1335.3,469.8L1342.2,470.6L1349.2,471.4L1356.1,472.3L1363.0,473.2L1370.0,474.2L1376.9,475.2L1383.9,476.2L1390.8,477.2L1397.7,478.4L1404.7,479.5L1411.6,480.7L1418.5,481.9L1425.5,483.2L1432.4,484.5L1439.3,485.8L1446.2,487.2L1453.1,488.7L1460.0,490.2L1466.9,491.7L1473.8,493.2L1480.7,494.8L1487.5,496.5L1494.4,498.2L1501.3,499.9L1508.1,501.7L1515.0,503.6L1521.8,505.5L1528.6,507.4L1535.4,509.4L1542.2,511.4L1549.0,513.5L1555.8,515.6L1562.6,517.8L1569.3,520.0L1576.0,522.3L1582.7,524.7L1589.4,527.1L1596.1,529.5L1602.8,532.0L1609.4,534.6L1616.0,537.2L1622.6,539.9L1629.1,542.6L1635.7,545.4L1642.2,548.2L1648.6,551.2L1655.1,554.1L1661.5,557.2L1667.9,560.3L1674.2,563.4L1680.5,566.7L1686.7,569.9L1692.9,573.3L1699.1,576.7L1705.2,580.2L1711.3,583.8L1717.3,587.4L1723.2,591.1L1729.1,594.9L1734.9,598.8L1740.7,602.7L1746.4,606.7L1752.0,610.8L1757.6,614.9L1763.0,619.2L1768.4,623.5L1773.7,627.8L1778.9,632.3L1784.1,636.9L1789.1,641.5L1794.0,646.2L1798.0,650.2ZM1798.0,1056.0L1798.0,601.0L1796.5,600.0L1789.7,595.7L1782.9,591.5L1776.0,587.4L1769.1,583.4L1762.1,579.4L1755.1,575.6L1748.1,571.8L1741.0,568.1L1733.9,564.5L1726.7,560.9L1719.6,557.4L1712.4,554.0L1705.1,550.7L1697.9,547.4L1690.6,544.2L1683.3,541.1L1676.0,538.0L1668.6,535.0L1661.3,532.1L1653.9,529.3L1646.5,526.5L1639.1,523.7L1631.7,521.1L1624.3,518.5L1616.8,515.9L1609.4,513.4L1602.0,511.0L1594.5,508.6L1587.0,506.3L1579.6,504.1L1572.1,501.9L1564.6,499.7L1557.1,497.6L1549.6,495.6L1542.1,493.6L1534.6,491.6L1527.1,489.7L1519.6,487.9L1512.1,486.1L1504.6,484.4L1497.1,482.7L1489.6,481.0L1482.1,479.4L1474.6,477.9L1467.1,476.4L1459.6,474.9L1452.1,473.5L1444.6,472.1L1437.1,470.8L1429.6,469.5L1422.1,468.2L1414.6,467.0L1407.1,465.9L1399.6,464.8L1392.2,463.7L1384.7,462.6L1377.2,461.6L1369.7,460.7L1362.2,459.8L1354.7,458.9L1347.2,458.0L1339.8,457.2L1332.3,456.5L1324.8,455.8L1317.3,455.1L1309.9,454.4L1302.4,453.8L1294.9,453.2L1287.4,452.7L1280.0,452.2L1272.5,451.7L1265.0,451.3L1257.6,450.9L1250.1,450.5L1242.6,450.2L1235.1,449.9L1227.7,449.7L1220.2,449.5L1212.7,449.3L1205.3,449.2L1197.8,449.1L1190.3,449.0L1182.8,449.0L1175.4,449.0L1167.9,449.0L1160.4,449.1L1152.9,449.2L1145.4,449.3L1137.9,449.5L1130.5,449.7L1123.0,450.0L1115.5,450.2L1108.0,450.6L1100.5,450.9L1093.0,451.3L1085.5,451.7L1078.0,452.2L1070.5,452.7L1062.9,453.2L1055.4,453.8L1047.9,454.4L1040.4,455.1L1032.8,455.8L1025.3,456.5L1017.8,457.3L1010.2,458.1L1002.7,458.9L995.1,459.8L987.6,460.7L980.0,461.7L972.4,462.7L964.9,463.7L957.3,464.8L949.7,465.9L942.1,467.1L934.5,468.3L926.9,469.5L919.3,470.8L911.7,472.1L904.1,473.5L896.5,474.9L888.9,476.4L881.2,477.9L873.6,479.5L866.0,481.1L858.3,482.7L850.7,484.4L843.1,486.2L835.4,487.9L827.8,489.8L820.1,491.7L812.5,493.6L804.8,495.6L797.2,497.7L789.5,499.8L781.9,501.9L774.2,504.1L766.6,506.4L758.9,508.7L751.3,511.1L743.6,513.5L736.0,516.0L728.3,518.5L720.7,521.1L713.1,523.8L705.5,526.5L697.8,529.3L690.2,532.2L682.6,535.1L675.1,538.1L667.5,541.1L659.9,544.2L652.4,547.4L644.9,550.7L637.4,554.0L629.9,557.4L622.5,560.9L615.0,564.5L607.6,568.1L600.2,571.8L592.9,575.6L587.0,578.7L587.0,1056.0ZM1798.0,1056.0L587.0,1056.0L587.0,580.1L587.9,579.6L595.2,575.8L602.5,572.0L609.9,568.3L617.3,564.7L624.8,561.2L632.2,557.7L639.7,554.4L647.2,551.0L654.7,547.8L662.3,544.6L669.8,541.5L677.4,538.5L684.9,535.5L692.5,532.6L700.1,529.8L707.7,527.0L715.3,524.3L723.0,521.7L730.6,519.1L738.2,516.6L745.8,514.1L753.5,511.7L761.1,509.3L768.7,507.0L776.4,504.8L784.0,502.6L791.6,500.5L799.2,498.4L806.9,496.4L814.5,494.4L822.1,492.5L829.8,490.6L837.4,488.8L845.0,487.0L852.6,485.3L860.2,483.6L867.8,482.0L875.4,480.4L883.0,478.8L890.6,477.3L898.2,475.9L905.8,474.5L913.3,473.1L920.9,471.8L928.5,470.5L936.0,469.3L943.6,468.1L951.1,467.0L958.7,465.9L966.2,464.8L973.7,463.8L981.2,462.8L988.8,461.8L996.3,460.9L1003.8,460.0L1011.3,459.2L1018.8,458.4L1026.3,457.7L1033.8,456.9L1041.2,456.3L1048.7,455.6L1056.2,455.0L1063.7,454.4L1071.1,453.9L1078.6,453.4L1086.1,453.0L1093.5,452.5L1101.0,452.1L1108.4,451.8L1115.9,451.5L1123.3,451.2L1130.7,450.9L1138.2,450.7L1145.6,450.6L1153.0,450.4L1160.5,450.3L1167.9,450.2L1175.3,450.2L1182.8,450.2L1190.2,450.2L1197.6,450.3L1205.0,450.4L1212.4,450.5L1219.9,450.7L1227.3,450.9L1234.7,451.2L1242.1,451.5L1249.5,451.8L1257.0,452.1L1264.4,452.5L1271.8,452.9L1279.2,453.4L1286.7,453.9L1294.1,454.4L1301.5,455.0L1308.9,455.6L1316.4,456.2L1323.8,456.9L1331.2,457.6L1338.7,458.4L1346.1,459.2L1353.5,460.0L1361.0,460.9L1368.4,461.8L1375.9,462.7L1383.3,463.7L1390.7,464.7L1398.2,465.8L1405.7,466.9L1413.1,468.1L1420.6,469.2L1428.0,470.5L1435.5,471.8L1442.9,473.1L1450.4,474.4L1457.9,475.8L1465.4,477.3L1472.8,478.8L1480.3,480.3L1487.8,481.9L1495.2,483.5L1502.7,485.2L1510.2,486.9L1517.7,488.7L1525.1,490.5L1532.6,492.4L1540.1,494.3L1547.6,496.3L1555.0,498.3L1562.5,500.4L1570.0,502.5L1577.4,504.7L1584.9,507.0L1592.3,509.3L1599.8,511.6L1607.2,514.0L1614.6,516.5L1622.0,519.0L1629.5,521.6L1636.9,524.3L1644.3,527.0L1651.6,529.7L1659.0,532.6L1666.4,535.5L1673.7,538.5L1681.0,541.5L1688.3,544.6L1695.6,547.8L1702.8,551.0L1710.1,554.3L1717.3,557.7L1724.5,561.2L1731.6,564.7L1738.7,568.3L1745.8,572.0L1752.9,575.8L1759.9,579.6L1766.9,583.6L1773.8,587.6L1780.7,591.7L1787.5,595.9L1794.3,600.1L1798.0,602.5ZM1798.0,1056.0L1798.0,569.2L1793.9,567.2L1785.9,563.2L1777.8,559.3L1769.7,555.5L1761.6,551.8L1753.5,548.2L1745.4,544.7L1737.3,541.2L1729.1,537.8L1721.0,534.5L1712.8,531.3L1704.7,528.2L1696.5,525.1L1688.3,522.1L1680.2,519.1L1672.0,516.3L1663.8,513.5L1655.7,510.7L1647.5,508.1L1639.3,505.5L1631.2,502.9L1623.0,500.4L1614.9,498.0L1606.7,495.7L1598.6,493.4L1590.4,491.1L1582.3,489.0L1574.2,486.8L1566.1,484.8L1558.0,482.7L1549.9,480.8L1541.8,478.9L1533.7,477.0L1525.6,475.2L1517.5,473.5L1509.4,471.7L1501.4,470.1L1493.3,468.5L1485.3,466.9L1477.2,465.4L1469.2,464.0L1461.2,462.5L1453.1,461.2L1445.1,459.8L1437.1,458.6L1429.1,457.3L1421.1,456.1L1413.2,455.0L1405.2,453.9L1397.2,452.8L1389.2,451.8L1381.3,450.8L1373.3,449.8L1365.4,448.9L1357.4,448.1L1349.5,447.3L1341.6,446.5L1333.6,445.7L1325.7,445.0L1317.8,444.4L1309.9,443.7L1301.9,443.2L1294.0,442.6L1286.1,442.1L1278.2,441.6L1270.3,441.2L1262.4,440.8L1254.5,440.4L1246.6,440.1L1238.7,439.8L1230.8,439.6L1222.9,439.3L1215.0,439.2L1207.2,439.0L1199.3,438.9L1191.4,438.8L1183.5,438.8L1175.6,438.8L1167.7,438.8L1159.8,438.9L1151.9,439.0L1144.0,439.2L1136.1,439.4L1128.2,439.6L1120.2,439.8L1112.3,440.1L1104.4,440.4L1096.5,440.8L1088.5,441.2L1080.6,441.6L1072.7,442.1L1064.7,442.6L1056.8,443.2L1048.8,443.8L1040.8,444.4L1032.9,445.1L1024.9,445.8L1016.9,446.5L1008.9,447.3L1000.9,448.1L992.9,449.0L984.8,449.9L976.8,450.8L968.8,451.8L960.7,452.8L952.7,453.9L944.6,455.0L936.5,456.2L928.4,457.4L920.3,458.6L912.2,459.9L904.1,461.2L896.0,462.6L887.9,464.0L879.7,465.5L871.5,467.0L863.4,468.5L855.2,470.1L847.0,471.8L838.8,473.5L830.6,475.3L822.3,477.1L814.1,478.9L805.8,480.8L797.6,482.8L789.3,484.8L781.0,486.9L772.7,489.0L764.4,491.2L756.1,493.4L747.8,495.7L739.5,498.1L731.1,500.5L722.8,503.0L714.4,505.5L706.0,508.1L697.7,510.8L689.3,513.5L680.9,516.3L672.5,519.2L664.1,522.1L655.7,525.1L647.3,528.2L638.9,531.4L630.4,534.6L622.0,537.9L613.6,541.3L605.2,544.7L596.8,548.3L588.4,551.9L587.0,552.5L587.0,1056.0ZM1798.0,1056.0L587.0,1056.0L587.0,553.9L590.8,552.2L599.2,548.6L607.6,545.1L616.0,541.6L624.4,538.3L632.8,535.0L641.2,531.8L649.6,528.7L658.0,525.6L666.4,522.6L674.8,519.7L683.2,516.9L691.6,514.1L699.9,511.4L708.3,508.7L716.7,506.1L725.0,503.6L733.3,501.2L741.7,498.8L750.0,496.4L758.3,494.1L766.6,491.9L774.8,489.8L783.1,487.6L791.4,485.6L799.6,483.6L807.8,481.7L816.1,479.8L824.3,477.9L832.5,476.1L840.7,474.4L848.8,472.7L857.0,471.1L865.1,469.5L873.3,467.9L881.4,466.4L889.5,465.0L897.6,463.6L905.7,462.2L913.8,460.9L921.9,459.6L929.9,458.4L938.0,457.2L946.0,456.1L954.0,455.0L962.0,453.9L970.0,452.9L978.0,451.9L986.0,451.0L994.0,450.1L1002.0,449.3L1009.9,448.4L1017.9,447.7L1025.8,446.9L1033.7,446.2L1041.7,445.6L1049.6,444.9L1057.5,444.4L1065.4,443.8L1073.3,443.3L1081.2,442.8L1089.1,442.4L1096.9,442.0L1104.8,441.6L1112.7,441.3L1120.6,441.0L1128.4,440.8L1136.3,440.5L1144.1,440.4L1152.0,440.2L1159.9,440.1L1167.7,440.0L1175.6,440.0L1183.4,440.0L1191.2,440.0L1199.1,440.1L1206.9,440.2L1214.8,440.3L1222.6,440.5L1230.5,440.7L1238.3,441.0L1246.2,441.3L1254.0,441.6L1261.8,442.0L1269.7,442.4L1277.6,442.8L1285.4,443.3L1293.3,443.8L1301.1,444.3L1309.0,444.9L1316.9,445.5L1324.7,446.2L1332.6,446.9L1340.5,447.6L1348.4,448.4L1356.3,449.2L1364.2,450.1L1372.1,451.0L1380.0,451.9L1387.9,452.9L1395.8,453.9L1403.8,454.9L1411.7,456.0L1419.6,457.2L1427.6,458.3L1435.6,459.6L1443.5,460.8L1451.5,462.2L1459.5,463.5L1467.5,464.9L1475.5,466.4L1483.5,467.9L1491.5,469.4L1499.5,471.0L1507.5,472.6L1515.6,474.3L1523.6,476.1L1531.7,477.8L1539.8,479.7L1547.8,481.6L1555.9,483.5L1564.0,485.5L1572.1,487.6L1580.2,489.7L1588.3,491.8L1596.4,494.1L1604.5,496.3L1612.7,498.7L1620.8,501.1L1628.9,503.5L1637.1,506.1L1645.2,508.7L1653.4,511.3L1661.5,514.0L1669.7,516.8L1677.8,519.6L1686.0,522.6L1694.2,525.6L1702.3,528.6L1710.5,531.7L1718.6,535.0L1726.8,538.2L1734.9,541.6L1743.0,545.0L1751.2,548.6L1759.3,552.2L1767.4,555.8L1775.5,559.6L1783.5,563.5L1791.6,567.4L1798.0,570.6ZM1798.0,1056.0L1798.0,544.5L1793.6,542.6L1784.5,538.9L1775.5,535.2L1766.5,531.7L1757.5,528.2L1748.5,524.8L1739.5,521.5L1730.5,518.3L1721.5,515.1L1712.6,512.1L1703.7,509.1L1694.7,506.2L1685.8,503.3L1676.9,500.5L1668.1,497.8L1659.2,495.2L1650.4,492.6L1641.5,490.1L1632.7,487.6L1623.9,485.3L1615.1,482.9L1606.4,480.7L1597.6,478.5L1588.9,476.4L1580.2,474.3L1571.5,472.2L1562.8,470.3L1554.1,468.4L1545.5,466.5L1536.8,464.7L1528.2,462.9L1519.6,461.2L1511.0,459.6L1502.5,458.0L1493.9,456.4L1485.4,454.9L1476.8,453.5L1468.3,452.1L1459.8,450.7L1451.3,449.4L1442.8,448.1L1434.4,446.9L1425.9,445.7L1417.5,444.6L1409.0,443.5L1400.6,442.5L1392.2,441.5L1383.8,440.5L1375.4,439.6L1367.0,438.7L1358.6,437.9L1350.3,437.1L1341.9,436.3L1333.5,435.6L1325.2,434.9L1316.9,434.3L1308.5,433.7L1300.2,433.2L1291.9,432.6L1283.6,432.1L1275.3,431.7L1267.0,431.3L1258.7,430.9L1250.4,430.6L1242.1,430.3L1233.8,430.0L1225.5,429.8L1217.2,429.6L1208.9,429.5L1200.6,429.4L1192.4,429.3L1184.1,429.3L1175.8,429.3L1167.5,429.3L1159.2,429.4L1150.9,429.5L1142.6,429.7L1134.3,429.8L1126.0,430.1L1117.7,430.3L1109.4,430.6L1101.0,430.9L1092.7,431.3L1084.4,431.7L1076.0,432.2L1067.7,432.7L1059.3,433.2L1051.0,433.7L1042.6,434.3L1034.2,435.0L1025.8,435.7L1017.4,436.4L1009.0,437.1L1000.6,437.9L992.1,438.8L983.7,439.6L975.2,440.6L966.7,441.5L958.2,442.5L949.7,443.6L941.2,444.7L932.7,445.8L924.1,447.0L915.5,448.2L907.0,449.5L898.4,450.8L889.7,452.1L881.1,453.5L872.5,455.0L863.8,456.5L855.1,458.1L846.4,459.7L837.7,461.3L829.0,463.0L820.2,464.8L811.4,466.6L802.6,468.4L793.8,470.3L785.0,472.3L776.1,474.3L767.2,476.4L758.3,478.6L749.4,480.8L740.5,483.0L731.5,485.3L722.5,487.7L713.5,490.2L704.5,492.7L695.4,495.2L686.4,497.9L677.3,500.6L668.2,503.4L659.0,506.2L649.9,509.1L640.7,512.1L631.5,515.2L622.3,518.3L613.1,521.6L603.8,524.9L594.5,528.3L587.0,531.1L587.0,1056.0ZM1798.0,1056.0L587.0,1056.0L587.0,532.4L587.7,532.1L597.0,528.7L606.2,525.3L615.5,522.0L624.7,518.8L633.9,515.7L643.1,512.7L652.2,509.7L661.4,506.8L670.5,504.0L679.6,501.2L688.7,498.5L697.7,495.9L706.7,493.3L715.7,490.8L724.7,488.4L733.7,486.1L742.6,483.8L751.5,481.5L760.4,479.3L769.3,477.2L778.2,475.1L787.0,473.1L795.8,471.2L804.6,469.3L813.4,467.4L822.1,465.7L830.8,463.9L839.5,462.2L848.2,460.6L856.9,459.0L865.5,457.5L874.2,456.0L882.8,454.5L891.3,453.1L899.9,451.8L908.5,450.5L917.0,449.2L925.5,448.0L934.0,446.9L942.5,445.7L951.0,444.7L959.5,443.6L967.9,442.6L976.3,441.6L984.7,440.7L993.1,439.9L1001.5,439.0L1009.9,438.2L1018.3,437.5L1026.6,436.8L1035.0,436.1L1043.3,435.4L1051.6,434.8L1060.0,434.3L1068.3,433.8L1076.6,433.3L1084.9,432.8L1093.2,432.4L1101.4,432.1L1109.7,431.7L1118.0,431.4L1126.2,431.2L1134.5,430.9L1142.8,430.8L1151.0,430.6L1159.3,430.5L1167.5,430.4L1175.8,430.4L1184.0,430.4L1192.2,430.4L1200.5,430.5L1208.7,430.6L1217.0,430.8L1225.2,430.9L1233.4,431.2L1241.7,431.4L1249.9,431.7L1258.2,432.0L1266.4,432.4L1274.7,432.8L1283.0,433.3L1291.2,433.7L1299.5,434.3L1307.8,434.8L1316.0,435.4L1324.3,436.0L1332.6,436.7L1340.9,437.4L1349.2,438.2L1357.6,439.0L1365.9,439.8L1374.2,440.7L1382.6,441.6L1390.9,442.6L1399.3,443.6L1407.6,444.6L1416.0,445.7L1424.4,446.8L1432.8,448.0L1441.3,449.2L1449.7,450.4L1458.2,451.7L1466.6,453.1L1475.1,454.5L1483.6,455.9L1492.1,457.4L1500.6,458.9L1509.2,460.5L1517.7,462.2L1526.3,463.8L1534.9,465.6L1543.5,467.4L1552.1,469.2L1560.8,471.1L1569.4,473.1L1578.1,475.1L1586.8,477.1L1595.5,479.3L1604.2,481.4L1613.0,483.7L1621.7,486.0L1630.5,488.3L1639.3,490.8L1648.1,493.3L1656.9,495.8L1665.8,498.4L1674.6,501.1L1683.5,503.9L1692.4,506.7L1701.3,509.6L1710.2,512.6L1719.2,515.6L1728.1,518.8L1737.1,522.0L1746.1,525.3L1755.1,528.6L1764.1,532.1L1773.1,535.6L1782.1,539.2L1791.1,542.9L1798.0,545.8Z" fill="url(#ringg)" fill-rule="evenodd"/><path d="M814.7,454.7L815.9,455.3L817.1,455.9L818.3,456.5L819.5,457.0L820.6,457.6L821.8,458.2L823.0,458.8L824.2,459.4L825.4,460.0L826.6,460.6L827.9,461.1L829.1,461.7L830.3,462.3L831.5,462.9L832.8,463.5L834.0,464.1L835.2,464.7L836.5,465.3L837.7,466.0L839.0,466.6L840.2,467.2L841.5,467.8L842.8,468.4L844.1,469.0L845.3,469.7L846.6,470.3L847.9,470.9L849.2,471.5L850.5,472.2L851.8,472.8L853.1,473.4L854.4,474.1L855.7,474.7L857.0,475.4L858.4,476.0L859.7,476.7L861.0,477.3L862.4,478.0L863.7,478.6L865.1,479.3L866.4,479.9L867.8,480.6L869.1,481.3L870.5,481.9L871.9,482.6L873.3,483.3L874.7,484.0L876.0,484.6L877.4,485.3L878.8,486.0L880.3,486.7L881.7,487.4L883.1,488.1L884.5,488.8L885.9,489.5L887.4,490.2L888.8,490.9L890.3,491.6L891.7,492.3L893.2,493.0L894.6,493.7L896.1,494.4L897.6,495.1L899.1,495.9L900.5,496.6L902.0,497.3L903.5,498.0L905.0,498.8L906.5,499.5L908.1,500.3L909.6,501.0L911.1,501.7L912.6,502.5L914.2,503.2L915.7,504.0L917.3,504.8L918.8,505.5L920.4,506.3L922.0,507.0L923.6,507.8L925.1,508.6L926.7,509.4L928.3,510.1L929.9,510.9L931.5,511.7L933.2,512.5L934.8,513.3L936.4,514.1L938.1,514.9L939.7,515.7L941.3,516.5L943.0,517.3L944.7,518.1L946.3,518.9L948.0,519.7L949.7,520.6L951.4,521.4L953.1,522.2L954.8,523.1L956.5,523.9L958.2,524.7L960.0,525.6L961.7,526.4L963.4,527.3L965.2,528.1L967.0,529.0L968.7,529.8L970.5,530.7L972.3,531.6L974.1,532.4L975.9,533.3L977.7,534.2L979.5,535.1L981.3,536.0L983.1,536.9L985.0,537.8L986.8,538.7L988.7,539.6L990.5,540.5L992.4,541.4L994.3,542.3L996.1,543.2L998.0,544.1L999.9,545.1L1001.9,546.0L1003.8,546.9L1005.7,547.9L1007.6,548.8L1009.6,549.8L1011.5,550.7L1013.5,551.7L1015.5,552.6L1017.5,553.6L1019.4,554.6L1021.4,555.6L1023.4,556.5L1025.5,557.5L1027.5,558.5L1029.5,559.5L1031.6,560.5L1033.6,561.5L1035.7,562.5L1037.8,563.5L1039.9,564.5L1041.9,565.6L1044.0,566.6L1046.2,567.6L1048.3,568.6L1050.4,569.7L1052.6,570.7L1054.7,571.8L1056.9,572.8L1059.0,573.9L1061.2,575.0L1063.4,576.0L1065.6,577.1L1067.8,578.2L1070.1,579.3L1072.3,580.4L1074.6,581.5L1076.8,582.6L1079.1,583.7L1081.4,584.8L1083.7,585.9L1086.0,587.0L1088.3,588.2L1090.6,589.3L1092.9,590.4L1095.3,591.6L1097.7,592.7L1100.0,593.9L1102.4,595.0L1104.8,596.2L1107.2,597.4L1109.6,598.6L1112.1,599.8L1114.5,601.0L1117.0,602.1L1119.4,603.4L1121.9,604.6L1124.4,605.8L1126.9,607.0L1129.4,608.2L1132.0,609.5L1134.5,610.7L1137.1,612.0L1139.7,613.2L1142.3,614.5L1144.9,615.7L1147.5,617.0L1150.1,618.3L1152.7,619.6L1155.4,620.9L1158.1,622.2L1160.7,623.5L1163.4,624.8L1166.2,626.1L1168.9,627.5L1171.6,628.8L1174.4,630.1L1177.1,631.5L1179.9,632.9L1182.7,634.2L1185.5,635.6L1188.4,637.0L1191.2,638.4L1194.1,639.8L1197.0,641.2L1199.9,642.6L1202.8,644.0L1205.7,645.4L1208.6,646.9L1211.6,648.3L1214.6,649.7L1217.6,651.2L1220.6,652.7L1223.6,654.2L1226.6,655.6L1229.7,657.1L1232.8,658.6L1235.9,660.1L1239.0,661.7L1242.1,663.2L1245.3,664.7L1248.4,666.3L1251.6,667.8L1254.8,669.4L1258.0,670.9L1261.3,672.5L1264.5,674.1L1267.8,675.7L1271.1,677.3L1274.4,678.9L1277.8,680.6L1281.1,682.2L1284.5,683.8L1287.9,685.5L1291.3,687.2L1294.7,688.8L1298.2,690.5L1301.7,692.2L1305.2,693.9L1308.7,695.7L1312.2,697.4L1315.8,699.1L1319.4,700.9L1323.0,702.6L1326.6,704.4L1330.3,706.2L1333.9,708.0L1337.6,709.8L1341.4,711.6L1345.1,713.4L1348.9,715.3L1352.7,717.1L1356.5,719.0L1360.3,720.8L1364.2,722.7L1368.1,724.6L1372.0,726.5L1375.9,728.4L1379.9,730.4L1383.9,732.3L1387.9,734.3L1391.9,736.3L1396.0,738.2L1400.1,740.2L1404.2,742.2L1408.4,744.3L1412.5,746.3L1416.7,748.4L1421.0,750.4L1425.2,752.5L1429.5,754.6L1433.8,756.7L1438.2,758.8L1442.5,760.9L1447.0,763.1L1451.4,765.3L1455.9,767.4L1460.3,769.6L1464.9,771.8L1469.4,774.1L1474.0,776.3L1478.6,778.5L1483.3,780.8L1488.0,783.1L1492.7,785.4L1497.5,787.7L1502.2,790.1L1507.1,792.4L1511.9,794.8L1516.8,797.2L1521.7,799.6L1526.7,802.0L1531.7,804.4L1536.7,806.9L1541.8,809.3L1546.9,811.8L1552.0,814.3L1557.2,816.9L1562.4,819.4L1567.7,822.0L1573.0,824.6L1578.3,827.2L1583.7,829.8L1589.1,832.4L1594.6,835.1L1600.1,837.8L1605.6,840.5L1611.2,843.2L1616.8,845.9L1622.5,848.7L1628.2,851.5L1634.0,854.3L1639.8,857.1L1645.6,860.0L1651.5,862.9L1657.4,865.8L1663.4,868.7L1669.5,871.6L1675.5,874.6L1681.7,877.6L1687.9,880.6L1694.1,883.6L1700.4,886.7L1706.7,889.8L1713.1,892.9L1719.5,896.0L1726.0,899.2L1732.6,902.4L1739.2,905.6L1745.8,908.8L1752.5,912.1L1759.3,915.4L1766.1,918.7L1773.0,922.1L1779.9,925.5L1786.9,928.9L1794.0,932.3L1798.0,934.3L1798.0,937.0L1792.3,934.2L1785.2,930.7L1778.2,927.3L1771.2,923.9L1764.3,920.6L1757.5,917.2L1750.7,913.9L1744.0,910.6L1737.3,907.4L1730.7,904.2L1724.2,901.0L1717.7,897.8L1711.2,894.6L1704.8,891.5L1698.5,888.4L1692.2,885.4L1685.9,882.3L1679.7,879.3L1673.6,876.3L1667.5,873.3L1661.4,870.4L1655.4,867.4L1649.5,864.5L1643.6,861.7L1637.7,858.8L1631.9,856.0L1626.1,853.1L1620.4,850.4L1614.7,847.6L1609.1,844.8L1603.5,842.1L1597.9,839.4L1592.4,836.7L1586.9,834.0L1581.5,831.4L1576.1,828.8L1570.8,826.2L1565.5,823.6L1560.2,821.0L1555.0,818.4L1549.8,815.9L1544.6,813.4L1539.5,810.9L1534.4,808.4L1529.4,806.0L1524.4,803.5L1519.4,801.1L1514.5,798.7L1509.6,796.3L1504.7,793.9L1499.9,791.6L1495.1,789.2L1490.3,786.9L1485.6,784.6L1480.9,782.3L1476.2,780.0L1471.6,777.8L1467.0,775.5L1462.4,773.3L1457.9,771.1L1453.4,768.9L1448.9,766.7L1444.5,764.5L1440.0,762.4L1435.7,760.3L1431.3,758.1L1427.0,756.0L1422.7,753.9L1418.4,751.8L1414.2,749.8L1410.0,747.7L1405.8,745.7L1401.6,743.6L1397.5,741.6L1393.4,739.6L1389.3,737.6L1385.3,735.7L1381.2,733.7L1377.2,731.8L1373.3,729.8L1369.3,727.9L1365.4,726.0L1361.5,724.1L1357.6,722.2L1353.8,720.3L1350.0,718.4L1346.2,716.6L1342.4,714.8L1338.6,712.9L1334.9,711.1L1331.2,709.3L1327.5,707.5L1323.8,705.7L1320.2,703.9L1316.6,702.2L1313.0,700.4L1309.4,698.7L1305.9,697.0L1302.4,695.2L1298.8,693.5L1295.4,691.8L1291.9,690.1L1288.4,688.5L1285.0,686.8L1281.6,685.1L1278.2,683.5L1274.9,681.8L1271.5,680.2L1268.2,678.6L1264.9,677.0L1261.6,675.4L1258.4,673.8L1255.1,672.2L1251.9,670.6L1248.7,669.0L1245.5,667.5L1242.3,665.9L1239.1,664.4L1236.0,662.9L1232.9,661.4L1229.8,659.8L1226.7,658.3L1223.6,656.8L1220.6,655.4L1217.6,653.9L1214.5,652.4L1211.5,650.9L1208.6,649.5L1205.6,648.0L1202.6,646.6L1199.7,645.2L1196.8,643.8L1193.9,642.3L1191.0,640.9L1188.1,639.5L1185.3,638.1L1182.5,636.8L1179.6,635.4L1176.8,634.0L1174.0,632.7L1171.3,631.3L1168.5,629.9L1165.7,628.6L1163.0,627.3L1160.3,626.0L1157.6,624.6L1154.9,623.3L1152.2,622.0L1149.6,620.7L1146.9,619.4L1144.3,618.1L1141.7,616.9L1139.1,615.6L1136.5,614.3L1133.9,613.1L1131.3,611.8L1128.8,610.6L1126.2,609.3L1123.7,608.1L1121.2,606.9L1118.7,605.7L1116.2,604.4L1113.7,603.2L1111.3,602.0L1108.8,600.8L1106.4,599.6L1103.9,598.5L1101.5,597.3L1099.1,596.1L1096.7,595.0L1094.4,593.8L1092.0,592.6L1089.6,591.5L1087.3,590.3L1085.0,589.2L1082.6,588.1L1080.3,587.0L1078.0,585.8L1075.8,584.7L1073.5,583.6L1071.2,582.5L1069.0,581.4L1066.7,580.3L1064.5,579.2L1062.3,578.1L1060.1,577.1L1057.9,576.0L1055.7,574.9L1053.5,573.9L1051.3,572.8L1049.2,571.7L1047.0,570.7L1044.9,569.7L1042.8,568.6L1040.6,567.6L1038.5,566.6L1036.4,565.5L1034.3,564.5L1032.3,563.5L1030.2,562.5L1028.1,561.5L1026.1,560.5L1024.0,559.5L1022.0,558.5L1020.0,557.5L1018.0,556.5L1016.0,555.6L1014.0,554.6L1012.0,553.6L1010.0,552.7L1008.0,551.7L1006.1,550.7L1004.1,549.8L1002.2,548.8L1000.3,547.9L998.3,547.0L996.4,546.0L994.5,545.1L992.6,544.2L990.7,543.2L988.9,542.3L987.0,541.4L985.1,540.5L983.3,539.6L981.4,538.7L979.6,537.8L977.7,536.9L975.9,536.0L974.1,535.1L972.3,534.3L970.5,533.4L968.7,532.5L966.9,531.6L965.1,530.8L963.4,529.9L961.6,529.0L959.8,528.2L958.1,527.3L956.4,526.5L954.6,525.6L952.9,524.8L951.2,524.0L949.5,523.1L947.8,522.3L946.1,521.5L944.4,520.6L942.7,519.8L941.0,519.0L939.4,518.2L937.7,517.4L936.0,516.6L934.4,515.8L932.8,515.0L931.1,514.2L929.5,513.4L927.9,512.6L926.3,511.8L924.6,511.0L923.0,510.2L921.5,509.5L919.9,508.7L918.3,507.9L916.7,507.1L915.1,506.4L913.6,505.6L912.0,504.9L910.5,504.1L908.9,503.4L907.4,502.6L905.9,501.9L904.3,501.1L902.8,500.4L901.3,499.6L899.8,498.9L898.3,498.2L896.8,497.4L895.3,496.7L893.8,496.0L892.3,495.3L890.9,494.5L889.4,493.8L887.9,493.1L886.5,492.4L885.0,491.7L883.6,491.0L882.2,490.3L880.7,489.6L879.3,488.9L877.9,488.2L876.5,487.5L875.1,486.8L873.6,486.1L872.2,485.5L870.9,484.8L869.5,484.1L868.1,483.4L866.7,482.8L865.3,482.1L864.0,481.4L862.6,480.8L861.2,480.1L859.9,479.4L858.5,478.8L857.2,478.1L855.9,477.5L854.5,476.8L853.2,476.2L851.9,475.5L850.6,474.9L849.2,474.2L847.9,473.6L846.6,473.0L845.3,472.3L844.0,471.7L842.7,471.1L841.5,470.4L840.2,469.8L838.9,469.2L837.6,468.6L836.4,468.0L835.1,467.3L833.9,466.7L832.6,466.1L831.3,465.5L830.1,464.9L828.9,464.3L827.6,463.7L826.4,463.1L825.2,462.5L824.0,461.9L822.7,461.3L821.5,460.7L820.3,460.1L819.1,459.5L817.9,459.0L816.7,458.4L815.5,457.8L814.3,457.2L813.2,456.6L812.0,456.1L810.8,455.5ZM587.0,843.9L587.1,843.9L593.7,841.5L600.2,839.1L606.6,836.7L613.1,834.3L619.4,832.0L625.8,829.7L632.1,827.3L638.3,825.0L644.5,822.8L650.7,820.5L656.9,818.2L662.9,816.0L669.0,813.7L675.0,811.5L681.0,809.3L686.9,807.1L692.8,805.0L698.7,802.8L704.5,800.7L710.3,798.5L716.1,796.4L721.8,794.3L727.4,792.2L733.1,790.2L738.7,788.1L744.3,786.0L749.8,784.0L755.3,782.0L760.8,780.0L766.2,778.0L771.6,776.0L777.0,774.0L782.3,772.0L787.7,770.1L792.9,768.1L798.2,766.2L803.4,764.3L808.6,762.4L813.7,760.5L818.8,758.6L823.9,756.7L829.0,754.9L834.0,753.0L839.0,751.2L844.0,749.3L848.9,747.5L853.8,745.7L858.7,743.9L863.6,742.1L868.4,740.3L873.2,738.6L878.0,736.8L882.7,735.1L887.4,733.3L892.1,731.6L896.8,729.9L901.4,728.2L906.0,726.5L910.6,724.8L915.2,723.1L919.7,721.4L924.2,719.8L928.7,718.1L933.2,716.5L937.6,714.9L942.0,713.2L946.4,711.6L950.7,710.0L955.1,708.4L959.4,706.8L963.7,705.3L968.0,703.7L972.2,702.1L976.4,700.6L980.6,699.0L984.8,697.5L988.9,696.0L993.1,694.4L997.2,692.9L1001.3,691.4L1005.3,689.9L1009.4,688.4L1013.4,687.0L1017.4,685.5L1021.4,684.0L1025.3,682.6L1029.3,681.1L1033.2,679.7L1037.1,678.2L1041.0,676.8L1044.8,675.4L1048.7,674.0L1052.5,672.6L1056.3,671.2L1060.1,669.8L1063.8,668.4L1067.6,667.0L1071.3,665.6L1075.0,664.3L1078.7,662.9L1082.3,661.6L1086.0,660.2L1089.6,658.9L1093.2,657.6L1096.8,656.2L1100.4,654.9L1103.9,653.6L1107.5,652.3L1111.0,651.0L1114.5,649.7L1118.0,648.4L1121.5,647.2L1124.9,645.9L1128.4,644.6L1131.8,643.4L1135.2,642.1L1138.6,640.9L1141.9,639.6L1145.3,638.4L1148.6,637.2L1152.0,635.9L1155.3,634.7L1158.6,633.5L1161.8,632.3L1165.1,631.1L1168.3,629.9L1171.6,628.7L1174.8,627.5L1178.0,626.4L1181.2,625.2L1184.3,624.0L1187.5,622.9L1190.6,621.7L1193.7,620.6L1196.8,619.4L1199.9,618.3L1203.0,617.1L1206.1,616.0L1209.1,614.9L1212.2,613.8L1215.2,612.7L1218.2,611.5L1221.2,610.4L1224.2,609.3L1227.2,608.3L1230.1,607.2L1233.1,606.1L1236.0,605.0L1238.9,603.9L1241.8,602.9L1244.7,601.8L1247.6,600.7L1250.4,599.7L1253.3,598.6L1256.1,597.6L1259.0,596.5L1261.8,595.5L1264.6,594.5L1267.4,593.4L1270.2,592.4L1272.9,591.4L1275.7,590.4L1278.4,589.4L1281.1,588.4L1283.9,587.4L1286.6,586.4L1289.3,585.4L1291.9,584.4L1294.6,583.4L1297.3,582.4L1299.9,581.5L1302.6,580.5L1305.2,579.5L1307.8,578.6L1310.4,577.6L1313.0,576.7L1315.6,575.7L1318.1,574.8L1320.7,573.8L1323.3,572.9L1325.8,571.9L1328.3,571.0L1330.8,570.1L1333.3,569.2L1335.8,568.2L1338.3,567.3L1340.8,566.4L1343.3,565.5L1345.7,564.6L1348.2,563.7L1350.6,562.8L1353.0,561.9L1355.4,561.0L1357.8,560.1L1360.2,559.3L1362.6,558.4L1365.0,557.5L1367.4,556.6L1369.7,555.8L1372.1,554.9L1374.4,554.0L1376.7,553.2L1379.1,552.3L1381.4,551.5L1383.7,550.6L1386.0,549.8L1388.2,548.9L1390.5,548.1L1392.8,547.3L1395.0,546.4L1397.3,545.6L1399.5,544.8L1401.8,544.0L1404.0,543.2L1406.2,542.3L1408.4,541.5L1410.6,540.7L1412.8,539.9L1414.9,539.1L1417.1,538.3L1419.3,537.5L1421.4,536.7L1423.6,535.9L1425.7,535.2L1427.8,534.4L1430.0,533.6L1432.1,532.8L1434.2,532.0L1436.3,531.3L1438.3,530.5L1440.4,529.7L1442.5,529.0L1444.6,528.2L1446.6,527.5L1448.7,526.7L1450.7,526.0L1452.7,525.2L1454.8,524.5L1456.8,523.7L1458.8,523.0L1460.8,522.2L1462.8,521.5L1464.8,520.8L1466.8,520.0L1468.7,519.3L1470.7,518.6L1472.7,517.9L1474.6,517.2L1476.6,516.4L1478.5,515.7L1480.4,515.0L1482.3,514.3L1484.3,513.6L1486.2,512.9L1488.1,512.2L1490.0,511.5L1491.8,510.8L1493.7,510.1L1495.6,509.4L1497.5,508.7L1499.3,508.0L1501.2,507.4L1503.0,506.7L1504.9,506.0L1506.7,505.3L1508.5,504.7L1510.4,504.0L1512.2,503.3L1514.0,502.7L1515.8,502.0L1517.6,501.3L1519.4,500.7L1521.2,500.0L1522.9,499.4L1524.7,498.7L1526.5,498.1L1528.2,497.4L1530.0,496.8L1531.7,496.1L1533.5,495.5L1535.2,494.8L1536.9,494.2L1538.7,493.6L1540.4,492.9L1542.1,492.3L1543.8,491.7L1545.5,491.1L1547.2,490.4L1548.9,489.8L1550.5,489.2L1552.2,488.6L1553.9,488.0L1555.6,487.4L1557.2,486.7L1558.9,486.1L1560.5,485.5L1562.2,484.9L1563.8,484.3L1565.4,483.7L1567.0,483.1L1568.7,482.5L1570.3,481.9L1571.9,481.3L1573.5,480.7L1575.1,480.2L1576.7,479.6L1578.3,479.0L1579.9,478.4L1581.4,477.8L1583.0,477.2L1584.6,476.7L1586.1,476.1L1587.7,475.5L1589.2,474.9L1590.8,474.4L1592.3,473.8L1593.9,473.2L1595.4,472.7L1596.9,472.1L1598.4,471.6L1600.0,471.0L1601.5,470.4L1603.0,469.9L1604.5,469.3L1606.0,468.8L1607.5,468.2L1611.7,469.2L1610.2,469.8L1608.7,470.3L1607.2,470.9L1605.7,471.4L1604.2,472.0L1602.7,472.6L1601.2,473.1L1599.6,473.7L1598.1,474.2L1596.5,474.8L1595.0,475.4L1593.5,476.0L1591.9,476.5L1590.3,477.1L1588.8,477.7L1587.2,478.3L1585.6,478.8L1584.0,479.4L1582.4,480.0L1580.9,480.6L1579.3,481.2L1577.7,481.8L1576.0,482.4L1574.4,483.0L1572.8,483.6L1571.2,484.2L1569.6,484.8L1567.9,485.4L1566.3,486.0L1564.6,486.6L1563.0,487.2L1561.3,487.8L1559.7,488.4L1558.0,489.0L1556.3,489.6L1554.6,490.2L1553.0,490.9L1551.3,491.5L1549.6,492.1L1547.9,492.7L1546.1,493.4L1544.4,494.0L1542.7,494.6L1541.0,495.3L1539.3,495.9L1537.5,496.6L1535.8,497.2L1534.0,497.8L1532.3,498.5L1530.5,499.1L1528.7,499.8L1526.9,500.4L1525.2,501.1L1523.4,501.8L1521.6,502.4L1519.8,503.1L1518.0,503.7L1516.2,504.4L1514.3,505.1L1512.5,505.8L1510.7,506.4L1508.8,507.1L1507.0,507.8L1505.1,508.5L1503.3,509.2L1501.4,509.8L1499.5,510.5L1497.7,511.2L1495.8,511.9L1493.9,512.6L1492.0,513.3L1490.1,514.0L1488.2,514.7L1486.2,515.4L1484.3,516.1L1482.4,516.9L1480.4,517.6L1478.5,518.3L1476.5,519.0L1474.6,519.7L1472.6,520.5L1470.6,521.2L1468.6,521.9L1466.6,522.6L1464.6,523.4L1462.6,524.1L1460.6,524.9L1458.6,525.6L1456.6,526.4L1454.5,527.1L1452.5,527.9L1450.4,528.6L1448.4,529.4L1446.3,530.1L1444.2,530.9L1442.1,531.7L1440.0,532.4L1437.9,533.2L1435.8,534.0L1433.7,534.8L1431.6,535.6L1429.4,536.3L1427.3,537.1L1425.1,537.9L1423.0,538.7L1420.8,539.5L1418.6,540.3L1416.5,541.1L1414.3,541.9L1412.1,542.7L1409.9,543.5L1407.6,544.4L1405.4,545.2L1403.2,546.0L1400.9,546.8L1398.7,547.7L1396.4,548.5L1394.1,549.3L1391.9,550.2L1389.6,551.0L1387.3,551.9L1385.0,552.7L1382.7,553.6L1380.3,554.4L1378.0,555.3L1375.7,556.1L1373.3,557.0L1370.9,557.9L1368.6,558.8L1366.2,559.6L1363.8,560.5L1361.4,561.4L1359.0,562.3L1356.5,563.2L1354.1,564.1L1351.7,565.0L1349.2,565.9L1346.8,566.8L1344.3,567.7L1341.8,568.6L1339.3,569.5L1336.8,570.4L1334.3,571.4L1331.8,572.3L1329.2,573.2L1326.7,574.2L1324.1,575.1L1321.6,576.1L1319.0,577.0L1316.4,578.0L1313.8,578.9L1311.2,579.9L1308.6,580.8L1305.9,581.8L1303.3,582.8L1300.6,583.8L1298.0,584.7L1295.3,585.7L1292.6,586.7L1289.9,587.7L1287.2,588.7L1284.5,589.7L1281.7,590.7L1279.0,591.7L1276.2,592.8L1273.4,593.8L1270.6,594.8L1267.8,595.8L1265.0,596.9L1262.2,597.9L1259.4,598.9L1256.5,600.0L1253.7,601.1L1250.8,602.1L1247.9,603.2L1245.0,604.2L1242.1,605.3L1239.2,606.4L1236.2,607.5L1233.3,608.6L1230.3,609.6L1227.3,610.7L1224.3,611.8L1221.3,613.0L1218.3,614.1L1215.3,615.2L1212.2,616.3L1209.2,617.4L1206.1,618.6L1203.0,619.7L1199.9,620.8L1196.8,622.0L1193.7,623.1L1190.5,624.3L1187.3,625.5L1184.2,626.6L1181.0,627.8L1177.8,629.0L1174.5,630.2L1171.3,631.4L1168.1,632.6L1164.8,633.8L1161.5,635.0L1158.2,636.2L1154.9,637.4L1151.6,638.6L1148.2,639.9L1144.8,641.1L1141.5,642.4L1138.1,643.6L1134.7,644.9L1131.2,646.1L1127.8,647.4L1124.3,648.7L1120.8,650.0L1117.3,651.2L1113.8,652.5L1110.3,653.8L1106.7,655.1L1103.2,656.5L1099.6,657.8L1096.0,659.1L1092.4,660.4L1088.7,661.8L1085.1,663.1L1081.4,664.5L1077.7,665.8L1074.0,667.2L1070.3,668.6L1066.5,670.0L1062.7,671.3L1058.9,672.7L1055.1,674.1L1051.3,675.6L1047.5,677.0L1043.6,678.4L1039.7,679.8L1035.8,681.3L1031.9,682.7L1027.9,684.2L1023.9,685.6L1019.9,687.1L1015.9,688.6L1011.9,690.1L1007.8,691.6L1003.8,693.1L999.7,694.6L995.5,696.1L991.4,697.6L987.2,699.1L983.1,700.7L978.8,702.2L974.6,703.8L970.4,705.4L966.1,706.9L961.8,708.5L957.4,710.1L953.1,711.7L948.7,713.3L944.3,714.9L939.9,716.6L935.5,718.2L931.0,719.9L926.5,721.5L922.0,723.2L917.4,724.8L912.8,726.5L908.2,728.2L903.6,729.9L899.0,731.6L894.3,733.4L889.6,735.1L884.9,736.8L880.1,738.6L875.3,740.3L870.5,742.1L865.7,743.9L860.8,745.7L855.9,747.5L851.0,749.3L846.0,751.1L841.0,753.0L836.0,754.8L831.0,756.7L825.9,758.5L820.8,760.4L815.7,762.3L810.5,764.2L805.3,766.1L800.1,768.0L794.8,770.0L789.5,771.9L784.2,773.9L778.9,775.9L773.5,777.8L768.0,779.8L762.6,781.8L757.1,783.9L751.6,785.9L746.0,787.9L740.4,790.0L734.8,792.1L729.2,794.2L723.5,796.3L717.7,798.4L712.0,800.5L706.1,802.6L700.3,804.8L694.4,806.9L688.5,809.1L682.6,811.3L676.6,813.5L670.5,815.7L664.5,818.0L658.3,820.2L652.2,822.5L646.0,824.8L639.8,827.1L633.5,829.4L627.2,831.7L620.8,834.0L614.4,836.4L608.0,838.8L601.5,841.2L595.0,843.6L588.4,846.0L587.0,846.5Z" fill="url(#axg)"/><text transform="matrix(4.3321,2.0770,-4.5827,1.8371,1231.90,650.51)" x="0" y="2.15" text-anchor="middle" font-family="Liberation Sans" font-size="6.1" fill="#4c4c51">1</text><text transform="matrix(4.6981,2.2525,-4.6075,1.9922,1277.02,672.14)" x="0" y="2.15" text-anchor="middle" font-family="Liberation Sans" font-size="6.1" fill="#4c4c51">2</text><text transform="matrix(5.1125,2.4512,-4.6196,2.1678,1326.03,695.64)" x="0" y="2.15" text-anchor="middle" font-family="Liberation Sans" font-size="6.1" fill="#4c4c51">3</text><text transform="matrix(5.5843,2.6773,-4.6151,2.3676,1379.46,721.25)" x="0" y="2.15" text-anchor="middle" font-family="Liberation Sans" font-size="6.1" fill="#4c4c51">4</text><text transform="matrix(6.1245,2.9364,-4.5892,2.5965,1437.94,749.29)" x="0" y="2.15" text-anchor="middle" font-family="Liberation Sans" font-size="6.1" fill="#4c4c51">5</text><text transform="matrix(6.7471,3.2349,-4.5353,2.8603,1502.22,780.11)" x="0" y="2.15" text-anchor="middle" font-family="Liberation Sans" font-size="6.1" fill="#4c4c51">6</text><text transform="matrix(7.4697,3.5813,-4.4449,3.1664,1573.21,814.15)" x="0" y="2.15" text-anchor="middle" font-family="Liberation Sans" font-size="6.1" fill="#4c4c51">7</text><text transform="matrix(8.3149,3.9865,-4.3065,3.5244,1652.02,851.93)" x="0" y="2.15" text-anchor="middle" font-family="Liberation Sans" font-size="6.1" fill="#4c4c51">8</text><text transform="matrix(9.3121,4.4646,-4.1047,3.9468,1740.01,894.12)" x="0" y="2.15" text-anchor="middle" font-family="Liberation Sans" font-size="6.1" fill="#4c4c51">9</text><polygon points="1171.4,587.2 1165.3,597.5 1170.8,600.5 1176.8,597.7" fill="#000"/><g stroke="#000" stroke-width="0.9" stroke-linejoin="round"><polygon points="1175.3,619.1 1184.6,622.7 1181.3,624.5 1176.5,625.7" fill="#137f95"/><polygon points="1167.4,616.1 1158.4,625.1 1166.2,629.9 1175.3,619.7" fill="#13788d"/><polygon points="1158.4,625.1 1166.2,629.9 1166.2,640.2 1158.4,636.9" fill="#1b9bb6"/><polygon points="1166.2,629.9 1175.3,619.7 1175.6,637.2 1166.2,640.2" fill="#13849b"/></g></g></svg>
<div class="r" style="left:622px;top:108px;width:204px;height:38px;background:#7f7f83;"></div>
<svg style="left:0px;top:0px" width="1920" height="200" viewBox="0 0 1920 200"><path d="M630,128.5 L644.7,113.8 L650,119.1 L650,114.1 L654,114.1 L654,123 L659.7,128.5 L654,128.5 L654,140 L648.1,140 L648.1,132.3 L641.6,132.3 L641.6,140 L635.6,140 L635.6,128.5 Z" fill="#fff"/><g fill="none" stroke="#fff" stroke-width="3.3"><path d="M682.88,118.39 A9.35,9.35 0 0 0 679.0,135.16"/><path d="M686.12,136.81 A9.35,9.35 0 0 0 689.32,119.59"/></g><polygon points="677.8,139.3 685,137.6 681.3,131" fill="#fff"/><polygon points="691.2,115 684.4,117.3 687.6,123.5" fill="#fff"/><rect x="707.6" y="111.6" width="30.8" height="30.8" fill="none" stroke="#fff" stroke-width="1.3"/><g fill="#fff"><rect x="711" y="126.1" width="24" height="1.7"/><rect x="722.2" y="116" width="1.7" height="22.5"/><polygon points="709,126.9 714.4,123.3 714.4,130.5"/><polygon points="737,126.9 731.6,123.3 731.6,130.5"/><polygon points="723.1,113.6 719.7,119.2 726.5,119.2"/><polygon points="723.1,140.6 719.7,135 726.5,135"/></g><path d="M752.4,119.4 L760.6,116.5 L769,119.4 L764,120.2 L765.3,131.6 L774,132.3 L760.6,138.6 L748.7,132.3 L755.8,131.6 L757.2,120.2 Z" fill="#fff"/><rect x="782.9" y="111" width="2.1" height="32" fill="#fff"/><rect x="801.4" y="112.9" width="7.7" height="6" fill="none" stroke="#fff" stroke-width="1.8"/><path d="M798.5,130.2 Q799,128 801,128 L803.9,128.6 L803.9,117.6 Q805.4,115.6 806.9,117.6 L806.9,124.5 Q808,124.2 809.1,124.9 L812.3,126.4 Q814.6,127.6 815,129.5 L815.1,131 L814,136.1 L812.3,141.8 L803.5,141.8 L801.7,136.9 Z" fill="#fff"/></svg>
<div class="r" style="left:1768px;top:103px;width:150px;height:923px;background:#444444;"></div>
<div class="r" style="left:1768px;top:103px;width:150px;height:1px;background:#ffffff;"></div>
<div class="r" style="left:1768px;top:1025px;width:150px;height:1px;background:#ffffff;"></div>
<svg style="left:1783px;top:122.5px" width="14" height="16"><path d="M2.6,1.6 L9,7.6 L2.6,13.6" fill="none" stroke="#fff" stroke-width="3"/></svg>
<div class="t" style="left:1811.7px;top:121.7px;font-size:16.3px;line-height:16.3px;color:#f0f0f0;">ROTATE</div>
<svg style="left:1783px;top:164.5px" width="14" height="16"><path d="M2.6,1.6 L9,7.6 L2.6,13.6" fill="none" stroke="#fff" stroke-width="3"/></svg>
<div class="t" style="left:1811.7px;top:163.7px;font-size:16.3px;line-height:16.3px;color:#f0f0f0;">SCALE</div>
<svg style="left:1783px;top:206.5px" width="14" height="16"><path d="M2.6,1.6 L9,7.6 L2.6,13.6" fill="none" stroke="#fff" stroke-width="3"/></svg>
<div class="t" style="left:1811.7px;top:205.7px;font-size:16.3px;line-height:16.3px;color:#f0f0f0;">MIRROR</div>
<svg style="left:1783px;top:248.5px" width="14" height="16"><path d="M2.6,1.6 L9,7.6 L2.6,13.6" fill="none" stroke="#fff" stroke-width="3"/></svg>
<div class="t" style="left:1811.7px;top:247.7px;font-size:16.3px;line-height:16.3px;color:#f0f0f0;">DISPLAY</div>
<svg style="left:620px;top:1030px" width="45" height="40"><path d="M6.3,25.2 L22,17 L37.4,25.2 L22,33.1 Z" fill="#fff"/><path d="M17.8,7 C22.5,7.5 25,11 24.4,16.3 L28.1,16.3 L22.4,23.7 L16.9,16.3 L20.2,16.3 C20.5,12 19.8,9 17.8,7 Z" fill="#fff" stroke="#444" stroke-width="1.8" paint-order="stroke"/></svg>
<div class="t" style="left:658.0px;top:1041.0px;font-size:16px;line-height:16px;color:#f0f0f0;">Insert</div>
<div class="r" style="left:719px;top:1031px;width:2px;height:35px;background:#e8e8e8;"></div>
<div class="r" style="left:976px;top:1031px;width:2px;height:35px;background:#e8e8e8;"></div>
<div class="r" style="left:1107px;top:1031px;width:2px;height:35px;background:#e8e8e8;"></div>
<div class="t" style="left:730.3px;top:1041.0px;font-size:16px;line-height:16px;color:#f0f0f0;">Ungroup</div>
<div class="t" style="left:804.0px;top:1041.0px;font-size:16px;line-height:16px;color:#f0f0f0;">Group</div>
<div class="t" style="left:860.8px;top:1041.0px;font-size:16px;line-height:16px;color:#f0f0f0;">Align</div>
<div class="t" style="left:909.2px;top:1041.0px;font-size:16px;line-height:16px;color:#f0f0f0;">Arrange</div>
<div class="t" style="left:987.3px;top:1041.0px;font-size:16px;line-height:16px;color:#f0f0f0;">Copy</div>
<div class="t" style="left:1036.7px;top:1041.0px;font-size:16px;line-height:16px;color:#f0f0f0;">Remove</div>
<div class="t" style="left:1117.8px;top:1041.0px;font-size:16px;line-height:16px;color:#f0f0f0;">Cancel</div>
</body></html>
